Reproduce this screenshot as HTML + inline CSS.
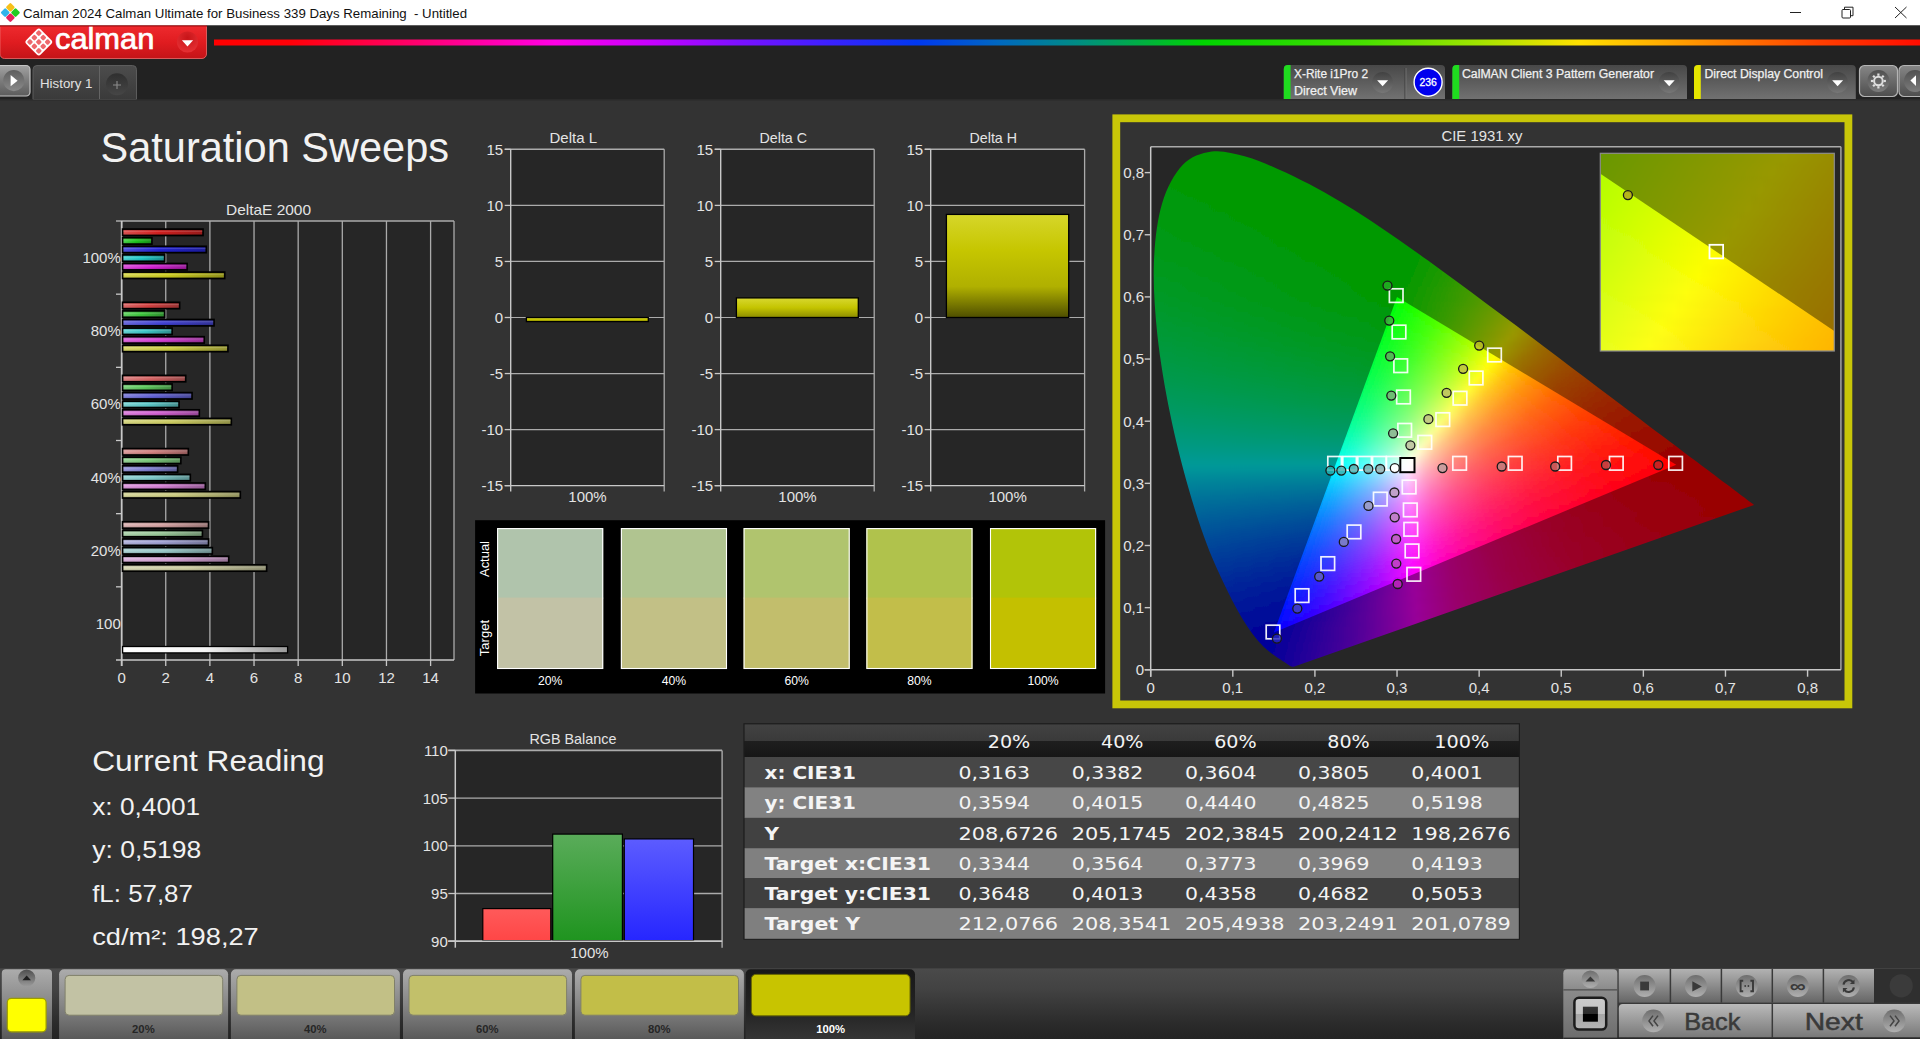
<!DOCTYPE html>
<html lang="en"><head><meta charset="utf-8"><title>Calman 2024 - Saturation Sweeps</title>
<style>
html,body{margin:0;padding:0;background:#333333;overflow:hidden;}
body{width:1920px;height:1039px;font-family:"Liberation Sans",sans-serif;}
svg{display:block;font-family:"Liberation Sans",sans-serif;}
</style></head><body>
<svg width="1920" height="1039" viewBox="0 0 1920 1039">
<defs>
<linearGradient id="rb" x1="0" y1="0" x2="1" y2="0"><stop offset="0" stop-color="#ff0000"/><stop offset="0.045" stop-color="#ff0008"/><stop offset="0.12" stop-color="#ff0070"/><stop offset="0.2" stop-color="#ff00e6"/><stop offset="0.255" stop-color="#c800ff"/><stop offset="0.307" stop-color="#7c10ff"/><stop offset="0.36" stop-color="#3c20ff"/><stop offset="0.412" stop-color="#0038f0"/><stop offset="0.46" stop-color="#0068c0"/><stop offset="0.506" stop-color="#008c84"/><stop offset="0.545" stop-color="#00b040"/><stop offset="0.58" stop-color="#00d400"/><stop offset="0.675" stop-color="#48e000"/><stop offset="0.74" stop-color="#a0e400"/><stop offset="0.8" stop-color="#ffe000"/><stop offset="0.845" stop-color="#ffb000"/><stop offset="0.885" stop-color="#ff8000"/><stop offset="0.94" stop-color="#ff4000"/><stop offset="1" stop-color="#ff0c00"/></linearGradient>
<linearGradient id="cr" x1="0" y1="0" x2="0" y2="1"><stop offset="0" stop-color="#ee2a2e"/><stop offset="0.5" stop-color="#e01c20"/><stop offset="1" stop-color="#c41418"/></linearGradient>
<radialGradient id="crd" cx="0.5" cy="0.3" r="0.8"><stop offset="0" stop-color="#c81418"/><stop offset="1" stop-color="#ea3438"/></radialGradient>
<linearGradient id="pb" x1="0" y1="0" x2="0" y2="1"><stop offset="0" stop-color="#a2a2a2"/><stop offset="0.5" stop-color="#7c7c7c"/><stop offset="1" stop-color="#5c5c5c"/></linearGradient>
<linearGradient id="pbc" x1="0" y1="0" x2="0" y2="1"><stop offset="0" stop-color="#5e5e5e"/><stop offset="1" stop-color="#8a8a8a"/></linearGradient>
<linearGradient id="ht" x1="0" y1="0" x2="0" y2="1"><stop offset="0" stop-color="#4c4c4c"/><stop offset="1" stop-color="#3a3a3a"/></linearGradient>
<linearGradient id="plc" x1="0" y1="0" x2="0" y2="1"><stop offset="0" stop-color="#2f2f2f"/><stop offset="1" stop-color="#464646"/></linearGradient>
<linearGradient id="tb" x1="0" y1="0" x2="0" y2="1"><stop offset="0" stop-color="#484848"/><stop offset="1" stop-color="#717171"/></linearGradient>
<linearGradient id="ddc" x1="0" y1="0" x2="0" y2="1"><stop offset="0" stop-color="#414141"/><stop offset="1" stop-color="#777777"/></linearGradient>
<linearGradient id="gb" x1="0" y1="0" x2="0" y2="1"><stop offset="0" stop-color="#868686"/><stop offset="1" stop-color="#4e4e4e"/></linearGradient>
<linearGradient id="gbc" x1="0" y1="0" x2="0" y2="1"><stop offset="0" stop-color="#505050"/><stop offset="1" stop-color="#7c7c7c"/></linearGradient>
<linearGradient id="gloss" x1="0" y1="0" x2="0" y2="1"><stop offset="0" stop-color="rgba(0,0,0,0.18)"/><stop offset="0.3" stop-color="rgba(255,255,255,0.22)"/><stop offset="0.55" stop-color="rgba(255,255,255,0.05)"/><stop offset="1" stop-color="rgba(0,0,0,0.22)"/></linearGradient>
<linearGradient id="b0" x1="0" y1="0" x2="1" y2="0"><stop offset="0" stop-color="#da4545"/><stop offset="0.45" stop-color="#d01010"/><stop offset="1" stop-color="#920b0b"/></linearGradient>
<linearGradient id="b1" x1="0" y1="0" x2="1" y2="0"><stop offset="0" stop-color="#45d145"/><stop offset="0.45" stop-color="#10c410"/><stop offset="1" stop-color="#0b890b"/></linearGradient>
<linearGradient id="b2" x1="0" y1="0" x2="1" y2="0"><stop offset="0" stop-color="#4545da"/><stop offset="0.45" stop-color="#1010d0"/><stop offset="1" stop-color="#0b0b92"/></linearGradient>
<linearGradient id="b3" x1="0" y1="0" x2="1" y2="0"><stop offset="0" stop-color="#45d1d1"/><stop offset="0.45" stop-color="#10c4c4"/><stop offset="1" stop-color="#0b8989"/></linearGradient>
<linearGradient id="b4" x1="0" y1="0" x2="1" y2="0"><stop offset="0" stop-color="#da45da"/><stop offset="0.45" stop-color="#d010d0"/><stop offset="1" stop-color="#920b92"/></linearGradient>
<linearGradient id="b5" x1="0" y1="0" x2="1" y2="0"><stop offset="0" stop-color="#d4d445"/><stop offset="0.45" stop-color="#c8c810"/><stop offset="1" stop-color="#8c8c0b"/></linearGradient>
<linearGradient id="b6" x1="0" y1="0" x2="1" y2="0"><stop offset="0" stop-color="#da5f5f"/><stop offset="0.45" stop-color="#d03232"/><stop offset="1" stop-color="#922323"/></linearGradient>
<linearGradient id="b7" x1="0" y1="0" x2="1" y2="0"><stop offset="0" stop-color="#5ed15e"/><stop offset="0.45" stop-color="#30c430"/><stop offset="1" stop-color="#228922"/></linearGradient>
<linearGradient id="b8" x1="0" y1="0" x2="1" y2="0"><stop offset="0" stop-color="#5f5fda"/><stop offset="0.45" stop-color="#3232d0"/><stop offset="1" stop-color="#232392"/></linearGradient>
<linearGradient id="b9" x1="0" y1="0" x2="1" y2="0"><stop offset="0" stop-color="#5ed1d1"/><stop offset="0.45" stop-color="#30c4c4"/><stop offset="1" stop-color="#228989"/></linearGradient>
<linearGradient id="b10" x1="0" y1="0" x2="1" y2="0"><stop offset="0" stop-color="#da5fda"/><stop offset="0.45" stop-color="#d032d0"/><stop offset="1" stop-color="#922392"/></linearGradient>
<linearGradient id="b11" x1="0" y1="0" x2="1" y2="0"><stop offset="0" stop-color="#d4d45f"/><stop offset="0.45" stop-color="#c8c832"/><stop offset="1" stop-color="#8c8c23"/></linearGradient>
<linearGradient id="b12" x1="0" y1="0" x2="1" y2="0"><stop offset="0" stop-color="#da7a7a"/><stop offset="0.45" stop-color="#d05555"/><stop offset="1" stop-color="#923c3c"/></linearGradient>
<linearGradient id="b13" x1="0" y1="0" x2="1" y2="0"><stop offset="0" stop-color="#76d176"/><stop offset="0.45" stop-color="#50c450"/><stop offset="1" stop-color="#388938"/></linearGradient>
<linearGradient id="b14" x1="0" y1="0" x2="1" y2="0"><stop offset="0" stop-color="#7a7ada"/><stop offset="0.45" stop-color="#5555d0"/><stop offset="1" stop-color="#3c3c92"/></linearGradient>
<linearGradient id="b15" x1="0" y1="0" x2="1" y2="0"><stop offset="0" stop-color="#76d1d1"/><stop offset="0.45" stop-color="#50c4c4"/><stop offset="1" stop-color="#388989"/></linearGradient>
<linearGradient id="b16" x1="0" y1="0" x2="1" y2="0"><stop offset="0" stop-color="#da7ada"/><stop offset="0.45" stop-color="#d055d0"/><stop offset="1" stop-color="#923c92"/></linearGradient>
<linearGradient id="b17" x1="0" y1="0" x2="1" y2="0"><stop offset="0" stop-color="#d4d47a"/><stop offset="0.45" stop-color="#c8c855"/><stop offset="1" stop-color="#8c8c3c"/></linearGradient>
<linearGradient id="b18" x1="0" y1="0" x2="1" y2="0"><stop offset="0" stop-color="#da9595"/><stop offset="0.45" stop-color="#d07777"/><stop offset="1" stop-color="#925353"/></linearGradient>
<linearGradient id="b19" x1="0" y1="0" x2="1" y2="0"><stop offset="0" stop-color="#90d190"/><stop offset="0.45" stop-color="#71c471"/><stop offset="1" stop-color="#4f894f"/></linearGradient>
<linearGradient id="b20" x1="0" y1="0" x2="1" y2="0"><stop offset="0" stop-color="#9595da"/><stop offset="0.45" stop-color="#7777d0"/><stop offset="1" stop-color="#535392"/></linearGradient>
<linearGradient id="b21" x1="0" y1="0" x2="1" y2="0"><stop offset="0" stop-color="#90d1d1"/><stop offset="0.45" stop-color="#71c4c4"/><stop offset="1" stop-color="#4f8989"/></linearGradient>
<linearGradient id="b22" x1="0" y1="0" x2="1" y2="0"><stop offset="0" stop-color="#da95da"/><stop offset="0.45" stop-color="#d077d0"/><stop offset="1" stop-color="#925392"/></linearGradient>
<linearGradient id="b23" x1="0" y1="0" x2="1" y2="0"><stop offset="0" stop-color="#d4d495"/><stop offset="0.45" stop-color="#c8c877"/><stop offset="1" stop-color="#8c8c53"/></linearGradient>
<linearGradient id="b24" x1="0" y1="0" x2="1" y2="0"><stop offset="0" stop-color="#dab0b0"/><stop offset="0.45" stop-color="#d09a9a"/><stop offset="1" stop-color="#926c6c"/></linearGradient>
<linearGradient id="b25" x1="0" y1="0" x2="1" y2="0"><stop offset="0" stop-color="#a9d1a9"/><stop offset="0.45" stop-color="#91c491"/><stop offset="1" stop-color="#668966"/></linearGradient>
<linearGradient id="b26" x1="0" y1="0" x2="1" y2="0"><stop offset="0" stop-color="#b0b0da"/><stop offset="0.45" stop-color="#9a9ad0"/><stop offset="1" stop-color="#6c6c92"/></linearGradient>
<linearGradient id="b27" x1="0" y1="0" x2="1" y2="0"><stop offset="0" stop-color="#a9d1d1"/><stop offset="0.45" stop-color="#91c4c4"/><stop offset="1" stop-color="#668989"/></linearGradient>
<linearGradient id="b28" x1="0" y1="0" x2="1" y2="0"><stop offset="0" stop-color="#dab0da"/><stop offset="0.45" stop-color="#d09ad0"/><stop offset="1" stop-color="#926c92"/></linearGradient>
<linearGradient id="b29" x1="0" y1="0" x2="1" y2="0"><stop offset="0" stop-color="#d4d4b0"/><stop offset="0.45" stop-color="#c8c89a"/><stop offset="1" stop-color="#8c8c6c"/></linearGradient>
<linearGradient id="bw" x1="0" y1="0" x2="1" y2="0"><stop offset="0" stop-color="#ffffff"/><stop offset="0.5" stop-color="#f4f4f4"/><stop offset="1" stop-color="#9a9a9a"/></linearGradient>
<linearGradient id="ybar" x1="0" y1="0" x2="0" y2="1"><stop offset="0" stop-color="#d6d62a"/><stop offset="0.35" stop-color="#c6c600"/><stop offset="0.7" stop-color="#b0b000"/><stop offset="1" stop-color="#4e4e00"/></linearGradient>
<linearGradient id="ybar2" x1="0" y1="0" x2="0" y2="1"><stop offset="0" stop-color="#d8d830"/><stop offset="0.5" stop-color="#c4c400"/><stop offset="1" stop-color="#8c8c00"/></linearGradient>
<linearGradient id="co0" gradientUnits="userSpaceOnUse" x1="1186.1" x2="1261.7" y1="0" y2="0"><stop offset="0.000" stop-color="#009900"/><stop offset="1.000" stop-color="#009900"/></linearGradient><linearGradient id="co1" gradientUnits="userSpaceOnUse" x1="1175.4" x2="1274.8" y1="0" y2="0"><stop offset="0.000" stop-color="#009900"/><stop offset="1.000" stop-color="#009900"/></linearGradient><linearGradient id="co2" gradientUnits="userSpaceOnUse" x1="1172.2" x2="1287.5" y1="0" y2="0"><stop offset="0.000" stop-color="#009900"/><stop offset="1.000" stop-color="#009900"/></linearGradient><linearGradient id="co3" gradientUnits="userSpaceOnUse" x1="1169.5" x2="1297.9" y1="0" y2="0"><stop offset="0.000" stop-color="#009901"/><stop offset="1.000" stop-color="#009900"/></linearGradient><linearGradient id="co4" gradientUnits="userSpaceOnUse" x1="1166.8" x2="1308.3" y1="0" y2="0"><stop offset="0.000" stop-color="#009902"/><stop offset="1.000" stop-color="#009900"/></linearGradient><linearGradient id="co5" gradientUnits="userSpaceOnUse" x1="1164.1" x2="1318.4" y1="0" y2="0"><stop offset="0.000" stop-color="#009904"/><stop offset="0.800" stop-color="#009900"/><stop offset="1.000" stop-color="#009900"/></linearGradient><linearGradient id="co6" gradientUnits="userSpaceOnUse" x1="1161.5" x2="1327.3" y1="0" y2="0"><stop offset="0.000" stop-color="#009905"/><stop offset="0.556" stop-color="#009900"/><stop offset="1.000" stop-color="#009900"/></linearGradient><linearGradient id="co7" gradientUnits="userSpaceOnUse" x1="1158.8" x2="1336.2" y1="0" y2="0"><stop offset="0.000" stop-color="#009906"/><stop offset="0.552" stop-color="#009900"/><stop offset="1.000" stop-color="#009900"/></linearGradient><linearGradient id="co8" gradientUnits="userSpaceOnUse" x1="1156.1" x2="1345.1" y1="0" y2="0"><stop offset="0.000" stop-color="#009908"/><stop offset="0.516" stop-color="#009900"/><stop offset="1.000" stop-color="#009900"/></linearGradient><linearGradient id="co9" gradientUnits="userSpaceOnUse" x1="1153.9" x2="1353.3" y1="0" y2="0"><stop offset="0.000" stop-color="#009909"/><stop offset="0.545" stop-color="#009900"/><stop offset="1.000" stop-color="#009900"/></linearGradient><linearGradient id="co10" gradientUnits="userSpaceOnUse" x1="1153.2" x2="1361.2" y1="0" y2="0"><stop offset="0.000" stop-color="#00990b"/><stop offset="0.500" stop-color="#009900"/><stop offset="1.000" stop-color="#009900"/></linearGradient><linearGradient id="co11" gradientUnits="userSpaceOnUse" x1="1152.6" x2="1369.2" y1="0" y2="0"><stop offset="0.000" stop-color="#00990c"/><stop offset="0.556" stop-color="#009900"/><stop offset="1.000" stop-color="#009900"/></linearGradient><linearGradient id="co12" gradientUnits="userSpaceOnUse" x1="1151.9" x2="1377.2" y1="0" y2="0"><stop offset="0.000" stop-color="#00990d"/><stop offset="0.541" stop-color="#009900"/><stop offset="1.000" stop-color="#009900"/></linearGradient><linearGradient id="co13" gradientUnits="userSpaceOnUse" x1="1151.2" x2="1384.6" y1="0" y2="0"><stop offset="0.000" stop-color="#00990f"/><stop offset="0.579" stop-color="#009900"/><stop offset="1.000" stop-color="#009900"/></linearGradient><linearGradient id="co14" gradientUnits="userSpaceOnUse" x1="1150.7" x2="1392.0" y1="0" y2="0"><stop offset="0.000" stop-color="#009910"/><stop offset="0.575" stop-color="#009900"/><stop offset="1.000" stop-color="#009900"/></linearGradient><linearGradient id="co15" gradientUnits="userSpaceOnUse" x1="1150.7" x2="1399.3" y1="0" y2="0"><stop offset="0.000" stop-color="#009911"/><stop offset="0.610" stop-color="#009900"/><stop offset="1.000" stop-color="#009900"/></linearGradient><linearGradient id="co16" gradientUnits="userSpaceOnUse" x1="1150.7" x2="1406.7" y1="0" y2="0"><stop offset="0.000" stop-color="#009913"/><stop offset="0.619" stop-color="#009900"/><stop offset="1.000" stop-color="#009900"/></linearGradient><linearGradient id="co17" gradientUnits="userSpaceOnUse" x1="1150.7" x2="1413.8" y1="0" y2="0"><stop offset="0.000" stop-color="#009914"/><stop offset="0.628" stop-color="#009900"/><stop offset="1.000" stop-color="#009900"/></linearGradient><linearGradient id="co18" gradientUnits="userSpaceOnUse" x1="1150.7" x2="1420.8" y1="0" y2="0"><stop offset="0.000" stop-color="#009915"/><stop offset="0.644" stop-color="#009900"/><stop offset="1.000" stop-color="#029900"/></linearGradient><linearGradient id="co19" gradientUnits="userSpaceOnUse" x1="1150.7" x2="1427.9" y1="0" y2="0"><stop offset="0.000" stop-color="#009917"/><stop offset="0.630" stop-color="#009900"/><stop offset="0.957" stop-color="#009900"/><stop offset="1.000" stop-color="#089900"/></linearGradient><linearGradient id="co20" gradientUnits="userSpaceOnUse" x1="1150.7" x2="1435.0" y1="0" y2="0"><stop offset="0.000" stop-color="#009918"/><stop offset="0.660" stop-color="#009900"/><stop offset="0.936" stop-color="#029900"/><stop offset="1.000" stop-color="#0f9900"/></linearGradient><linearGradient id="co21" gradientUnits="userSpaceOnUse" x1="1150.7" x2="1441.9" y1="0" y2="0"><stop offset="0.000" stop-color="#00991a"/><stop offset="0.667" stop-color="#009900"/><stop offset="0.896" stop-color="#009900"/><stop offset="1.000" stop-color="#169900"/></linearGradient><linearGradient id="co22" gradientUnits="userSpaceOnUse" x1="1150.7" x2="1448.7" y1="0" y2="0"><stop offset="0.000" stop-color="#00991b"/><stop offset="0.673" stop-color="#009900"/><stop offset="0.878" stop-color="#019900"/><stop offset="1.000" stop-color="#1e9900"/></linearGradient><linearGradient id="co23" gradientUnits="userSpaceOnUse" x1="1150.7" x2="1455.6" y1="0" y2="0"><stop offset="0.000" stop-color="#00991d"/><stop offset="0.700" stop-color="#009900"/><stop offset="0.860" stop-color="#039900"/><stop offset="1.000" stop-color="#269900"/></linearGradient><linearGradient id="co24" gradientUnits="userSpaceOnUse" x1="1150.7" x2="1462.5" y1="0" y2="0"><stop offset="0.000" stop-color="#00991f"/><stop offset="0.706" stop-color="#009900"/><stop offset="0.824" stop-color="#009900"/><stop offset="1.000" stop-color="#2e9900"/></linearGradient><linearGradient id="co25" gradientUnits="userSpaceOnUse" x1="1150.7" x2="1469.3" y1="0" y2="0"><stop offset="0.000" stop-color="#009920"/><stop offset="0.717" stop-color="#009900"/><stop offset="0.811" stop-color="#039900"/><stop offset="1.000" stop-color="#379900"/></linearGradient><linearGradient id="co26" gradientUnits="userSpaceOnUse" x1="1150.7" x2="1476.0" y1="0" y2="0"><stop offset="0.000" stop-color="#009922"/><stop offset="0.722" stop-color="#009900"/><stop offset="0.778" stop-color="#009900"/><stop offset="1.000" stop-color="#409900"/></linearGradient><linearGradient id="co27" gradientUnits="userSpaceOnUse" x1="1150.7" x2="1482.7" y1="0" y2="0"><stop offset="0.000" stop-color="#009924"/><stop offset="0.727" stop-color="#009900"/><stop offset="0.782" stop-color="#079900"/><stop offset="1.000" stop-color="#499900"/></linearGradient><linearGradient id="co28" gradientUnits="userSpaceOnUse" x1="1150.7" x2="1489.5" y1="0" y2="0"><stop offset="0.000" stop-color="#009925"/><stop offset="0.625" stop-color="#009905"/><stop offset="0.732" stop-color="#009900"/><stop offset="0.982" stop-color="#4d9900"/><stop offset="1.000" stop-color="#549900"/></linearGradient><linearGradient id="co29" gradientUnits="userSpaceOnUse" x1="1150.7" x2="1496.2" y1="0" y2="0"><stop offset="0.000" stop-color="#009927"/><stop offset="0.667" stop-color="#009903"/><stop offset="0.719" stop-color="#019900"/><stop offset="0.965" stop-color="#519900"/><stop offset="1.000" stop-color="#5e9900"/></linearGradient><linearGradient id="co30" gradientUnits="userSpaceOnUse" x1="1150.7" x2="1502.9" y1="0" y2="0"><stop offset="0.000" stop-color="#009929"/><stop offset="0.690" stop-color="#009902"/><stop offset="0.862" stop-color="#359900"/><stop offset="1.000" stop-color="#6a9900"/></linearGradient><linearGradient id="co31" gradientUnits="userSpaceOnUse" x1="1150.7" x2="1509.6" y1="0" y2="0"><stop offset="0.000" stop-color="#00992b"/><stop offset="0.661" stop-color="#009905"/><stop offset="0.695" stop-color="#059902"/><stop offset="0.898" stop-color="#4c9900"/><stop offset="1.000" stop-color="#769900"/></linearGradient><linearGradient id="co32" gradientUnits="userSpaceOnUse" x1="1150.7" x2="1516.3" y1="0" y2="0"><stop offset="0.000" stop-color="#00992d"/><stop offset="0.650" stop-color="#009907"/><stop offset="0.750" stop-color="#1d9900"/><stop offset="0.950" stop-color="#6c9900"/><stop offset="1.000" stop-color="#849900"/></linearGradient><linearGradient id="co33" gradientUnits="userSpaceOnUse" x1="1150.7" x2="1523.0" y1="0" y2="0"><stop offset="0.000" stop-color="#00992f"/><stop offset="0.581" stop-color="#00990d"/><stop offset="0.645" stop-color="#009908"/><stop offset="0.790" stop-color="#349900"/><stop offset="0.968" stop-color="#829900"/><stop offset="1.000" stop-color="#929900"/></linearGradient><linearGradient id="co34" gradientUnits="userSpaceOnUse" x1="1150.7" x2="1529.7" y1="0" y2="0"><stop offset="0.000" stop-color="#009931"/><stop offset="0.556" stop-color="#009911"/><stop offset="0.635" stop-color="#02990a"/><stop offset="0.778" stop-color="#379900"/><stop offset="0.952" stop-color="#879900"/><stop offset="0.984" stop-color="#989900"/><stop offset="1.000" stop-color="#999100"/></linearGradient><linearGradient id="co35" gradientUnits="userSpaceOnUse" x1="1150.7" x2="1536.3" y1="0" y2="0"><stop offset="0.000" stop-color="#009933"/><stop offset="0.563" stop-color="#009912"/><stop offset="0.609" stop-color="#00990e"/><stop offset="0.797" stop-color="#489900"/><stop offset="0.953" stop-color="#969900"/><stop offset="1.000" stop-color="#998400"/></linearGradient><linearGradient id="co36" gradientUnits="userSpaceOnUse" x1="1150.7" x2="1542.9" y1="0" y2="0"><stop offset="0.000" stop-color="#009936"/><stop offset="0.600" stop-color="#019910"/><stop offset="0.785" stop-color="#4d9900"/><stop offset="0.923" stop-color="#949900"/><stop offset="0.954" stop-color="#998d00"/><stop offset="1.000" stop-color="#997800"/></linearGradient><linearGradient id="co37" gradientUnits="userSpaceOnUse" x1="1150.7" x2="1549.6" y1="0" y2="0"><stop offset="0.000" stop-color="#009938"/><stop offset="0.545" stop-color="#009916"/><stop offset="0.591" stop-color="#039912"/><stop offset="0.773" stop-color="#519900"/><stop offset="0.909" stop-color="#999700"/><stop offset="1.000" stop-color="#996d00"/></linearGradient><linearGradient id="co38" gradientUnits="userSpaceOnUse" x1="1150.7" x2="1556.2" y1="0" y2="0"><stop offset="0.000" stop-color="#00993a"/><stop offset="0.537" stop-color="#009919"/><stop offset="0.567" stop-color="#009916"/><stop offset="0.731" stop-color="#469906"/><stop offset="0.851" stop-color="#869900"/><stop offset="0.881" stop-color="#989900"/><stop offset="0.970" stop-color="#996e00"/><stop offset="1.000" stop-color="#996400"/></linearGradient><linearGradient id="co39" gradientUnits="userSpaceOnUse" x1="1150.7" x2="1562.8" y1="0" y2="0"><stop offset="0.000" stop-color="#00993d"/><stop offset="0.559" stop-color="#019919"/><stop offset="0.735" stop-color="#529907"/><stop offset="0.824" stop-color="#849900"/><stop offset="0.853" stop-color="#969900"/><stop offset="0.956" stop-color="#996900"/><stop offset="1.000" stop-color="#995b00"/></linearGradient><linearGradient id="co40" gradientUnits="userSpaceOnUse" x1="1150.7" x2="1569.5" y1="0" y2="0"><stop offset="0.000" stop-color="#00993f"/><stop offset="0.536" stop-color="#00991d"/><stop offset="0.638" stop-color="#2a9913"/><stop offset="0.797" stop-color="#819900"/><stop offset="0.841" stop-color="#999500"/><stop offset="0.928" stop-color="#996a00"/><stop offset="1.000" stop-color="#995300"/></linearGradient><linearGradient id="co41" gradientUnits="userSpaceOnUse" x1="1150.8" x2="1576.1" y1="0" y2="0"><stop offset="0.000" stop-color="#009942"/><stop offset="0.514" stop-color="#009921"/><stop offset="0.543" stop-color="#06991e"/><stop offset="0.714" stop-color="#5b990c"/><stop offset="0.814" stop-color="#999800"/><stop offset="0.886" stop-color="#997100"/><stop offset="1.000" stop-color="#994b00"/></linearGradient><linearGradient id="co42" gradientUnits="userSpaceOnUse" x1="1151.6" x2="1582.7" y1="0" y2="0"><stop offset="0.000" stop-color="#009944"/><stop offset="0.493" stop-color="#009925"/><stop offset="0.521" stop-color="#029922"/><stop offset="0.690" stop-color="#589910"/><stop offset="0.789" stop-color="#989903"/><stop offset="0.859" stop-color="#997200"/><stop offset="0.972" stop-color="#994b00"/><stop offset="1.000" stop-color="#994500"/></linearGradient><linearGradient id="co43" gradientUnits="userSpaceOnUse" x1="1152.4" x2="1589.3" y1="0" y2="0"><stop offset="0.000" stop-color="#009947"/><stop offset="0.486" stop-color="#009928"/><stop offset="0.514" stop-color="#059925"/><stop offset="0.667" stop-color="#559915"/><stop offset="0.764" stop-color="#969908"/><stop offset="0.847" stop-color="#996d00"/><stop offset="0.944" stop-color="#994c00"/><stop offset="1.000" stop-color="#993e00"/></linearGradient><linearGradient id="co44" gradientUnits="userSpaceOnUse" x1="1153.2" x2="1596.0" y1="0" y2="0"><stop offset="0.000" stop-color="#009949"/><stop offset="0.466" stop-color="#00992c"/><stop offset="0.493" stop-color="#019929"/><stop offset="0.644" stop-color="#52991a"/><stop offset="0.740" stop-color="#93990d"/><stop offset="0.767" stop-color="#998b08"/><stop offset="0.849" stop-color="#996200"/><stop offset="0.973" stop-color="#993e00"/><stop offset="1.000" stop-color="#993900"/></linearGradient><linearGradient id="co45" gradientUnits="userSpaceOnUse" x1="1154.0" x2="1602.6" y1="0" y2="0"><stop offset="0.000" stop-color="#00994c"/><stop offset="0.473" stop-color="#00992e"/><stop offset="0.595" stop-color="#3e9922"/><stop offset="0.730" stop-color="#999710"/><stop offset="0.797" stop-color="#996e04"/><stop offset="0.905" stop-color="#994800"/><stop offset="1.000" stop-color="#993300"/></linearGradient><linearGradient id="co46" gradientUnits="userSpaceOnUse" x1="1154.8" x2="1609.2" y1="0" y2="0"><stop offset="0.000" stop-color="#00994f"/><stop offset="0.440" stop-color="#009934"/><stop offset="0.467" stop-color="#009931"/><stop offset="0.613" stop-color="#549922"/><stop offset="0.707" stop-color="#999916"/><stop offset="0.773" stop-color="#996f08"/><stop offset="0.880" stop-color="#994800"/><stop offset="1.000" stop-color="#992e00"/></linearGradient><linearGradient id="co47" gradientUnits="userSpaceOnUse" x1="1155.6" x2="1615.9" y1="0" y2="0"><stop offset="0.000" stop-color="#009952"/><stop offset="0.461" stop-color="#039935"/><stop offset="0.592" stop-color="#519927"/><stop offset="0.684" stop-color="#96991b"/><stop offset="0.763" stop-color="#996a0a"/><stop offset="0.868" stop-color="#994400"/><stop offset="1.000" stop-color="#992a00"/></linearGradient><linearGradient id="co48" gradientUnits="userSpaceOnUse" x1="1156.4" x2="1622.5" y1="0" y2="0"><stop offset="0.000" stop-color="#009955"/><stop offset="0.442" stop-color="#00993a"/><stop offset="0.558" stop-color="#45992e"/><stop offset="0.662" stop-color="#939921"/><stop offset="0.688" stop-color="#998a1a"/><stop offset="0.753" stop-color="#99640c"/><stop offset="0.870" stop-color="#993d00"/><stop offset="1.000" stop-color="#992500"/></linearGradient><linearGradient id="co49" gradientUnits="userSpaceOnUse" x1="1157.3" x2="1629.2" y1="0" y2="0"><stop offset="0.000" stop-color="#009959"/><stop offset="0.436" stop-color="#02993e"/><stop offset="0.564" stop-color="#539931"/><stop offset="0.654" stop-color="#999625"/><stop offset="0.718" stop-color="#996b13"/><stop offset="0.795" stop-color="#994c06"/><stop offset="0.923" stop-color="#992d00"/><stop offset="1.000" stop-color="#992100"/></linearGradient><linearGradient id="co50" gradientUnits="userSpaceOnUse" x1="1158.1" x2="1635.8" y1="0" y2="0"><stop offset="0.000" stop-color="#00995c"/><stop offset="0.418" stop-color="#009943"/><stop offset="0.506" stop-color="#35993b"/><stop offset="0.608" stop-color="#83992f"/><stop offset="0.633" stop-color="#99992b"/><stop offset="0.684" stop-color="#99731b"/><stop offset="0.759" stop-color="#99500c"/><stop offset="0.886" stop-color="#992f00"/><stop offset="1.000" stop-color="#991e00"/></linearGradient><linearGradient id="co51" gradientUnits="userSpaceOnUse" x1="1158.9" x2="1642.4" y1="0" y2="0"><stop offset="0.000" stop-color="#00995f"/><stop offset="0.413" stop-color="#019947"/><stop offset="0.525" stop-color="#4c993d"/><stop offset="0.613" stop-color="#979932"/><stop offset="0.675" stop-color="#996d1d"/><stop offset="0.762" stop-color="#99470c"/><stop offset="0.887" stop-color="#992a00"/><stop offset="1.000" stop-color="#991a00"/></linearGradient><linearGradient id="co52" gradientUnits="userSpaceOnUse" x1="1159.7" x2="1649.0" y1="0" y2="0"><stop offset="0.000" stop-color="#009963"/><stop offset="0.395" stop-color="#00994d"/><stop offset="0.444" stop-color="#1c9949"/><stop offset="0.543" stop-color="#67993f"/><stop offset="0.593" stop-color="#949939"/><stop offset="0.617" stop-color="#99882f"/><stop offset="0.667" stop-color="#99671f"/><stop offset="0.753" stop-color="#99430d"/><stop offset="0.889" stop-color="#992500"/><stop offset="1.000" stop-color="#991700"/></linearGradient><linearGradient id="co53" gradientUnits="userSpaceOnUse" x1="1160.5" x2="1655.6" y1="0" y2="0"><stop offset="0.000" stop-color="#009967"/><stop offset="0.390" stop-color="#009952"/><stop offset="0.488" stop-color="#459949"/><stop offset="0.573" stop-color="#919940"/><stop offset="0.585" stop-color="#99953c"/><stop offset="0.646" stop-color="#996724"/><stop offset="0.744" stop-color="#993f0f"/><stop offset="0.890" stop-color="#992100"/><stop offset="1.000" stop-color="#991300"/></linearGradient><linearGradient id="co54" gradientUnits="userSpaceOnUse" x1="1161.3" x2="1662.3" y1="0" y2="0"><stop offset="0.000" stop-color="#00996b"/><stop offset="0.386" stop-color="#039957"/><stop offset="0.494" stop-color="#55994d"/><stop offset="0.566" stop-color="#999845"/><stop offset="0.614" stop-color="#99702e"/><stop offset="0.675" stop-color="#99501c"/><stop offset="0.795" stop-color="#992d08"/><stop offset="0.928" stop-color="#991800"/><stop offset="1.000" stop-color="#991000"/></linearGradient><linearGradient id="co55" gradientUnits="userSpaceOnUse" x1="1162.1" x2="1668.9" y1="0" y2="0"><stop offset="0.000" stop-color="#00996f"/><stop offset="0.369" stop-color="#00995d"/><stop offset="0.464" stop-color="#479955"/><stop offset="0.548" stop-color="#98994d"/><stop offset="0.595" stop-color="#997134"/><stop offset="0.667" stop-color="#994b1e"/><stop offset="0.786" stop-color="#992a0a"/><stop offset="0.917" stop-color="#991600"/><stop offset="1.000" stop-color="#990e00"/></linearGradient><linearGradient id="co56" gradientUnits="userSpaceOnUse" x1="1163.3" x2="1675.5" y1="0" y2="0"><stop offset="0.000" stop-color="#009973"/><stop offset="0.365" stop-color="#029963"/><stop offset="0.459" stop-color="#4e995b"/><stop offset="0.529" stop-color="#959955"/><stop offset="0.576" stop-color="#99723b"/><stop offset="0.647" stop-color="#994b22"/><stop offset="0.765" stop-color="#99290c"/><stop offset="0.918" stop-color="#991300"/><stop offset="1.000" stop-color="#990b00"/></linearGradient><linearGradient id="co57" gradientUnits="userSpaceOnUse" x1="1164.6" x2="1682.2" y1="0" y2="0"><stop offset="0.000" stop-color="#009978"/><stop offset="0.349" stop-color="#009969"/><stop offset="0.419" stop-color="#359965"/><stop offset="0.500" stop-color="#85995e"/><stop offset="0.512" stop-color="#93995d"/><stop offset="0.535" stop-color="#998650"/><stop offset="0.581" stop-color="#996337"/><stop offset="0.651" stop-color="#994221"/><stop offset="0.779" stop-color="#99220b"/><stop offset="0.919" stop-color="#990f00"/><stop offset="1.000" stop-color="#990800"/></linearGradient><linearGradient id="co58" gradientUnits="userSpaceOnUse" x1="1165.8" x2="1688.8" y1="0" y2="0"><stop offset="0.000" stop-color="#00997c"/><stop offset="0.345" stop-color="#029970"/><stop offset="0.425" stop-color="#46996b"/><stop offset="0.494" stop-color="#909966"/><stop offset="0.506" stop-color="#999462"/><stop offset="0.552" stop-color="#996b43"/><stop offset="0.621" stop-color="#994628"/><stop offset="0.724" stop-color="#992812"/><stop offset="0.908" stop-color="#990d00"/><stop offset="1.000" stop-color="#990600"/></linearGradient><linearGradient id="co59" gradientUnits="userSpaceOnUse" x1="1167.0" x2="1695.5" y1="0" y2="0"><stop offset="0.000" stop-color="#009981"/><stop offset="0.330" stop-color="#009977"/><stop offset="0.386" stop-color="#2d9974"/><stop offset="0.466" stop-color="#80996f"/><stop offset="0.489" stop-color="#99976c"/><stop offset="0.534" stop-color="#996b4a"/><stop offset="0.602" stop-color="#99462d"/><stop offset="0.705" stop-color="#992715"/><stop offset="0.886" stop-color="#990d01"/><stop offset="1.000" stop-color="#990300"/></linearGradient><linearGradient id="co60" gradientUnits="userSpaceOnUse" x1="1168.3" x2="1702.2" y1="0" y2="0"><stop offset="0.000" stop-color="#009986"/><stop offset="0.318" stop-color="#00997e"/><stop offset="0.352" stop-color="#18997d"/><stop offset="0.432" stop-color="#689979"/><stop offset="0.466" stop-color="#919978"/><stop offset="0.477" stop-color="#999272"/><stop offset="0.523" stop-color="#99674e"/><stop offset="0.591" stop-color="#994330"/><stop offset="0.682" stop-color="#992719"/><stop offset="0.864" stop-color="#990c03"/><stop offset="1.000" stop-color="#990100"/></linearGradient><linearGradient id="co61" gradientUnits="userSpaceOnUse" x1="1169.5" x2="1708.8" y1="0" y2="0"><stop offset="0.000" stop-color="#00998c"/><stop offset="0.315" stop-color="#009986"/><stop offset="0.393" stop-color="#4b9984"/><stop offset="0.449" stop-color="#8e9981"/><stop offset="0.461" stop-color="#99957e"/><stop offset="0.506" stop-color="#996856"/><stop offset="0.573" stop-color="#994235"/><stop offset="0.674" stop-color="#99241b"/><stop offset="0.854" stop-color="#990a04"/><stop offset="1.000" stop-color="#990000"/></linearGradient><linearGradient id="co62" gradientUnits="userSpaceOnUse" x1="1170.7" x2="1715.4" y1="0" y2="0"><stop offset="0.000" stop-color="#009991"/><stop offset="0.300" stop-color="#00998e"/><stop offset="0.311" stop-color="#04998e"/><stop offset="0.400" stop-color="#60998c"/><stop offset="0.444" stop-color="#99988a"/><stop offset="0.478" stop-color="#997268"/><stop offset="0.533" stop-color="#994c44"/><stop offset="0.622" stop-color="#992b25"/><stop offset="0.756" stop-color="#99120e"/><stop offset="0.944" stop-color="#990000"/><stop offset="1.000" stop-color="#990000"/></linearGradient><linearGradient id="co63" gradientUnits="userSpaceOnUse" x1="1171.9" x2="1722.0" y1="0" y2="0"><stop offset="0.000" stop-color="#009997"/><stop offset="0.297" stop-color="#009997"/><stop offset="0.363" stop-color="#429997"/><stop offset="0.429" stop-color="#979997"/><stop offset="0.462" stop-color="#997371"/><stop offset="0.516" stop-color="#994c4b"/><stop offset="0.593" stop-color="#992d2d"/><stop offset="0.725" stop-color="#991312"/><stop offset="0.934" stop-color="#990000"/><stop offset="1.000" stop-color="#990000"/></linearGradient><linearGradient id="co64" gradientUnits="userSpaceOnUse" x1="1173.2" x2="1728.6" y1="0" y2="0"><stop offset="0.000" stop-color="#009599"/><stop offset="0.283" stop-color="#009299"/><stop offset="0.304" stop-color="#0e9299"/><stop offset="0.380" stop-color="#619199"/><stop offset="0.424" stop-color="#998e97"/><stop offset="0.457" stop-color="#996a71"/><stop offset="0.511" stop-color="#99464b"/><stop offset="0.598" stop-color="#99272b"/><stop offset="0.750" stop-color="#990c0f"/><stop offset="0.924" stop-color="#990000"/><stop offset="1.000" stop-color="#990000"/></linearGradient><linearGradient id="co65" gradientUnits="userSpaceOnUse" x1="1174.4" x2="1735.3" y1="0" y2="0"><stop offset="0.000" stop-color="#008f99"/><stop offset="0.280" stop-color="#008a99"/><stop offset="0.355" stop-color="#4a8899"/><stop offset="0.409" stop-color="#8e8699"/><stop offset="0.419" stop-color="#998295"/><stop offset="0.452" stop-color="#996171"/><stop offset="0.516" stop-color="#993b47"/><stop offset="0.602" stop-color="#992029"/><stop offset="0.753" stop-color="#99090f"/><stop offset="0.892" stop-color="#990002"/><stop offset="1.000" stop-color="#990000"/></linearGradient><linearGradient id="co66" gradientUnits="userSpaceOnUse" x1="1175.6" x2="1741.9" y1="0" y2="0"><stop offset="0.000" stop-color="#008999"/><stop offset="0.277" stop-color="#038299"/><stop offset="0.362" stop-color="#5a7e99"/><stop offset="0.404" stop-color="#907c99"/><stop offset="0.415" stop-color="#997794"/><stop offset="0.457" stop-color="#995268"/><stop offset="0.532" stop-color="#992e3e"/><stop offset="0.649" stop-color="#99131e"/><stop offset="0.840" stop-color="#990006"/><stop offset="1.000" stop-color="#990000"/></linearGradient><linearGradient id="co67" gradientUnits="userSpaceOnUse" x1="1176.9" x2="1748.5" y1="0" y2="0"><stop offset="0.000" stop-color="#008399"/><stop offset="0.263" stop-color="#007a99"/><stop offset="0.337" stop-color="#457699"/><stop offset="0.400" stop-color="#927299"/><stop offset="0.411" stop-color="#996c92"/><stop offset="0.453" stop-color="#994b68"/><stop offset="0.516" stop-color="#992d44"/><stop offset="0.611" stop-color="#991626"/><stop offset="0.779" stop-color="#99010c"/><stop offset="0.968" stop-color="#990000"/><stop offset="1.000" stop-color="#990000"/></linearGradient><linearGradient id="co68" gradientUnits="userSpaceOnUse" x1="1178.1" x2="1755.2" y1="0" y2="0"><stop offset="0.000" stop-color="#007e99"/><stop offset="0.260" stop-color="#037399"/><stop offset="0.344" stop-color="#546d99"/><stop offset="0.396" stop-color="#936999"/><stop offset="0.417" stop-color="#995985"/><stop offset="0.458" stop-color="#993e61"/><stop offset="0.521" stop-color="#992640"/><stop offset="0.635" stop-color="#990e20"/><stop offset="0.792" stop-color="#99000b"/><stop offset="0.969" stop-color="#990000"/><stop offset="1.000" stop-color="#990000"/></linearGradient><linearGradient id="co69" gradientUnits="userSpaceOnUse" x1="1179.3" x2="1761.8" y1="0" y2="0"><stop offset="0.000" stop-color="#007899"/><stop offset="0.247" stop-color="#006c99"/><stop offset="0.320" stop-color="#416799"/><stop offset="0.381" stop-color="#886199"/><stop offset="0.392" stop-color="#956099"/><stop offset="0.433" stop-color="#994371"/><stop offset="0.485" stop-color="#992b4f"/><stop offset="0.567" stop-color="#991530"/><stop offset="0.701" stop-color="#990315"/><stop offset="0.948" stop-color="#990000"/><stop offset="1.000" stop-color="#990000"/></linearGradient><linearGradient id="co70" gradientUnits="userSpaceOnUse" x1="1180.7" x2="1762.0" y1="0" y2="0"><stop offset="0.000" stop-color="#007399"/><stop offset="0.240" stop-color="#006699"/><stop offset="0.281" stop-color="#1f6399"/><stop offset="0.365" stop-color="#755b99"/><stop offset="0.396" stop-color="#995696"/><stop offset="0.438" stop-color="#993a6d"/><stop offset="0.500" stop-color="#992248"/><stop offset="0.594" stop-color="#990e2a"/><stop offset="0.729" stop-color="#990013"/><stop offset="0.969" stop-color="#990000"/><stop offset="1.000" stop-color="#990000"/></linearGradient><linearGradient id="co71" gradientUnits="userSpaceOnUse" x1="1182.4" x2="1762.0" y1="0" y2="0"><stop offset="0.000" stop-color="#006e99"/><stop offset="0.240" stop-color="#005f99"/><stop offset="0.333" stop-color="#555799"/><stop offset="0.385" stop-color="#905199"/><stop offset="0.396" stop-color="#994d95"/><stop offset="0.437" stop-color="#99346d"/><stop offset="0.500" stop-color="#991e49"/><stop offset="0.594" stop-color="#990b2b"/><stop offset="0.719" stop-color="#990015"/><stop offset="0.969" stop-color="#990000"/><stop offset="1.000" stop-color="#990000"/></linearGradient><linearGradient id="co72" gradientUnits="userSpaceOnUse" x1="1184.0" x2="1762.0" y1="0" y2="0"><stop offset="0.000" stop-color="#006999"/><stop offset="0.229" stop-color="#005a99"/><stop offset="0.281" stop-color="#275599"/><stop offset="0.365" stop-color="#794c99"/><stop offset="0.385" stop-color="#924999"/><stop offset="0.396" stop-color="#994594"/><stop offset="0.438" stop-color="#992f6d"/><stop offset="0.500" stop-color="#991a4a"/><stop offset="0.594" stop-color="#99082c"/><stop offset="0.708" stop-color="#990017"/><stop offset="0.979" stop-color="#990000"/><stop offset="1.000" stop-color="#990000"/></linearGradient><linearGradient id="co73" gradientUnits="userSpaceOnUse" x1="1185.6" x2="1762.0" y1="0" y2="0"><stop offset="0.000" stop-color="#006499"/><stop offset="0.229" stop-color="#015499"/><stop offset="0.323" stop-color="#504a99"/><stop offset="0.385" stop-color="#934299"/><stop offset="0.406" stop-color="#993787"/><stop offset="0.458" stop-color="#992260"/><stop offset="0.531" stop-color="#99103f"/><stop offset="0.646" stop-color="#990022"/><stop offset="0.865" stop-color="#990008"/><stop offset="1.000" stop-color="#990000"/></linearGradient><linearGradient id="co74" gradientUnits="userSpaceOnUse" x1="1187.3" x2="1750.9" y1="0" y2="0"><stop offset="0.000" stop-color="#005f99"/><stop offset="0.226" stop-color="#004f99"/><stop offset="0.312" stop-color="#434699"/><stop offset="0.398" stop-color="#993a98"/><stop offset="0.441" stop-color="#992671"/><stop offset="0.505" stop-color="#99134d"/><stop offset="0.613" stop-color="#99022c"/><stop offset="0.796" stop-color="#990011"/><stop offset="1.000" stop-color="#990002"/></linearGradient><linearGradient id="co75" gradientUnits="userSpaceOnUse" x1="1188.9" x2="1736.7" y1="0" y2="0"><stop offset="0.000" stop-color="#005b99"/><stop offset="0.231" stop-color="#024999"/><stop offset="0.341" stop-color="#583d99"/><stop offset="0.407" stop-color="#993398"/><stop offset="0.451" stop-color="#992172"/><stop offset="0.516" stop-color="#99104f"/><stop offset="0.615" stop-color="#990130"/><stop offset="0.791" stop-color="#990014"/><stop offset="1.000" stop-color="#990004"/></linearGradient><linearGradient id="co76" gradientUnits="userSpaceOnUse" x1="1190.5" x2="1722.5" y1="0" y2="0"><stop offset="0.000" stop-color="#005699"/><stop offset="0.227" stop-color="#004599"/><stop offset="0.330" stop-color="#4a3999"/><stop offset="0.409" stop-color="#932f99"/><stop offset="0.432" stop-color="#992789"/><stop offset="0.489" stop-color="#991562"/><stop offset="0.580" stop-color="#99053e"/><stop offset="0.693" stop-color="#990025"/><stop offset="0.909" stop-color="#99000c"/><stop offset="1.000" stop-color="#990006"/></linearGradient><linearGradient id="co77" gradientUnits="userSpaceOnUse" x1="1192.2" x2="1708.2" y1="0" y2="0"><stop offset="0.000" stop-color="#005299"/><stop offset="0.233" stop-color="#033f99"/><stop offset="0.337" stop-color="#4c3499"/><stop offset="0.419" stop-color="#922999"/><stop offset="0.430" stop-color="#992694"/><stop offset="0.500" stop-color="#991164"/><stop offset="0.593" stop-color="#990240"/><stop offset="0.744" stop-color="#990021"/><stop offset="1.000" stop-color="#990009"/></linearGradient><linearGradient id="co78" gradientUnits="userSpaceOnUse" x1="1193.8" x2="1694.0" y1="0" y2="0"><stop offset="0.000" stop-color="#004d99"/><stop offset="0.229" stop-color="#003b99"/><stop offset="0.361" stop-color="#592d99"/><stop offset="0.434" stop-color="#972299"/><stop offset="0.506" stop-color="#990f68"/><stop offset="0.602" stop-color="#990143"/><stop offset="0.747" stop-color="#990025"/><stop offset="1.000" stop-color="#99000b"/></linearGradient><linearGradient id="co79" gradientUnits="userSpaceOnUse" x1="1195.4" x2="1679.8" y1="0" y2="0"><stop offset="0.000" stop-color="#004999"/><stop offset="0.225" stop-color="#003799"/><stop offset="0.325" stop-color="#3a2d99"/><stop offset="0.450" stop-color="#991c97"/><stop offset="0.512" stop-color="#990d6d"/><stop offset="0.600" stop-color="#99004a"/><stop offset="0.725" stop-color="#99002d"/><stop offset="0.938" stop-color="#990013"/><stop offset="1.000" stop-color="#99000e"/></linearGradient><linearGradient id="co80" gradientUnits="userSpaceOnUse" x1="1197.1" x2="1665.6" y1="0" y2="0"><stop offset="0.000" stop-color="#004599"/><stop offset="0.231" stop-color="#013399"/><stop offset="0.359" stop-color="#4d2599"/><stop offset="0.462" stop-color="#991798"/><stop offset="0.526" stop-color="#99096e"/><stop offset="0.615" stop-color="#99004b"/><stop offset="0.769" stop-color="#99002a"/><stop offset="1.000" stop-color="#990011"/></linearGradient><linearGradient id="co81" gradientUnits="userSpaceOnUse" x1="1198.7" x2="1651.3" y1="0" y2="0"><stop offset="0.000" stop-color="#004199"/><stop offset="0.227" stop-color="#002f99"/><stop offset="0.333" stop-color="#382499"/><stop offset="0.453" stop-color="#891599"/><stop offset="0.480" stop-color="#991194"/><stop offset="0.547" stop-color="#99046c"/><stop offset="0.653" stop-color="#990047"/><stop offset="0.800" stop-color="#99002a"/><stop offset="1.000" stop-color="#990014"/></linearGradient><linearGradient id="co82" gradientUnits="userSpaceOnUse" x1="1200.7" x2="1637.1" y1="0" y2="0"><stop offset="0.000" stop-color="#003d99"/><stop offset="0.236" stop-color="#032a99"/><stop offset="0.389" stop-color="#561a99"/><stop offset="0.486" stop-color="#980d99"/><stop offset="0.569" stop-color="#99006a"/><stop offset="0.681" stop-color="#990046"/><stop offset="0.861" stop-color="#990026"/><stop offset="1.000" stop-color="#990018"/></linearGradient><linearGradient id="co83" gradientUnits="userSpaceOnUse" x1="1202.9" x2="1622.9" y1="0" y2="0"><stop offset="0.000" stop-color="#003999"/><stop offset="0.232" stop-color="#012799"/><stop offset="0.391" stop-color="#521799"/><stop offset="0.493" stop-color="#930a99"/><stop offset="0.522" stop-color="#99058c"/><stop offset="0.594" stop-color="#990068"/><stop offset="0.710" stop-color="#990045"/><stop offset="0.913" stop-color="#990024"/><stop offset="1.000" stop-color="#99001c"/></linearGradient><linearGradient id="co84" gradientUnits="userSpaceOnUse" x1="1205.1" x2="1608.6" y1="0" y2="0"><stop offset="0.000" stop-color="#003599"/><stop offset="0.224" stop-color="#002499"/><stop offset="0.358" stop-color="#3c1799"/><stop offset="0.493" stop-color="#890799"/><stop offset="0.522" stop-color="#990396"/><stop offset="0.612" stop-color="#990069"/><stop offset="0.746" stop-color="#990043"/><stop offset="0.955" stop-color="#990024"/><stop offset="1.000" stop-color="#990020"/></linearGradient><linearGradient id="co85" gradientUnits="userSpaceOnUse" x1="1207.3" x2="1594.4" y1="0" y2="0"><stop offset="0.000" stop-color="#003199"/><stop offset="0.234" stop-color="#032099"/><stop offset="0.422" stop-color="#580e99"/><stop offset="0.531" stop-color="#970099"/><stop offset="0.641" stop-color="#990067"/><stop offset="0.766" stop-color="#990046"/><stop offset="0.969" stop-color="#990027"/><stop offset="1.000" stop-color="#990024"/></linearGradient><linearGradient id="co86" gradientUnits="userSpaceOnUse" x1="1209.5" x2="1580.2" y1="0" y2="0"><stop offset="0.000" stop-color="#002d99"/><stop offset="0.230" stop-color="#011d99"/><stop offset="0.410" stop-color="#4d0c99"/><stop offset="0.557" stop-color="#990096"/><stop offset="0.656" stop-color="#99006b"/><stop offset="0.787" stop-color="#990048"/><stop offset="1.000" stop-color="#990029"/></linearGradient><linearGradient id="co87" gradientUnits="userSpaceOnUse" x1="1211.7" x2="1566.0" y1="0" y2="0"><stop offset="0.000" stop-color="#002999"/><stop offset="0.220" stop-color="#001a99"/><stop offset="0.390" stop-color="#3f0c99"/><stop offset="0.542" stop-color="#880099"/><stop offset="0.576" stop-color="#990097"/><stop offset="0.678" stop-color="#99006c"/><stop offset="0.847" stop-color="#990044"/><stop offset="1.000" stop-color="#99002e"/></linearGradient><linearGradient id="co88" gradientUnits="userSpaceOnUse" x1="1213.9" x2="1551.7" y1="0" y2="0"><stop offset="0.000" stop-color="#002699"/><stop offset="0.232" stop-color="#031699"/><stop offset="0.429" stop-color="#4b0699"/><stop offset="0.518" stop-color="#720099"/><stop offset="0.589" stop-color="#960099"/><stop offset="0.732" stop-color="#990065"/><stop offset="0.893" stop-color="#990043"/><stop offset="1.000" stop-color="#990034"/></linearGradient><linearGradient id="co89" gradientUnits="userSpaceOnUse" x1="1216.1" x2="1537.5" y1="0" y2="0"><stop offset="0.000" stop-color="#002299"/><stop offset="0.226" stop-color="#011499"/><stop offset="0.453" stop-color="#4f0199"/><stop offset="0.623" stop-color="#990098"/><stop offset="0.736" stop-color="#99006d"/><stop offset="0.906" stop-color="#990048"/><stop offset="1.000" stop-color="#99003a"/></linearGradient><linearGradient id="co90" gradientUnits="userSpaceOnUse" x1="1218.4" x2="1523.3" y1="0" y2="0"><stop offset="0.000" stop-color="#001f99"/><stop offset="0.220" stop-color="#001199"/><stop offset="0.440" stop-color="#450099"/><stop offset="0.640" stop-color="#960099"/><stop offset="0.780" stop-color="#99006b"/><stop offset="0.940" stop-color="#99004a"/><stop offset="1.000" stop-color="#990041"/></linearGradient><linearGradient id="co91" gradientUnits="userSpaceOnUse" x1="1221.1" x2="1509.1" y1="0" y2="0"><stop offset="0.000" stop-color="#001b99"/><stop offset="0.213" stop-color="#000f99"/><stop offset="0.404" stop-color="#350199"/><stop offset="0.638" stop-color="#890099"/><stop offset="0.681" stop-color="#990097"/><stop offset="0.809" stop-color="#99006e"/><stop offset="1.000" stop-color="#990049"/></linearGradient><linearGradient id="co92" gradientUnits="userSpaceOnUse" x1="1223.7" x2="1494.8" y1="0" y2="0"><stop offset="0.000" stop-color="#001899"/><stop offset="0.222" stop-color="#010b99"/><stop offset="0.467" stop-color="#440099"/><stop offset="0.711" stop-color="#990099"/><stop offset="0.844" stop-color="#990070"/><stop offset="1.000" stop-color="#990051"/></linearGradient><linearGradient id="co93" gradientUnits="userSpaceOnUse" x1="1226.3" x2="1480.6" y1="0" y2="0"><stop offset="0.000" stop-color="#001499"/><stop offset="0.214" stop-color="#000999"/><stop offset="0.429" stop-color="#350099"/><stop offset="0.690" stop-color="#850099"/><stop offset="0.738" stop-color="#950099"/><stop offset="0.833" stop-color="#99007f"/><stop offset="1.000" stop-color="#99005b"/></linearGradient><linearGradient id="co94" gradientUnits="userSpaceOnUse" x1="1229.0" x2="1466.4" y1="0" y2="0"><stop offset="0.000" stop-color="#001199"/><stop offset="0.205" stop-color="#000799"/><stop offset="0.410" stop-color="#2d0099"/><stop offset="0.692" stop-color="#790099"/><stop offset="0.795" stop-color="#990098"/><stop offset="0.949" stop-color="#990070"/><stop offset="1.000" stop-color="#990066"/></linearGradient><linearGradient id="co95" gradientUnits="userSpaceOnUse" x1="1231.6" x2="1452.2" y1="0" y2="0"><stop offset="0.000" stop-color="#000d99"/><stop offset="0.222" stop-color="#030399"/><stop offset="0.583" stop-color="#520099"/><stop offset="0.833" stop-color="#960099"/><stop offset="1.000" stop-color="#990072"/></linearGradient><linearGradient id="co96" gradientUnits="userSpaceOnUse" x1="1234.6" x2="1437.9" y1="0" y2="0"><stop offset="0.000" stop-color="#000a99"/><stop offset="0.212" stop-color="#020199"/><stop offset="0.636" stop-color="#570099"/><stop offset="0.909" stop-color="#990097"/><stop offset="1.000" stop-color="#990081"/></linearGradient><linearGradient id="co97" gradientUnits="userSpaceOnUse" x1="1237.9" x2="1423.7" y1="0" y2="0"><stop offset="0.000" stop-color="#000799"/><stop offset="0.200" stop-color="#020099"/><stop offset="0.633" stop-color="#4e0099"/><stop offset="0.967" stop-color="#980099"/><stop offset="1.000" stop-color="#990092"/></linearGradient><linearGradient id="co98" gradientUnits="userSpaceOnUse" x1="1241.2" x2="1409.5" y1="0" y2="0"><stop offset="0.000" stop-color="#000399"/><stop offset="0.179" stop-color="#000099"/><stop offset="0.643" stop-color="#480099"/><stop offset="1.000" stop-color="#8e0099"/></linearGradient><linearGradient id="co99" gradientUnits="userSpaceOnUse" x1="1244.5" x2="1395.2" y1="0" y2="0"><stop offset="0.000" stop-color="#000099"/><stop offset="0.160" stop-color="#000099"/><stop offset="0.720" stop-color="#4d0099"/><stop offset="1.000" stop-color="#7c0099"/></linearGradient><linearGradient id="co100" gradientUnits="userSpaceOnUse" x1="1248.7" x2="1381.0" y1="0" y2="0"><stop offset="0.000" stop-color="#000099"/><stop offset="0.182" stop-color="#040099"/><stop offset="0.818" stop-color="#510099"/><stop offset="1.000" stop-color="#6b0099"/></linearGradient><linearGradient id="co101" gradientUnits="userSpaceOnUse" x1="1252.9" x2="1366.8" y1="0" y2="0"><stop offset="0.000" stop-color="#000099"/><stop offset="0.111" stop-color="#000099"/><stop offset="0.889" stop-color="#4f0099"/><stop offset="1.000" stop-color="#5c0099"/></linearGradient><linearGradient id="co102" gradientUnits="userSpaceOnUse" x1="1258.1" x2="1352.6" y1="0" y2="0"><stop offset="0.000" stop-color="#000099"/><stop offset="0.133" stop-color="#050099"/><stop offset="1.000" stop-color="#4e0099"/></linearGradient><linearGradient id="co103" gradientUnits="userSpaceOnUse" x1="1264.3" x2="1338.3" y1="0" y2="0"><stop offset="0.000" stop-color="#020099"/><stop offset="1.000" stop-color="#410099"/></linearGradient><linearGradient id="co104" gradientUnits="userSpaceOnUse" x1="1271.3" x2="1324.1" y1="0" y2="0"><stop offset="0.000" stop-color="#080099"/><stop offset="1.000" stop-color="#340099"/></linearGradient>
<linearGradient id="ci0" gradientUnits="userSpaceOnUse" x1="1387.6" x2="1411.7" y1="0" y2="0"><stop offset="0.000" stop-color="#00ff00"/><stop offset="0.500" stop-color="#01ff00"/><stop offset="1.000" stop-color="#11ff00"/></linearGradient><linearGradient id="ci1" gradientUnits="userSpaceOnUse" x1="1386.1" x2="1418.3" y1="0" y2="0"><stop offset="0.000" stop-color="#00ff03"/><stop offset="0.333" stop-color="#00ff00"/><stop offset="1.000" stop-color="#1dff00"/></linearGradient><linearGradient id="ci2" gradientUnits="userSpaceOnUse" x1="1384.6" x2="1425.0" y1="0" y2="0"><stop offset="0.000" stop-color="#00ff06"/><stop offset="0.250" stop-color="#00ff02"/><stop offset="1.000" stop-color="#2aff00"/></linearGradient><linearGradient id="ci3" gradientUnits="userSpaceOnUse" x1="1383.2" x2="1431.6" y1="0" y2="0"><stop offset="0.000" stop-color="#00ff09"/><stop offset="0.222" stop-color="#00ff05"/><stop offset="1.000" stop-color="#37ff00"/></linearGradient><linearGradient id="ci4" gradientUnits="userSpaceOnUse" x1="1381.7" x2="1438.3" y1="0" y2="0"><stop offset="0.000" stop-color="#00ff0c"/><stop offset="0.182" stop-color="#00ff08"/><stop offset="0.727" stop-color="#2cff00"/><stop offset="1.000" stop-color="#45ff00"/></linearGradient><linearGradient id="ci5" gradientUnits="userSpaceOnUse" x1="1380.2" x2="1445.0" y1="0" y2="0"><stop offset="0.000" stop-color="#00ff0f"/><stop offset="0.167" stop-color="#00ff0b"/><stop offset="0.750" stop-color="#38ff00"/><stop offset="1.000" stop-color="#53ff00"/></linearGradient><linearGradient id="ci6" gradientUnits="userSpaceOnUse" x1="1378.8" x2="1451.6" y1="0" y2="0"><stop offset="0.000" stop-color="#00ff13"/><stop offset="0.143" stop-color="#00ff0f"/><stop offset="0.714" stop-color="#3fff00"/><stop offset="1.000" stop-color="#63ff00"/></linearGradient><linearGradient id="ci7" gradientUnits="userSpaceOnUse" x1="1377.3" x2="1458.3" y1="0" y2="0"><stop offset="0.000" stop-color="#00ff16"/><stop offset="0.125" stop-color="#00ff12"/><stop offset="0.750" stop-color="#4fff00"/><stop offset="1.000" stop-color="#73ff00"/></linearGradient><linearGradient id="ci8" gradientUnits="userSpaceOnUse" x1="1375.8" x2="1464.9" y1="0" y2="0"><stop offset="0.000" stop-color="#00ff19"/><stop offset="0.118" stop-color="#00ff16"/><stop offset="0.647" stop-color="#4aff03"/><stop offset="1.000" stop-color="#84ff00"/></linearGradient><linearGradient id="ci9" gradientUnits="userSpaceOnUse" x1="1374.4" x2="1471.6" y1="0" y2="0"><stop offset="0.000" stop-color="#00ff1d"/><stop offset="0.105" stop-color="#00ff19"/><stop offset="0.579" stop-color="#49ff07"/><stop offset="0.842" stop-color="#78ff00"/><stop offset="1.000" stop-color="#97ff00"/></linearGradient><linearGradient id="ci10" gradientUnits="userSpaceOnUse" x1="1372.9" x2="1478.2" y1="0" y2="0"><stop offset="0.000" stop-color="#00ff21"/><stop offset="0.095" stop-color="#00ff1d"/><stop offset="0.476" stop-color="#3fff0d"/><stop offset="0.810" stop-color="#81ff00"/><stop offset="1.000" stop-color="#aaff00"/></linearGradient><linearGradient id="ci11" gradientUnits="userSpaceOnUse" x1="1371.4" x2="1484.9" y1="0" y2="0"><stop offset="0.000" stop-color="#00ff24"/><stop offset="0.091" stop-color="#00ff21"/><stop offset="0.500" stop-color="#4cff0f"/><stop offset="0.864" stop-color="#9dff00"/><stop offset="1.000" stop-color="#bfff00"/></linearGradient><linearGradient id="ci12" gradientUnits="userSpaceOnUse" x1="1369.9" x2="1491.5" y1="0" y2="0"><stop offset="0.000" stop-color="#00ff28"/><stop offset="0.083" stop-color="#00ff25"/><stop offset="0.417" stop-color="#42ff15"/><stop offset="0.833" stop-color="#a7ff00"/><stop offset="1.000" stop-color="#d5ff00"/></linearGradient><linearGradient id="ci13" gradientUnits="userSpaceOnUse" x1="1368.5" x2="1498.2" y1="0" y2="0"><stop offset="0.000" stop-color="#00ff2c"/><stop offset="0.080" stop-color="#00ff29"/><stop offset="0.400" stop-color="#45ff19"/><stop offset="0.800" stop-color="#afff01"/><stop offset="1.000" stop-color="#edff00"/></linearGradient><linearGradient id="ci14" gradientUnits="userSpaceOnUse" x1="1367.0" x2="1504.9" y1="0" y2="0"><stop offset="0.000" stop-color="#00ff30"/><stop offset="0.074" stop-color="#00ff2d"/><stop offset="0.333" stop-color="#3bff1f"/><stop offset="0.704" stop-color="#a3ff08"/><stop offset="0.852" stop-color="#d2ff00"/><stop offset="0.963" stop-color="#f9ff00"/><stop offset="1.000" stop-color="#fff800"/></linearGradient><linearGradient id="ci15" gradientUnits="userSpaceOnUse" x1="1365.5" x2="1511.5" y1="0" y2="0"><stop offset="0.000" stop-color="#00ff35"/><stop offset="0.069" stop-color="#00ff31"/><stop offset="0.310" stop-color="#3bff24"/><stop offset="0.655" stop-color="#a2ff0d"/><stop offset="0.862" stop-color="#ebff00"/><stop offset="0.897" stop-color="#f8ff00"/><stop offset="0.931" stop-color="#fff800"/><stop offset="1.000" stop-color="#ffe100"/></linearGradient><linearGradient id="ci16" gradientUnits="userSpaceOnUse" x1="1364.1" x2="1518.2" y1="0" y2="0"><stop offset="0.000" stop-color="#00ff39"/><stop offset="0.067" stop-color="#00ff35"/><stop offset="0.367" stop-color="#51ff24"/><stop offset="0.700" stop-color="#c2ff0c"/><stop offset="0.833" stop-color="#f6ff01"/><stop offset="0.867" stop-color="#fffa00"/><stop offset="1.000" stop-color="#ffcc00"/></linearGradient><linearGradient id="ci17" gradientUnits="userSpaceOnUse" x1="1362.6" x2="1524.8" y1="0" y2="0"><stop offset="0.000" stop-color="#00ff3d"/><stop offset="0.062" stop-color="#00ff3a"/><stop offset="0.312" stop-color="#47ff2a"/><stop offset="0.625" stop-color="#b6ff14"/><stop offset="0.781" stop-color="#f6ff06"/><stop offset="0.813" stop-color="#fffa03"/><stop offset="0.969" stop-color="#ffc200"/><stop offset="1.000" stop-color="#ffba00"/></linearGradient><linearGradient id="ci18" gradientUnits="userSpaceOnUse" x1="1361.1" x2="1531.5" y1="0" y2="0"><stop offset="0.000" stop-color="#00ff42"/><stop offset="0.059" stop-color="#00ff3e"/><stop offset="0.294" stop-color="#47ff2f"/><stop offset="0.588" stop-color="#b6ff19"/><stop offset="0.735" stop-color="#f7ff0c"/><stop offset="0.765" stop-color="#fff909"/><stop offset="0.882" stop-color="#ffcb00"/><stop offset="1.000" stop-color="#ffa900"/></linearGradient><linearGradient id="ci19" gradientUnits="userSpaceOnUse" x1="1359.7" x2="1538.1" y1="0" y2="0"><stop offset="0.000" stop-color="#00ff47"/><stop offset="0.057" stop-color="#00ff43"/><stop offset="0.200" stop-color="#2cff3a"/><stop offset="0.486" stop-color="#98ff25"/><stop offset="0.714" stop-color="#fffc10"/><stop offset="0.857" stop-color="#ffc200"/><stop offset="1.000" stop-color="#ff9a00"/></linearGradient><linearGradient id="ci20" gradientUnits="userSpaceOnUse" x1="1358.2" x2="1544.8" y1="0" y2="0"><stop offset="0.000" stop-color="#00ff4b"/><stop offset="0.054" stop-color="#00ff48"/><stop offset="0.216" stop-color="#36ff3d"/><stop offset="0.459" stop-color="#99ff2a"/><stop offset="0.649" stop-color="#f4ff19"/><stop offset="0.676" stop-color="#fffb15"/><stop offset="0.811" stop-color="#ffc105"/><stop offset="0.919" stop-color="#ffa000"/><stop offset="1.000" stop-color="#ff8c00"/></linearGradient><linearGradient id="ci21" gradientUnits="userSpaceOnUse" x1="1356.7" x2="1551.4" y1="0" y2="0"><stop offset="0.000" stop-color="#00ff50"/><stop offset="0.053" stop-color="#00ff4d"/><stop offset="0.237" stop-color="#42ff40"/><stop offset="0.474" stop-color="#acff2c"/><stop offset="0.632" stop-color="#ffff1d"/><stop offset="0.763" stop-color="#ffc20b"/><stop offset="0.895" stop-color="#ff9900"/><stop offset="1.000" stop-color="#ff8000"/></linearGradient><linearGradient id="ci22" gradientUnits="userSpaceOnUse" x1="1355.3" x2="1558.1" y1="0" y2="0"><stop offset="0.000" stop-color="#00ff55"/><stop offset="0.050" stop-color="#00ff52"/><stop offset="0.200" stop-color="#38ff48"/><stop offset="0.450" stop-color="#acff32"/><stop offset="0.600" stop-color="#fffe23"/><stop offset="0.725" stop-color="#ffc110"/><stop offset="0.875" stop-color="#ff9100"/><stop offset="1.000" stop-color="#ff7500"/></linearGradient><linearGradient id="ci23" gradientUnits="userSpaceOnUse" x1="1353.8" x2="1564.7" y1="0" y2="0"><stop offset="0.000" stop-color="#00ff5b"/><stop offset="0.048" stop-color="#00ff58"/><stop offset="0.119" stop-color="#1aff53"/><stop offset="0.357" stop-color="#87ff3f"/><stop offset="0.571" stop-color="#fffc29"/><stop offset="0.690" stop-color="#ffc015"/><stop offset="0.833" stop-color="#ff9004"/><stop offset="1.000" stop-color="#ff6a00"/></linearGradient><linearGradient id="ci24" gradientUnits="userSpaceOnUse" x1="1352.3" x2="1571.4" y1="0" y2="0"><stop offset="0.000" stop-color="#00ff60"/><stop offset="0.047" stop-color="#00ff5d"/><stop offset="0.209" stop-color="#45ff51"/><stop offset="0.419" stop-color="#b4ff3e"/><stop offset="0.535" stop-color="#fdff32"/><stop offset="0.651" stop-color="#ffc21b"/><stop offset="0.791" stop-color="#ff9009"/><stop offset="0.907" stop-color="#ff7300"/><stop offset="1.000" stop-color="#ff6100"/></linearGradient><linearGradient id="ci25" gradientUnits="userSpaceOnUse" x1="1350.9" x2="1578.1" y1="0" y2="0"><stop offset="0.000" stop-color="#00ff66"/><stop offset="0.044" stop-color="#00ff63"/><stop offset="0.178" stop-color="#3bff59"/><stop offset="0.333" stop-color="#8eff4b"/><stop offset="0.511" stop-color="#ffff39"/><stop offset="0.600" stop-color="#ffca24"/><stop offset="0.733" stop-color="#ff9510"/><stop offset="0.911" stop-color="#ff6800"/><stop offset="1.000" stop-color="#ff5800"/></linearGradient><linearGradient id="ci26" gradientUnits="userSpaceOnUse" x1="1349.4" x2="1584.7" y1="0" y2="0"><stop offset="0.000" stop-color="#00ff6c"/><stop offset="0.043" stop-color="#00ff69"/><stop offset="0.191" stop-color="#46ff5d"/><stop offset="0.362" stop-color="#a9ff4e"/><stop offset="0.489" stop-color="#fffd3f"/><stop offset="0.574" stop-color="#ffc82a"/><stop offset="0.702" stop-color="#ff9414"/><stop offset="0.851" stop-color="#ff6b04"/><stop offset="1.000" stop-color="#ff5000"/></linearGradient><linearGradient id="ci27" gradientUnits="userSpaceOnUse" x1="1347.9" x2="1591.4" y1="0" y2="0"><stop offset="0.000" stop-color="#00ff72"/><stop offset="0.042" stop-color="#00ff6f"/><stop offset="0.146" stop-color="#32ff67"/><stop offset="0.313" stop-color="#94ff58"/><stop offset="0.458" stop-color="#fcff48"/><stop offset="0.562" stop-color="#ffc02d"/><stop offset="0.687" stop-color="#ff8d17"/><stop offset="0.854" stop-color="#ff6204"/><stop offset="1.000" stop-color="#ff4800"/></linearGradient><linearGradient id="ci28" gradientUnits="userSpaceOnUse" x1="1346.5" x2="1598.0" y1="0" y2="0"><stop offset="0.000" stop-color="#00ff78"/><stop offset="0.040" stop-color="#00ff75"/><stop offset="0.120" stop-color="#27ff6f"/><stop offset="0.280" stop-color="#88ff61"/><stop offset="0.440" stop-color="#feff50"/><stop offset="0.520" stop-color="#ffc937"/><stop offset="0.640" stop-color="#ff921e"/><stop offset="0.800" stop-color="#ff6509"/><stop offset="0.940" stop-color="#ff4a00"/><stop offset="1.000" stop-color="#ff4100"/></linearGradient><linearGradient id="ci29" gradientUnits="userSpaceOnUse" x1="1345.0" x2="1604.7" y1="0" y2="0"><stop offset="0.000" stop-color="#00ff7e"/><stop offset="0.039" stop-color="#00ff7c"/><stop offset="0.098" stop-color="#1dff77"/><stop offset="0.255" stop-color="#7fff6a"/><stop offset="0.392" stop-color="#e7ff5b"/><stop offset="0.412" stop-color="#f8ff59"/><stop offset="0.431" stop-color="#fff654"/><stop offset="0.510" stop-color="#ffc13a"/><stop offset="0.608" stop-color="#ff9324"/><stop offset="0.765" stop-color="#ff640d"/><stop offset="0.941" stop-color="#ff4300"/><stop offset="1.000" stop-color="#ff3a00"/></linearGradient><linearGradient id="ci30" gradientUnits="userSpaceOnUse" x1="1343.5" x2="1611.3" y1="0" y2="0"><stop offset="0.000" stop-color="#00ff85"/><stop offset="0.038" stop-color="#00ff82"/><stop offset="0.094" stop-color="#1dff7e"/><stop offset="0.245" stop-color="#81ff71"/><stop offset="0.358" stop-color="#daff66"/><stop offset="0.396" stop-color="#fbff61"/><stop offset="0.472" stop-color="#ffca46"/><stop offset="0.566" stop-color="#ff992d"/><stop offset="0.698" stop-color="#ff6c16"/><stop offset="0.906" stop-color="#ff4100"/><stop offset="1.000" stop-color="#ff3400"/></linearGradient><linearGradient id="ci31" gradientUnits="userSpaceOnUse" x1="1342.1" x2="1618.0" y1="0" y2="0"><stop offset="0.000" stop-color="#00ff8c"/><stop offset="0.036" stop-color="#00ff89"/><stop offset="0.091" stop-color="#1eff85"/><stop offset="0.236" stop-color="#82ff79"/><stop offset="0.364" stop-color="#edff6c"/><stop offset="0.382" stop-color="#feff6a"/><stop offset="0.455" stop-color="#ffc74c"/><stop offset="0.545" stop-color="#ff9732"/><stop offset="0.673" stop-color="#ff6a1a"/><stop offset="0.855" stop-color="#ff4305"/><stop offset="0.982" stop-color="#ff3100"/><stop offset="1.000" stop-color="#ff2e00"/></linearGradient><linearGradient id="ci32" gradientUnits="userSpaceOnUse" x1="1340.6" x2="1624.6" y1="0" y2="0"><stop offset="0.000" stop-color="#00ff93"/><stop offset="0.036" stop-color="#00ff91"/><stop offset="0.107" stop-color="#2bff8b"/><stop offset="0.250" stop-color="#95ff7f"/><stop offset="0.357" stop-color="#f6ff74"/><stop offset="0.375" stop-color="#fff66e"/><stop offset="0.446" stop-color="#ffbf4f"/><stop offset="0.536" stop-color="#ff9034"/><stop offset="0.661" stop-color="#ff651c"/><stop offset="0.839" stop-color="#ff3f06"/><stop offset="0.964" stop-color="#ff2d00"/><stop offset="1.000" stop-color="#ff2900"/></linearGradient><linearGradient id="ci33" gradientUnits="userSpaceOnUse" x1="1339.1" x2="1631.3" y1="0" y2="0"><stop offset="0.000" stop-color="#00ff9b"/><stop offset="0.034" stop-color="#00ff98"/><stop offset="0.103" stop-color="#2bff93"/><stop offset="0.241" stop-color="#97ff88"/><stop offset="0.345" stop-color="#faff7d"/><stop offset="0.379" stop-color="#ffe36c"/><stop offset="0.448" stop-color="#ffb14e"/><stop offset="0.552" stop-color="#ff7f31"/><stop offset="0.690" stop-color="#ff5618"/><stop offset="0.897" stop-color="#ff3002"/><stop offset="1.000" stop-color="#ff2400"/></linearGradient><linearGradient id="ci34" gradientUnits="userSpaceOnUse" x1="1337.7" x2="1637.9" y1="0" y2="0"><stop offset="0.000" stop-color="#00ffa2"/><stop offset="0.033" stop-color="#00ffa0"/><stop offset="0.100" stop-color="#2bff9b"/><stop offset="0.233" stop-color="#99ff91"/><stop offset="0.333" stop-color="#fdff87"/><stop offset="0.400" stop-color="#ffc462"/><stop offset="0.483" stop-color="#ff9343"/><stop offset="0.600" stop-color="#ff6627"/><stop offset="0.767" stop-color="#ff3f0e"/><stop offset="0.950" stop-color="#ff2400"/><stop offset="1.000" stop-color="#ff1f00"/></linearGradient><linearGradient id="ci35" gradientUnits="userSpaceOnUse" x1="1336.2" x2="1644.6" y1="0" y2="0"><stop offset="0.000" stop-color="#00ffaa"/><stop offset="0.033" stop-color="#00ffa8"/><stop offset="0.082" stop-color="#20ffa5"/><stop offset="0.213" stop-color="#8fff9b"/><stop offset="0.311" stop-color="#f5ff92"/><stop offset="0.328" stop-color="#fff78b"/><stop offset="0.393" stop-color="#ffbc65"/><stop offset="0.475" stop-color="#ff8c45"/><stop offset="0.590" stop-color="#ff6129"/><stop offset="0.754" stop-color="#ff3b10"/><stop offset="0.934" stop-color="#ff2100"/><stop offset="1.000" stop-color="#ff1a00"/></linearGradient><linearGradient id="ci36" gradientUnits="userSpaceOnUse" x1="1334.7" x2="1651.3" y1="0" y2="0"><stop offset="0.000" stop-color="#00ffb3"/><stop offset="0.032" stop-color="#00ffb1"/><stop offset="0.079" stop-color="#21ffae"/><stop offset="0.190" stop-color="#82ffa6"/><stop offset="0.302" stop-color="#f9ff9c"/><stop offset="0.333" stop-color="#ffe288"/><stop offset="0.381" stop-color="#ffb96b"/><stop offset="0.460" stop-color="#ff894a"/><stop offset="0.587" stop-color="#ff5a2a"/><stop offset="0.746" stop-color="#ff3611"/><stop offset="0.952" stop-color="#ff1b00"/><stop offset="1.000" stop-color="#ff1600"/></linearGradient><linearGradient id="ci37" gradientUnits="userSpaceOnUse" x1="1333.2" x2="1657.9" y1="0" y2="0"><stop offset="0.000" stop-color="#00ffbb"/><stop offset="0.031" stop-color="#00ffba"/><stop offset="0.094" stop-color="#2fffb6"/><stop offset="0.203" stop-color="#97ffae"/><stop offset="0.281" stop-color="#f0ffa8"/><stop offset="0.297" stop-color="#fffba4"/><stop offset="0.359" stop-color="#ffbd77"/><stop offset="0.438" stop-color="#ff8b53"/><stop offset="0.547" stop-color="#ff5e32"/><stop offset="0.719" stop-color="#ff3515"/><stop offset="0.938" stop-color="#ff1800"/><stop offset="1.000" stop-color="#ff1200"/></linearGradient><linearGradient id="ci38" gradientUnits="userSpaceOnUse" x1="1331.8" x2="1664.6" y1="0" y2="0"><stop offset="0.000" stop-color="#00ffc4"/><stop offset="0.030" stop-color="#00ffc3"/><stop offset="0.091" stop-color="#30ffc0"/><stop offset="0.197" stop-color="#99ffb9"/><stop offset="0.273" stop-color="#f4ffb3"/><stop offset="0.288" stop-color="#fff7ac"/><stop offset="0.333" stop-color="#ffc688"/><stop offset="0.409" stop-color="#ff905e"/><stop offset="0.515" stop-color="#ff613a"/><stop offset="0.682" stop-color="#ff361a"/><stop offset="0.924" stop-color="#ff1500"/><stop offset="1.000" stop-color="#ff0e00"/></linearGradient><linearGradient id="ci39" gradientUnits="userSpaceOnUse" x1="1330.3" x2="1671.2" y1="0" y2="0"><stop offset="0.000" stop-color="#00ffce"/><stop offset="0.029" stop-color="#00ffcc"/><stop offset="0.074" stop-color="#23ffca"/><stop offset="0.176" stop-color="#8bffc5"/><stop offset="0.265" stop-color="#f8ffbf"/><stop offset="0.279" stop-color="#fff2b5"/><stop offset="0.324" stop-color="#ffc38f"/><stop offset="0.382" stop-color="#ff966b"/><stop offset="0.471" stop-color="#ff6a48"/><stop offset="0.603" stop-color="#ff4127"/><stop offset="0.809" stop-color="#ff1d0a"/><stop offset="0.971" stop-color="#ff0c00"/><stop offset="1.000" stop-color="#ff0a00"/></linearGradient><linearGradient id="ci40" gradientUnits="userSpaceOnUse" x1="1328.8" x2="1677.9" y1="0" y2="0"><stop offset="0.000" stop-color="#00ffd7"/><stop offset="0.029" stop-color="#00ffd6"/><stop offset="0.072" stop-color="#24ffd5"/><stop offset="0.159" stop-color="#80ffd1"/><stop offset="0.232" stop-color="#daffcd"/><stop offset="0.261" stop-color="#fffbc9"/><stop offset="0.304" stop-color="#ffc89e"/><stop offset="0.362" stop-color="#ff9976"/><stop offset="0.449" stop-color="#ff6a4f"/><stop offset="0.580" stop-color="#ff402c"/><stop offset="0.783" stop-color="#ff1c0d"/><stop offset="0.957" stop-color="#ff0a00"/><stop offset="1.000" stop-color="#ff0600"/></linearGradient><linearGradient id="ci41" gradientUnits="userSpaceOnUse" x1="1327.4" x2="1684.2" y1="0" y2="0"><stop offset="0.000" stop-color="#00ffe2"/><stop offset="0.028" stop-color="#00ffe1"/><stop offset="0.056" stop-color="#17ffe0"/><stop offset="0.141" stop-color="#71ffdd"/><stop offset="0.225" stop-color="#deffda"/><stop offset="0.239" stop-color="#f3ffda"/><stop offset="0.254" stop-color="#fff7d2"/><stop offset="0.296" stop-color="#ffc4a5"/><stop offset="0.352" stop-color="#ff957c"/><stop offset="0.437" stop-color="#ff6854"/><stop offset="0.549" stop-color="#ff4233"/><stop offset="0.718" stop-color="#ff2115"/><stop offset="0.958" stop-color="#ff0600"/><stop offset="1.000" stop-color="#ff0300"/></linearGradient><linearGradient id="ci42" gradientUnits="userSpaceOnUse" x1="1325.9" x2="1684.2" y1="0" y2="0"><stop offset="0.000" stop-color="#00ffec"/><stop offset="0.028" stop-color="#00ffec"/><stop offset="0.056" stop-color="#17ffeb"/><stop offset="0.155" stop-color="#86ffe9"/><stop offset="0.225" stop-color="#e6ffe8"/><stop offset="0.239" stop-color="#fbffe7"/><stop offset="0.296" stop-color="#ffbdaa"/><stop offset="0.366" stop-color="#ff8678"/><stop offset="0.465" stop-color="#ff584d"/><stop offset="0.592" stop-color="#ff342c"/><stop offset="0.803" stop-color="#ff130d"/><stop offset="1.000" stop-color="#ff0100"/></linearGradient><linearGradient id="ci43" gradientUnits="userSpaceOnUse" x1="1324.4" x2="1684.2" y1="0" y2="0"><stop offset="0.000" stop-color="#00fff7"/><stop offset="0.028" stop-color="#00fff7"/><stop offset="0.070" stop-color="#27fff7"/><stop offset="0.155" stop-color="#8afff6"/><stop offset="0.225" stop-color="#eefff6"/><stop offset="0.239" stop-color="#fffaf1"/><stop offset="0.282" stop-color="#ffc4bc"/><stop offset="0.338" stop-color="#ff938d"/><stop offset="0.423" stop-color="#ff6460"/><stop offset="0.535" stop-color="#ff3e3b"/><stop offset="0.718" stop-color="#ff1b19"/><stop offset="0.972" stop-color="#ff0100"/><stop offset="1.000" stop-color="#ff0000"/></linearGradient><linearGradient id="ci44" gradientUnits="userSpaceOnUse" x1="1323.0" x2="1684.2" y1="0" y2="0"><stop offset="0.000" stop-color="#00fbff"/><stop offset="0.028" stop-color="#00fbff"/><stop offset="0.042" stop-color="#09fbff"/><stop offset="0.125" stop-color="#66faff"/><stop offset="0.208" stop-color="#d7f9ff"/><stop offset="0.236" stop-color="#fff6fc"/><stop offset="0.278" stop-color="#ffc1c6"/><stop offset="0.333" stop-color="#ff9095"/><stop offset="0.403" stop-color="#ff686c"/><stop offset="0.514" stop-color="#ff4043"/><stop offset="0.681" stop-color="#ff1e20"/><stop offset="0.958" stop-color="#ff0002"/><stop offset="1.000" stop-color="#ff0000"/></linearGradient><linearGradient id="ci45" gradientUnits="userSpaceOnUse" x1="1321.5" x2="1684.2" y1="0" y2="0"><stop offset="0.000" stop-color="#00f0ff"/><stop offset="0.028" stop-color="#00efff"/><stop offset="0.056" stop-color="#17efff"/><stop offset="0.153" stop-color="#87ecff"/><stop offset="0.222" stop-color="#e7ebff"/><stop offset="0.236" stop-color="#fceaff"/><stop offset="0.292" stop-color="#ffabbc"/><stop offset="0.347" stop-color="#ff818f"/><stop offset="0.417" stop-color="#ff5d69"/><stop offset="0.528" stop-color="#ff3942"/><stop offset="0.694" stop-color="#ff1920"/><stop offset="0.944" stop-color="#ff0005"/><stop offset="1.000" stop-color="#ff0000"/></linearGradient><linearGradient id="ci46" gradientUnits="userSpaceOnUse" x1="1320.0" x2="1683.7" y1="0" y2="0"><stop offset="0.000" stop-color="#00e5ff"/><stop offset="0.028" stop-color="#00e4ff"/><stop offset="0.056" stop-color="#17e3ff"/><stop offset="0.139" stop-color="#73e0ff"/><stop offset="0.222" stop-color="#e1ddff"/><stop offset="0.236" stop-color="#f6dcff"/><stop offset="0.250" stop-color="#ffd1f3"/><stop offset="0.292" stop-color="#ffa5c1"/><stop offset="0.361" stop-color="#ff738a"/><stop offset="0.444" stop-color="#ff4e60"/><stop offset="0.583" stop-color="#ff2937"/><stop offset="0.778" stop-color="#ff0c17"/><stop offset="0.958" stop-color="#ff0005"/><stop offset="1.000" stop-color="#ff0002"/></linearGradient><linearGradient id="ci47" gradientUnits="userSpaceOnUse" x1="1318.6" x2="1674.1" y1="0" y2="0"><stop offset="0.000" stop-color="#00daff"/><stop offset="0.028" stop-color="#00d9ff"/><stop offset="0.056" stop-color="#16d8ff"/><stop offset="0.141" stop-color="#6ed5ff"/><stop offset="0.225" stop-color="#d8d0ff"/><stop offset="0.254" stop-color="#ffcdfd"/><stop offset="0.296" stop-color="#ffa1ca"/><stop offset="0.352" stop-color="#ff789a"/><stop offset="0.423" stop-color="#ff5672"/><stop offset="0.535" stop-color="#ff3349"/><stop offset="0.718" stop-color="#ff1323"/><stop offset="0.930" stop-color="#ff000b"/><stop offset="1.000" stop-color="#ff0005"/></linearGradient><linearGradient id="ci48" gradientUnits="userSpaceOnUse" x1="1317.1" x2="1664.6" y1="0" y2="0"><stop offset="0.000" stop-color="#00d1ff"/><stop offset="0.029" stop-color="#00cfff"/><stop offset="0.072" stop-color="#23cdff"/><stop offset="0.174" stop-color="#8dc8ff"/><stop offset="0.261" stop-color="#fcc2ff"/><stop offset="0.319" stop-color="#ff8ec0"/><stop offset="0.391" stop-color="#ff648b"/><stop offset="0.493" stop-color="#ff3e5d"/><stop offset="0.638" stop-color="#ff1f37"/><stop offset="0.841" stop-color="#ff0618"/><stop offset="0.986" stop-color="#ff000a"/><stop offset="1.000" stop-color="#ff0009"/></linearGradient><linearGradient id="ci49" gradientUnits="userSpaceOnUse" x1="1315.6" x2="1655.0" y1="0" y2="0"><stop offset="0.000" stop-color="#00c7ff"/><stop offset="0.030" stop-color="#00c5ff"/><stop offset="0.075" stop-color="#23c3ff"/><stop offset="0.179" stop-color="#8bbdff"/><stop offset="0.254" stop-color="#e4b7ff"/><stop offset="0.269" stop-color="#f7b6ff"/><stop offset="0.284" stop-color="#ffacf3"/><stop offset="0.343" stop-color="#ff7eb7"/><stop offset="0.418" stop-color="#ff5886"/><stop offset="0.522" stop-color="#ff365b"/><stop offset="0.657" stop-color="#ff1c38"/><stop offset="0.896" stop-color="#ff0116"/><stop offset="1.000" stop-color="#ff000c"/></linearGradient><linearGradient id="ci50" gradientUnits="userSpaceOnUse" x1="1314.2" x2="1645.4" y1="0" y2="0"><stop offset="0.000" stop-color="#00beff"/><stop offset="0.030" stop-color="#00bcff"/><stop offset="0.061" stop-color="#15baff"/><stop offset="0.167" stop-color="#76b3ff"/><stop offset="0.258" stop-color="#dbacff"/><stop offset="0.288" stop-color="#ffa8fd"/><stop offset="0.348" stop-color="#ff7abf"/><stop offset="0.409" stop-color="#ff5b95"/><stop offset="0.500" stop-color="#ff3c6a"/><stop offset="0.636" stop-color="#ff1f43"/><stop offset="0.833" stop-color="#ff0621"/><stop offset="0.985" stop-color="#ff0011"/><stop offset="1.000" stop-color="#ff0010"/></linearGradient><linearGradient id="ci51" gradientUnits="userSpaceOnUse" x1="1312.7" x2="1635.8" y1="0" y2="0"><stop offset="0.000" stop-color="#00b5ff"/><stop offset="0.031" stop-color="#00b3ff"/><stop offset="0.078" stop-color="#21b0ff"/><stop offset="0.187" stop-color="#84a8ff"/><stop offset="0.281" stop-color="#eaa0ff"/><stop offset="0.297" stop-color="#fc9eff"/><stop offset="0.359" stop-color="#ff74c3"/><stop offset="0.422" stop-color="#ff5698"/><stop offset="0.516" stop-color="#ff376d"/><stop offset="0.672" stop-color="#ff1941"/><stop offset="0.906" stop-color="#ff001d"/><stop offset="1.000" stop-color="#ff0014"/></linearGradient><linearGradient id="ci52" gradientUnits="userSpaceOnUse" x1="1311.2" x2="1626.2" y1="0" y2="0"><stop offset="0.000" stop-color="#00adff"/><stop offset="0.032" stop-color="#00abff"/><stop offset="0.065" stop-color="#15a8ff"/><stop offset="0.177" stop-color="#73a0ff"/><stop offset="0.274" stop-color="#d497ff"/><stop offset="0.306" stop-color="#f894ff"/><stop offset="0.323" stop-color="#ff8bf3"/><stop offset="0.387" stop-color="#ff65ba"/><stop offset="0.468" stop-color="#ff458a"/><stop offset="0.581" stop-color="#ff285f"/><stop offset="0.758" stop-color="#ff0d37"/><stop offset="0.935" stop-color="#ff001f"/><stop offset="1.000" stop-color="#ff0018"/></linearGradient><linearGradient id="ci53" gradientUnits="userSpaceOnUse" x1="1309.8" x2="1616.6" y1="0" y2="0"><stop offset="0.000" stop-color="#00a5ff"/><stop offset="0.033" stop-color="#00a2ff"/><stop offset="0.082" stop-color="#209fff"/><stop offset="0.213" stop-color="#8c94ff"/><stop offset="0.328" stop-color="#ff87fd"/><stop offset="0.377" stop-color="#ff6ace"/><stop offset="0.459" stop-color="#ff4899"/><stop offset="0.574" stop-color="#ff2969"/><stop offset="0.721" stop-color="#ff1244"/><stop offset="0.918" stop-color="#ff0026"/><stop offset="1.000" stop-color="#ff001c"/></linearGradient><linearGradient id="ci54" gradientUnits="userSpaceOnUse" x1="1308.3" x2="1607.0" y1="0" y2="0"><stop offset="0.000" stop-color="#009dff"/><stop offset="0.034" stop-color="#009aff"/><stop offset="0.085" stop-color="#1f97ff"/><stop offset="0.220" stop-color="#8a8bff"/><stop offset="0.339" stop-color="#fd7eff"/><stop offset="0.407" stop-color="#ff5bc5"/><stop offset="0.475" stop-color="#ff429c"/><stop offset="0.576" stop-color="#ff2971"/><stop offset="0.729" stop-color="#ff1049"/><stop offset="0.915" stop-color="#ff002b"/><stop offset="1.000" stop-color="#ff0021"/></linearGradient><linearGradient id="ci55" gradientUnits="userSpaceOnUse" x1="1306.8" x2="1597.4" y1="0" y2="0"><stop offset="0.000" stop-color="#0095ff"/><stop offset="0.034" stop-color="#0093ff"/><stop offset="0.086" stop-color="#1e8fff"/><stop offset="0.224" stop-color="#8683ff"/><stop offset="0.328" stop-color="#e378ff"/><stop offset="0.345" stop-color="#f476ff"/><stop offset="0.362" stop-color="#ff71f9"/><stop offset="0.431" stop-color="#ff51c1"/><stop offset="0.517" stop-color="#ff3692"/><stop offset="0.638" stop-color="#ff1d67"/><stop offset="0.810" stop-color="#ff0740"/><stop offset="0.948" stop-color="#ff002c"/><stop offset="1.000" stop-color="#ff0026"/></linearGradient><linearGradient id="ci56" gradientUnits="userSpaceOnUse" x1="1305.4" x2="1587.8" y1="0" y2="0"><stop offset="0.000" stop-color="#008eff"/><stop offset="0.036" stop-color="#008bff"/><stop offset="0.089" stop-color="#1e87ff"/><stop offset="0.232" stop-color="#847aff"/><stop offset="0.375" stop-color="#ff6afc"/><stop offset="0.446" stop-color="#ff4bc4"/><stop offset="0.536" stop-color="#ff3194"/><stop offset="0.679" stop-color="#ff1764"/><stop offset="0.857" stop-color="#ff033f"/><stop offset="1.000" stop-color="#ff002b"/></linearGradient><linearGradient id="ci57" gradientUnits="userSpaceOnUse" x1="1303.9" x2="1578.2" y1="0" y2="0"><stop offset="0.000" stop-color="#0087ff"/><stop offset="0.037" stop-color="#0084ff"/><stop offset="0.148" stop-color="#417bff"/><stop offset="0.296" stop-color="#ae6dff"/><stop offset="0.389" stop-color="#fe62ff"/><stop offset="0.444" stop-color="#ff4bd3"/><stop offset="0.519" stop-color="#ff35a7"/><stop offset="0.648" stop-color="#ff1b75"/><stop offset="0.815" stop-color="#ff064d"/><stop offset="0.963" stop-color="#ff0036"/><stop offset="1.000" stop-color="#ff0031"/></linearGradient><linearGradient id="ci58" gradientUnits="userSpaceOnUse" x1="1302.4" x2="1568.6" y1="0" y2="0"><stop offset="0.000" stop-color="#0080ff"/><stop offset="0.038" stop-color="#007dff"/><stop offset="0.113" stop-color="#2877ff"/><stop offset="0.245" stop-color="#7e6bff"/><stop offset="0.377" stop-color="#e45dff"/><stop offset="0.396" stop-color="#f55bff"/><stop offset="0.415" stop-color="#ff56f9"/><stop offset="0.491" stop-color="#ff3cc3"/><stop offset="0.604" stop-color="#ff228e"/><stop offset="0.755" stop-color="#ff0c61"/><stop offset="0.906" stop-color="#ff0044"/><stop offset="1.000" stop-color="#ff0037"/></linearGradient><linearGradient id="ci59" gradientUnits="userSpaceOnUse" x1="1301.0" x2="1559.1" y1="0" y2="0"><stop offset="0.000" stop-color="#007aff"/><stop offset="0.039" stop-color="#0077ff"/><stop offset="0.098" stop-color="#1d72ff"/><stop offset="0.255" stop-color="#7d64ff"/><stop offset="0.392" stop-color="#e255ff"/><stop offset="0.431" stop-color="#ff4ffc"/><stop offset="0.510" stop-color="#ff36c6"/><stop offset="0.608" stop-color="#ff2197"/><stop offset="0.765" stop-color="#ff0b67"/><stop offset="0.902" stop-color="#ff004c"/><stop offset="1.000" stop-color="#ff003d"/></linearGradient><linearGradient id="ci60" gradientUnits="userSpaceOnUse" x1="1299.5" x2="1549.5" y1="0" y2="0"><stop offset="0.000" stop-color="#0073ff"/><stop offset="0.041" stop-color="#0070ff"/><stop offset="0.122" stop-color="#286aff"/><stop offset="0.286" stop-color="#895bff"/><stop offset="0.449" stop-color="#ff49fe"/><stop offset="0.551" stop-color="#ff2cbd"/><stop offset="0.673" stop-color="#ff168b"/><stop offset="0.837" stop-color="#ff0360"/><stop offset="1.000" stop-color="#ff0044"/></linearGradient><linearGradient id="ci61" gradientUnits="userSpaceOnUse" x1="1298.0" x2="1539.9" y1="0" y2="0"><stop offset="0.000" stop-color="#006dff"/><stop offset="0.042" stop-color="#006aff"/><stop offset="0.167" stop-color="#3c60ff"/><stop offset="0.333" stop-color="#9e50ff"/><stop offset="0.458" stop-color="#f642ff"/><stop offset="0.479" stop-color="#ff3ef8"/><stop offset="0.563" stop-color="#ff29c5"/><stop offset="0.667" stop-color="#ff1698"/><stop offset="0.833" stop-color="#ff036a"/><stop offset="1.000" stop-color="#ff004b"/></linearGradient><linearGradient id="ci62" gradientUnits="userSpaceOnUse" x1="1296.5" x2="1530.3" y1="0" y2="0"><stop offset="0.000" stop-color="#0067ff"/><stop offset="0.043" stop-color="#0064ff"/><stop offset="0.174" stop-color="#3c5aff"/><stop offset="0.348" stop-color="#9d4aff"/><stop offset="0.478" stop-color="#f43bff"/><stop offset="0.500" stop-color="#ff38fb"/><stop offset="0.587" stop-color="#ff23c7"/><stop offset="0.717" stop-color="#ff0f93"/><stop offset="0.891" stop-color="#ff0066"/><stop offset="1.000" stop-color="#ff0053"/></linearGradient><linearGradient id="ci63" gradientUnits="userSpaceOnUse" x1="1295.1" x2="1520.7" y1="0" y2="0"><stop offset="0.000" stop-color="#0061ff"/><stop offset="0.044" stop-color="#005eff"/><stop offset="0.133" stop-color="#2458ff"/><stop offset="0.356" stop-color="#9744ff"/><stop offset="0.511" stop-color="#f933ff"/><stop offset="0.556" stop-color="#ff29e8"/><stop offset="0.667" stop-color="#ff16b2"/><stop offset="0.844" stop-color="#ff017a"/><stop offset="1.000" stop-color="#ff005b"/></linearGradient><linearGradient id="ci64" gradientUnits="userSpaceOnUse" x1="1293.6" x2="1511.1" y1="0" y2="0"><stop offset="0.000" stop-color="#005cff"/><stop offset="0.047" stop-color="#0059ff"/><stop offset="0.186" stop-color="#394eff"/><stop offset="0.419" stop-color="#b039ff"/><stop offset="0.535" stop-color="#f72cff"/><stop offset="0.558" stop-color="#ff28f8"/><stop offset="0.651" stop-color="#ff17c7"/><stop offset="0.767" stop-color="#ff089b"/><stop offset="0.907" stop-color="#ff0077"/><stop offset="1.000" stop-color="#ff0064"/></linearGradient><linearGradient id="ci65" gradientUnits="userSpaceOnUse" x1="1292.1" x2="1501.5" y1="0" y2="0"><stop offset="0.000" stop-color="#0057ff"/><stop offset="0.049" stop-color="#0053ff"/><stop offset="0.195" stop-color="#3948ff"/><stop offset="0.415" stop-color="#a235ff"/><stop offset="0.561" stop-color="#f626ff"/><stop offset="0.585" stop-color="#ff22f9"/><stop offset="0.707" stop-color="#ff0fbe"/><stop offset="0.854" stop-color="#ff008f"/><stop offset="1.000" stop-color="#ff006e"/></linearGradient><linearGradient id="ci66" gradientUnits="userSpaceOnUse" x1="1290.7" x2="1491.9" y1="0" y2="0"><stop offset="0.000" stop-color="#0051ff"/><stop offset="0.050" stop-color="#004eff"/><stop offset="0.150" stop-color="#2347ff"/><stop offset="0.400" stop-color="#9032ff"/><stop offset="0.600" stop-color="#fa1eff"/><stop offset="0.650" stop-color="#ff16e8"/><stop offset="0.775" stop-color="#ff06b4"/><stop offset="0.925" stop-color="#ff0089"/><stop offset="1.000" stop-color="#ff0078"/></linearGradient><linearGradient id="ci67" gradientUnits="userSpaceOnUse" x1="1289.2" x2="1482.3" y1="0" y2="0"><stop offset="0.000" stop-color="#004cff"/><stop offset="0.053" stop-color="#0049ff"/><stop offset="0.184" stop-color="#2d40ff"/><stop offset="0.421" stop-color="#8f2cff"/><stop offset="0.632" stop-color="#f918ff"/><stop offset="0.658" stop-color="#ff14f7"/><stop offset="0.763" stop-color="#ff07c7"/><stop offset="0.895" stop-color="#ff009d"/><stop offset="1.000" stop-color="#ff0084"/></linearGradient><linearGradient id="ci68" gradientUnits="userSpaceOnUse" x1="1287.7" x2="1472.7" y1="0" y2="0"><stop offset="0.000" stop-color="#0047ff"/><stop offset="0.054" stop-color="#0044ff"/><stop offset="0.216" stop-color="#3539ff"/><stop offset="0.486" stop-color="#a123ff"/><stop offset="0.676" stop-color="#fd11ff"/><stop offset="0.838" stop-color="#ff00bd"/><stop offset="1.000" stop-color="#ff0091"/></linearGradient><linearGradient id="ci69" gradientUnits="userSpaceOnUse" x1="1286.3" x2="1463.2" y1="0" y2="0"><stop offset="0.000" stop-color="#0043ff"/><stop offset="0.057" stop-color="#003fff"/><stop offset="0.229" stop-color="#3534ff"/><stop offset="0.486" stop-color="#9520ff"/><stop offset="0.714" stop-color="#fc0bff"/><stop offset="0.857" stop-color="#ff00c7"/><stop offset="1.000" stop-color="#ff009e"/></linearGradient><linearGradient id="ci70" gradientUnits="userSpaceOnUse" x1="1284.8" x2="1453.6" y1="0" y2="0"><stop offset="0.000" stop-color="#003eff"/><stop offset="0.061" stop-color="#003aff"/><stop offset="0.273" stop-color="#3f2dff"/><stop offset="0.576" stop-color="#ad16ff"/><stop offset="0.758" stop-color="#fb05ff"/><stop offset="0.879" stop-color="#ff00d2"/><stop offset="1.000" stop-color="#ff00ae"/></linearGradient><linearGradient id="ci71" gradientUnits="userSpaceOnUse" x1="1283.3" x2="1444.0" y1="0" y2="0"><stop offset="0.000" stop-color="#0039ff"/><stop offset="0.062" stop-color="#0036ff"/><stop offset="0.219" stop-color="#292cff"/><stop offset="0.563" stop-color="#9a14ff"/><stop offset="0.813" stop-color="#fe00ff"/><stop offset="0.969" stop-color="#ff00c8"/><stop offset="1.000" stop-color="#ff00bf"/></linearGradient><linearGradient id="ci72" gradientUnits="userSpaceOnUse" x1="1281.9" x2="1434.4" y1="0" y2="0"><stop offset="0.000" stop-color="#0035ff"/><stop offset="0.067" stop-color="#0031ff"/><stop offset="0.300" stop-color="#3c24ff"/><stop offset="0.633" stop-color="#a60dff"/><stop offset="0.833" stop-color="#f000ff"/><stop offset="0.867" stop-color="#fe00ff"/><stop offset="1.000" stop-color="#ff00d1"/></linearGradient><linearGradient id="ci73" gradientUnits="userSpaceOnUse" x1="1280.4" x2="1424.8" y1="0" y2="0"><stop offset="0.000" stop-color="#0031ff"/><stop offset="0.071" stop-color="#002dff"/><stop offset="0.393" stop-color="#501bff"/><stop offset="0.714" stop-color="#b205ff"/><stop offset="0.893" stop-color="#f100ff"/><stop offset="0.929" stop-color="#fe00ff"/><stop offset="1.000" stop-color="#ff00e7"/></linearGradient><linearGradient id="ci74" gradientUnits="userSpaceOnUse" x1="1278.9" x2="1415.2" y1="0" y2="0"><stop offset="0.000" stop-color="#002dff"/><stop offset="0.074" stop-color="#0029ff"/><stop offset="0.333" stop-color="#3a1bff"/><stop offset="0.704" stop-color="#9f04ff"/><stop offset="0.963" stop-color="#f300ff"/><stop offset="1.000" stop-color="#ff00ff"/></linearGradient><linearGradient id="ci75" gradientUnits="userSpaceOnUse" x1="1277.5" x2="1405.6" y1="0" y2="0"><stop offset="0.000" stop-color="#0029ff"/><stop offset="0.080" stop-color="#0025ff"/><stop offset="0.360" stop-color="#3a17ff"/><stop offset="0.800" stop-color="#ab00ff"/><stop offset="1.000" stop-color="#e700ff"/></linearGradient><linearGradient id="ci76" gradientUnits="userSpaceOnUse" x1="1276.0" x2="1396.0" y1="0" y2="0"><stop offset="0.000" stop-color="#0025ff"/><stop offset="0.083" stop-color="#0021ff"/><stop offset="0.417" stop-color="#4011ff"/><stop offset="0.792" stop-color="#9800ff"/><stop offset="1.000" stop-color="#d000ff"/></linearGradient><linearGradient id="ci77" gradientUnits="userSpaceOnUse" x1="1274.5" x2="1386.4" y1="0" y2="0"><stop offset="0.000" stop-color="#0021ff"/><stop offset="0.091" stop-color="#001dff"/><stop offset="0.500" stop-color="#4a0bff"/><stop offset="0.773" stop-color="#8400ff"/><stop offset="1.000" stop-color="#ba00ff"/></linearGradient><linearGradient id="ci78" gradientUnits="userSpaceOnUse" x1="1273.1" x2="1376.8" y1="0" y2="0"><stop offset="0.000" stop-color="#001dff"/><stop offset="0.100" stop-color="#0019ff"/><stop offset="0.500" stop-color="#4209ff"/><stop offset="0.750" stop-color="#7100ff"/><stop offset="1.000" stop-color="#a600ff"/></linearGradient><linearGradient id="ci79" gradientUnits="userSpaceOnUse" x1="1271.6" x2="1367.2" y1="0" y2="0"><stop offset="0.000" stop-color="#001aff"/><stop offset="0.105" stop-color="#0016ff"/><stop offset="0.632" stop-color="#5001ff"/><stop offset="1.000" stop-color="#9300ff"/></linearGradient><linearGradient id="ci80" gradientUnits="userSpaceOnUse" x1="1270.1" x2="1357.7" y1="0" y2="0"><stop offset="0.000" stop-color="#0016ff"/><stop offset="0.118" stop-color="#0012ff"/><stop offset="0.588" stop-color="#3f02ff"/><stop offset="1.000" stop-color="#8100ff"/></linearGradient><linearGradient id="ci81" gradientUnits="userSpaceOnUse" x1="1268.7" x2="1348.1" y1="0" y2="0"><stop offset="0.000" stop-color="#0013ff"/><stop offset="0.133" stop-color="#000fff"/><stop offset="0.667" stop-color="#4100ff"/><stop offset="1.000" stop-color="#7000ff"/></linearGradient><linearGradient id="ci82" gradientUnits="userSpaceOnUse" x1="1267.2" x2="1338.5" y1="0" y2="0"><stop offset="0.000" stop-color="#000fff"/><stop offset="0.143" stop-color="#000bff"/><stop offset="0.714" stop-color="#3d00ff"/><stop offset="1.000" stop-color="#6000ff"/></linearGradient><linearGradient id="ci83" gradientUnits="userSpaceOnUse" x1="1265.9" x2="1328.9" y1="0" y2="0"><stop offset="0.000" stop-color="#000cff"/><stop offset="0.167" stop-color="#0008ff"/><stop offset="0.667" stop-color="#2e00ff"/><stop offset="1.000" stop-color="#5000ff"/></linearGradient><linearGradient id="ci84" gradientUnits="userSpaceOnUse" x1="1265.9" x2="1319.3" y1="0" y2="0"><stop offset="0.000" stop-color="#0008ff"/><stop offset="0.200" stop-color="#0104ff"/><stop offset="1.000" stop-color="#4200ff"/></linearGradient><linearGradient id="ci85" gradientUnits="userSpaceOnUse" x1="1265.9" x2="1309.7" y1="0" y2="0"><stop offset="0.000" stop-color="#0004ff"/><stop offset="0.250" stop-color="#0300ff"/><stop offset="1.000" stop-color="#3400ff"/></linearGradient><linearGradient id="ci86" gradientUnits="userSpaceOnUse" x1="1265.9" x2="1300.1" y1="0" y2="0"><stop offset="0.000" stop-color="#0001ff"/><stop offset="0.333" stop-color="#0600ff"/><stop offset="1.000" stop-color="#2700ff"/></linearGradient><linearGradient id="ci87" gradientUnits="userSpaceOnUse" x1="1265.9" x2="1290.5" y1="0" y2="0"><stop offset="0.000" stop-color="#0000ff"/><stop offset="0.250" stop-color="#0100ff"/><stop offset="1.000" stop-color="#1b00ff"/></linearGradient>
<clipPath id="clocus"><path d="M1293.7 666.7C1293.6 666.7 1293.5 666.7 1293.4 666.8C1293.3 666.8 1293.2 666.8 1293.0 666.8C1292.8 666.8 1292.7 666.8 1292.4 666.8C1292.2 666.8 1291.9 666.8 1291.4 666.6C1290.9 666.4 1290.3 666.1 1289.4 665.5C1288.4 664.9 1287.4 664.1 1285.7 663.0C1284.0 661.9 1282.1 660.7 1279.3 658.8C1276.5 656.9 1271.8 653.6 1268.9 651.3C1266.1 649.0 1264.7 647.9 1262.0 645.0C1259.2 642.1 1256.1 638.7 1252.6 633.9C1249.1 629.0 1245.2 623.6 1240.7 615.9C1236.2 608.1 1231.3 599.1 1225.7 587.3C1220.1 575.5 1213.4 561.9 1207.1 545.1C1200.8 528.3 1194.2 508.4 1188.0 486.5C1181.8 464.5 1175.1 438.5 1170.0 413.3C1164.9 388.1 1160.1 360.3 1157.4 335.2C1154.8 310.1 1153.1 284.8 1153.9 262.8C1154.7 240.9 1157.3 219.8 1162.1 203.6C1166.9 187.3 1174.4 173.8 1182.6 165.1C1190.9 156.5 1201.4 153.1 1211.7 151.6C1222.0 150.1 1233.5 153.4 1244.5 156.3C1255.5 159.2 1267.0 164.3 1277.7 168.9C1288.5 173.6 1298.8 178.7 1309.1 184.0C1319.3 189.4 1329.2 195.1 1339.2 201.0C1349.2 206.9 1359.1 213.2 1368.9 219.6C1378.8 226.1 1388.6 232.8 1398.3 239.5C1408.1 246.3 1417.9 253.3 1427.7 260.3C1437.4 267.3 1447.3 274.5 1457.1 281.7C1466.8 288.9 1476.6 296.1 1486.3 303.4C1496.0 310.6 1505.8 317.9 1515.4 325.1C1524.9 332.2 1534.5 339.4 1543.8 346.5C1553.2 353.5 1562.5 360.6 1571.5 367.4C1580.5 374.2 1589.5 380.9 1598.0 387.4C1606.6 393.9 1615.0 400.2 1623.0 406.2C1630.9 412.2 1638.7 418.0 1645.7 423.4C1652.8 428.7 1659.3 433.6 1665.5 438.3C1671.7 443.0 1677.6 447.4 1682.9 451.4C1688.2 455.4 1693.0 458.9 1697.4 462.2C1701.8 465.5 1705.6 468.4 1709.1 471.1C1712.6 473.8 1715.7 476.1 1718.5 478.2C1721.3 480.3 1723.7 482.1 1726.0 483.8C1728.2 485.5 1730.1 486.9 1732.0 488.3C1733.8 489.7 1735.4 491.0 1737.0 492.1C1738.5 493.3 1739.8 494.3 1741.1 495.2C1742.3 496.1 1743.4 496.9 1744.4 497.6C1745.3 498.4 1745.9 498.8 1746.8 499.5C1747.8 500.2 1748.9 501.1 1750.1 502.0C1751.3 502.9 1753.3 504.4 1754.0 504.9Z"/></clipPath>
<clipPath id="ctri"><path d="M1676.2 464.7 L1397.0 296.9 L1273.9 632.5 Z"/></clipPath>
<filter id="vblur" x="0" y="0" width="1" height="1" filterUnits="objectBoundingBox"><feGaussianBlur stdDeviation="0 2.2"/></filter>
<linearGradient id="ii0" gradientUnits="userSpaceOnUse" x1="1600.3" x2="1834.3" y1="0" y2="0"><stop offset="0.000" stop-color="#aeff00"/><stop offset="0.789" stop-color="#fdff00"/><stop offset="1.000" stop-color="#ffec00"/></linearGradient><linearGradient id="ii1" gradientUnits="userSpaceOnUse" x1="1600.3" x2="1834.3" y1="0" y2="0"><stop offset="0.000" stop-color="#b0ff00"/><stop offset="0.737" stop-color="#f9ff00"/><stop offset="0.789" stop-color="#ffff00"/><stop offset="1.000" stop-color="#ffea00"/></linearGradient><linearGradient id="ii2" gradientUnits="userSpaceOnUse" x1="1600.3" x2="1834.3" y1="0" y2="0"><stop offset="0.000" stop-color="#b1ff00"/><stop offset="0.789" stop-color="#fffe00"/><stop offset="1.000" stop-color="#ffe900"/></linearGradient><linearGradient id="ii3" gradientUnits="userSpaceOnUse" x1="1600.3" x2="1834.3" y1="0" y2="0"><stop offset="0.000" stop-color="#b3ff00"/><stop offset="0.737" stop-color="#fdff00"/><stop offset="1.000" stop-color="#ffe700"/></linearGradient><linearGradient id="ii4" gradientUnits="userSpaceOnUse" x1="1600.3" x2="1834.3" y1="0" y2="0"><stop offset="0.000" stop-color="#b4ff00"/><stop offset="0.737" stop-color="#ffff00"/><stop offset="1.000" stop-color="#ffe500"/></linearGradient><linearGradient id="ii5" gradientUnits="userSpaceOnUse" x1="1600.3" x2="1834.3" y1="0" y2="0"><stop offset="0.000" stop-color="#b6ff01"/><stop offset="0.737" stop-color="#fffd00"/><stop offset="1.000" stop-color="#ffe300"/></linearGradient><linearGradient id="ii6" gradientUnits="userSpaceOnUse" x1="1600.3" x2="1834.3" y1="0" y2="0"><stop offset="0.000" stop-color="#b7ff01"/><stop offset="0.684" stop-color="#fdff00"/><stop offset="1.000" stop-color="#ffe200"/></linearGradient><linearGradient id="ii7" gradientUnits="userSpaceOnUse" x1="1600.3" x2="1834.3" y1="0" y2="0"><stop offset="0.000" stop-color="#b9ff02"/><stop offset="0.684" stop-color="#ffff00"/><stop offset="1.000" stop-color="#ffe000"/></linearGradient><linearGradient id="ii8" gradientUnits="userSpaceOnUse" x1="1600.3" x2="1834.3" y1="0" y2="0"><stop offset="0.000" stop-color="#baff03"/><stop offset="0.474" stop-color="#eaff00"/><stop offset="0.684" stop-color="#fffd00"/><stop offset="1.000" stop-color="#ffde00"/></linearGradient><linearGradient id="ii9" gradientUnits="userSpaceOnUse" x1="1600.3" x2="1834.3" y1="0" y2="0"><stop offset="0.000" stop-color="#bcff04"/><stop offset="0.421" stop-color="#e7ff00"/><stop offset="0.632" stop-color="#fdff00"/><stop offset="1.000" stop-color="#ffdc00"/></linearGradient><linearGradient id="ii10" gradientUnits="userSpaceOnUse" x1="1600.3" x2="1834.3" y1="0" y2="0"><stop offset="0.000" stop-color="#bdff05"/><stop offset="0.316" stop-color="#ddff00"/><stop offset="0.632" stop-color="#ffff00"/><stop offset="1.000" stop-color="#ffdb00"/></linearGradient><linearGradient id="ii11" gradientUnits="userSpaceOnUse" x1="1600.3" x2="1834.3" y1="0" y2="0"><stop offset="0.000" stop-color="#bfff06"/><stop offset="0.368" stop-color="#e5ff00"/><stop offset="0.632" stop-color="#fffd00"/><stop offset="1.000" stop-color="#ffd900"/></linearGradient><linearGradient id="ii12" gradientUnits="userSpaceOnUse" x1="1600.3" x2="1834.3" y1="0" y2="0"><stop offset="0.000" stop-color="#c1ff07"/><stop offset="0.421" stop-color="#ecff00"/><stop offset="0.579" stop-color="#feff00"/><stop offset="1.000" stop-color="#ffd700"/></linearGradient><linearGradient id="ii13" gradientUnits="userSpaceOnUse" x1="1600.3" x2="1834.3" y1="0" y2="0"><stop offset="0.000" stop-color="#c2ff07"/><stop offset="0.421" stop-color="#eeff00"/><stop offset="0.579" stop-color="#fffe00"/><stop offset="1.000" stop-color="#ffd600"/></linearGradient><linearGradient id="ii14" gradientUnits="userSpaceOnUse" x1="1600.3" x2="1834.3" y1="0" y2="0"><stop offset="0.000" stop-color="#c4ff08"/><stop offset="0.474" stop-color="#f6ff00"/><stop offset="0.579" stop-color="#fffc00"/><stop offset="1.000" stop-color="#ffd400"/></linearGradient><linearGradient id="ii15" gradientUnits="userSpaceOnUse" x1="1600.3" x2="1834.3" y1="0" y2="0"><stop offset="0.000" stop-color="#c6ff09"/><stop offset="0.526" stop-color="#feff00"/><stop offset="1.000" stop-color="#ffd200"/></linearGradient><linearGradient id="ii16" gradientUnits="userSpaceOnUse" x1="1600.3" x2="1834.3" y1="0" y2="0"><stop offset="0.000" stop-color="#c7ff0a"/><stop offset="0.526" stop-color="#fffe00"/><stop offset="0.947" stop-color="#ffd500"/><stop offset="1.000" stop-color="#ffd100"/></linearGradient><linearGradient id="ii17" gradientUnits="userSpaceOnUse" x1="1600.3" x2="1834.3" y1="0" y2="0"><stop offset="0.000" stop-color="#c9ff0b"/><stop offset="0.474" stop-color="#fcff00"/><stop offset="0.632" stop-color="#fff100"/><stop offset="1.000" stop-color="#ffcf00"/></linearGradient><linearGradient id="ii18" gradientUnits="userSpaceOnUse" x1="1600.3" x2="1834.3" y1="0" y2="0"><stop offset="0.000" stop-color="#cbff0c"/><stop offset="0.474" stop-color="#feff01"/><stop offset="1.000" stop-color="#ffcd00"/></linearGradient><linearGradient id="ii19" gradientUnits="userSpaceOnUse" x1="1600.3" x2="1834.3" y1="0" y2="0"><stop offset="0.000" stop-color="#ccff0d"/><stop offset="0.474" stop-color="#fffe02"/><stop offset="0.947" stop-color="#ffd000"/><stop offset="1.000" stop-color="#ffcc00"/></linearGradient><linearGradient id="ii20" gradientUnits="userSpaceOnUse" x1="1600.3" x2="1834.3" y1="0" y2="0"><stop offset="0.000" stop-color="#ceff0e"/><stop offset="0.421" stop-color="#fcff04"/><stop offset="0.579" stop-color="#fff001"/><stop offset="1.000" stop-color="#ffca00"/></linearGradient><linearGradient id="ii21" gradientUnits="userSpaceOnUse" x1="1600.3" x2="1834.3" y1="0" y2="0"><stop offset="0.000" stop-color="#d0ff0f"/><stop offset="0.421" stop-color="#feff05"/><stop offset="0.737" stop-color="#ffdf00"/><stop offset="1.000" stop-color="#ffc800"/></linearGradient><linearGradient id="ii22" gradientUnits="userSpaceOnUse" x1="1600.3" x2="1834.3" y1="0" y2="0"><stop offset="0.000" stop-color="#d2ff10"/><stop offset="0.421" stop-color="#fffe06"/><stop offset="0.789" stop-color="#ffd800"/><stop offset="1.000" stop-color="#ffc700"/></linearGradient><linearGradient id="ii23" gradientUnits="userSpaceOnUse" x1="1600.3" x2="1834.3" y1="0" y2="0"><stop offset="0.000" stop-color="#d4ff11"/><stop offset="0.368" stop-color="#fcff08"/><stop offset="0.474" stop-color="#fff606"/><stop offset="0.842" stop-color="#ffd200"/><stop offset="1.000" stop-color="#ffc500"/></linearGradient><linearGradient id="ii24" gradientUnits="userSpaceOnUse" x1="1600.3" x2="1834.3" y1="0" y2="0"><stop offset="0.000" stop-color="#d5ff12"/><stop offset="0.368" stop-color="#ffff09"/><stop offset="0.842" stop-color="#ffd000"/><stop offset="1.000" stop-color="#ffc400"/></linearGradient><linearGradient id="ii25" gradientUnits="userSpaceOnUse" x1="1600.3" x2="1834.3" y1="0" y2="0"><stop offset="0.000" stop-color="#d7ff13"/><stop offset="0.368" stop-color="#fffd0a"/><stop offset="0.842" stop-color="#ffcf00"/><stop offset="1.000" stop-color="#ffc200"/></linearGradient><linearGradient id="ii26" gradientUnits="userSpaceOnUse" x1="1600.3" x2="1834.3" y1="0" y2="0"><stop offset="0.000" stop-color="#d9ff14"/><stop offset="0.316" stop-color="#fdff0d"/><stop offset="0.895" stop-color="#ffc900"/><stop offset="1.000" stop-color="#ffc100"/></linearGradient><linearGradient id="ii27" gradientUnits="userSpaceOnUse" x1="1600.3" x2="1834.3" y1="0" y2="0"><stop offset="0.000" stop-color="#dbff15"/><stop offset="0.316" stop-color="#ffff0e"/><stop offset="0.737" stop-color="#ffd403"/><stop offset="1.000" stop-color="#ffbf00"/></linearGradient><linearGradient id="ii28" gradientUnits="userSpaceOnUse" x1="1600.3" x2="1834.3" y1="0" y2="0"><stop offset="0.000" stop-color="#ddff16"/><stop offset="0.316" stop-color="#fffd0f"/><stop offset="0.737" stop-color="#ffd304"/><stop offset="1.000" stop-color="#ffbd00"/></linearGradient><linearGradient id="ii29" gradientUnits="userSpaceOnUse" x1="1600.3" x2="1834.3" y1="0" y2="0"><stop offset="0.000" stop-color="#dfff17"/><stop offset="0.263" stop-color="#fdff11"/><stop offset="0.842" stop-color="#ffc802"/><stop offset="1.000" stop-color="#ffbc00"/></linearGradient><linearGradient id="ii30" gradientUnits="userSpaceOnUse" x1="1600.3" x2="1834.3" y1="0" y2="0"><stop offset="0.000" stop-color="#e1ff18"/><stop offset="0.263" stop-color="#ffff12"/><stop offset="0.684" stop-color="#ffd406"/><stop offset="1.000" stop-color="#ffba00"/></linearGradient><linearGradient id="ii31" gradientUnits="userSpaceOnUse" x1="1600.3" x2="1834.3" y1="0" y2="0"><stop offset="0.000" stop-color="#e3ff19"/><stop offset="0.263" stop-color="#fffd13"/><stop offset="0.737" stop-color="#ffcd06"/><stop offset="1.000" stop-color="#ffb900"/></linearGradient><linearGradient id="ii32" gradientUnits="userSpaceOnUse" x1="1600.3" x2="1834.3" y1="0" y2="0"><stop offset="0.000" stop-color="#e5ff1a"/><stop offset="0.211" stop-color="#fdff15"/><stop offset="0.842" stop-color="#ffc304"/><stop offset="1.000" stop-color="#ffb701"/></linearGradient><linearGradient id="ii33" gradientUnits="userSpaceOnUse" x1="1600.3" x2="1834.3" y1="0" y2="0"><stop offset="0.000" stop-color="#e7ff1b"/><stop offset="0.211" stop-color="#ffff16"/><stop offset="0.632" stop-color="#ffd30a"/><stop offset="1.000" stop-color="#ffb602"/></linearGradient><linearGradient id="ii34" gradientUnits="userSpaceOnUse" x1="1600.3" x2="1834.3" y1="0" y2="0"><stop offset="0.000" stop-color="#e9ff1c"/><stop offset="0.158" stop-color="#fbff19"/><stop offset="0.263" stop-color="#fff615"/><stop offset="0.737" stop-color="#ffc808"/><stop offset="1.000" stop-color="#ffb403"/></linearGradient><linearGradient id="ii35" gradientUnits="userSpaceOnUse" x1="1600.3" x2="1834.3" y1="0" y2="0"><stop offset="0.000" stop-color="#eaff1d"/><stop offset="0.158" stop-color="#fdff1a"/><stop offset="0.737" stop-color="#ffc709"/><stop offset="1.000" stop-color="#ffb303"/></linearGradient>
<clipPath id="cins"><rect x="1600.3" y="153.3" width="234.0" height="197.7"/></clipPath>
<linearGradient id="rbr" x1="0" y1="0" x2="0" y2="1"><stop offset="0" stop-color="#ff5a5a"/><stop offset="1" stop-color="#ff4646"/></linearGradient>
<linearGradient id="rbg" x1="0" y1="0" x2="0" y2="1"><stop offset="0" stop-color="#5aac5a"/><stop offset="1" stop-color="#1f941f"/></linearGradient>
<linearGradient id="rbb" x1="0" y1="0" x2="0" y2="1"><stop offset="0" stop-color="#5c5cff"/><stop offset="1" stop-color="#2626ff"/></linearGradient>
<linearGradient id="thd" x1="0" y1="0" x2="0" y2="1"><stop offset="0" stop-color="#424242"/><stop offset="0.5" stop-color="#3a3a3a"/><stop offset="0.52" stop-color="#1e1e1e"/><stop offset="1" stop-color="#161616"/></linearGradient>
<linearGradient id="bbar" x1="0" y1="0" x2="0" y2="1"><stop offset="0" stop-color="#4a4a4a"/><stop offset="0.3" stop-color="#424242"/><stop offset="0.55" stop-color="#363636"/><stop offset="0.8" stop-color="#2a2a2a"/><stop offset="1" stop-color="#242424"/></linearGradient>
<linearGradient id="bi" x1="0" y1="0" x2="0" y2="1"><stop offset="0" stop-color="#acacac"/><stop offset="0.5" stop-color="#868686"/><stop offset="1" stop-color="#585858"/></linearGradient>
<linearGradient id="bsel" x1="0" y1="0" x2="0" y2="1"><stop offset="0" stop-color="#181818"/><stop offset="0.6" stop-color="#242424"/><stop offset="1" stop-color="#363636"/></linearGradient>
<linearGradient id="upc" x1="0" y1="0" x2="0" y2="1"><stop offset="0" stop-color="#4e4e4e"/><stop offset="1" stop-color="#9a9a9a"/></linearGradient>
<linearGradient id="cb1" x1="0" y1="0" x2="0" y2="1"><stop offset="0" stop-color="#b2b2b2"/><stop offset="1" stop-color="#666666"/></linearGradient>
<linearGradient id="cb2" x1="0" y1="0" x2="0" y2="1"><stop offset="0" stop-color="#bababa"/><stop offset="1" stop-color="#787878"/></linearGradient>
<linearGradient id="cbl" x1="0" y1="0" x2="0" y2="1"><stop offset="0" stop-color="#a8a8a8"/><stop offset="0.28" stop-color="#8c8c8c"/><stop offset="1" stop-color="#6c6c6c"/></linearGradient>
<linearGradient id="cbc" x1="0" y1="0" x2="0" y2="1"><stop offset="0" stop-color="#6e6e6e"/><stop offset="1" stop-color="#b0b0b0"/></linearGradient>
<linearGradient id="sti" x1="0" y1="0" x2="0" y2="1"><stop offset="0" stop-color="#cccccc"/><stop offset="0.5" stop-color="#c4c4c4"/><stop offset="0.5" stop-color="#a6a6a6"/><stop offset="1" stop-color="#b4b4b4"/></linearGradient>
<linearGradient id="sts" x1="0" y1="0" x2="0" y2="1"><stop offset="0" stop-color="#343434"/><stop offset="0.5" stop-color="#2a2a2a"/><stop offset="0.5" stop-color="#000000"/><stop offset="1" stop-color="#000000"/></linearGradient>
</defs>
<rect x="0.00" y="0.00" width="1920.00" height="1039.00" fill="#333333" />
<rect x="0.00" y="0.00" width="1920.00" height="25.50" fill="#ffffff" />
<rect x="7.0" y="3.9" width="6.7" height="6.7" rx="1.2" fill="#f6c01a" transform="rotate(45 10.3 7.3)"/>
<rect x="1.9" y="9.2" width="6.7" height="6.7" rx="1.2" fill="#30b4ea" transform="rotate(45 5.2 12.5)"/>
<rect x="12.2" y="9.2" width="6.7" height="6.7" rx="1.2" fill="#22cc22" transform="rotate(45 15.5 12.5)"/>
<rect x="7.0" y="14.3" width="6.7" height="6.7" rx="1.2" fill="#e6225c" transform="rotate(45 10.3 17.7)"/>
<text x="23.0" y="17.5" font-size="12.20" fill="#111111" textLength="444.0" lengthAdjust="spacingAndGlyphs" xml:space="preserve">Calman 2024 Calman Ultimate for Business 339 Days Remaining  - Untitled</text>
<g stroke="#222" stroke-width="1" fill="none"><line x1="1790" y1="12.5" x2="1801" y2="12.5"/><rect x="1842" y="9.5" width="8.5" height="8.5" rx="1"/><path d="M1844.5 9.5v-2.3h8.5v8.5h-2.3"/><path d="M1895 7l11.5 11M1906.5 7l-11.5 11"/></g>
<rect x="0.00" y="25.50" width="1920.00" height="74.00" fill="#222222" />
<rect x="214.00" y="39.50" width="1706.00" height="6.00" fill="url(#rb)" />
<path d="M0 26H206.5V54a4.5 4.5 0 0 1-4.5 4.5H4.5A4.5 4.5 0 0 1 0 54Z" fill="url(#cr)" stroke="#f06a6a" stroke-width="0.8"/>
<rect x="0.00" y="25.60" width="207.00" height="1.20" fill="#c01015" />
<g transform="translate(38.8 42) rotate(45)"><rect x="-10.2" y="-10.2" width="20.4" height="20.4" rx="2.8" fill="#ffffff"/><rect x="-8.55" y="-8.55" width="4.6" height="4.6" rx="1.2" fill="#ee686c"/><rect x="-8.55" y="-2.30" width="4.6" height="4.6" rx="1.2" fill="#ee686c"/><rect x="-8.55" y="3.95" width="4.6" height="4.6" rx="1.2" fill="#ee686c"/><rect x="-2.30" y="-8.55" width="4.6" height="4.6" rx="1.2" fill="#ee686c"/><rect x="-2.30" y="-2.30" width="4.6" height="4.6" rx="1.2" fill="#ee686c"/><rect x="-2.30" y="3.95" width="4.6" height="4.6" rx="1.2" fill="#ee686c"/><rect x="3.95" y="-8.55" width="4.6" height="4.6" rx="1.2" fill="#ee686c"/><rect x="3.95" y="-2.30" width="4.6" height="4.6" rx="1.2" fill="#ee686c"/><rect x="3.95" y="3.95" width="4.6" height="4.6" rx="1.2" fill="#ee686c"/></g>
<text x="55.0" y="49.3" font-size="29.00" fill="#ffffff" textLength="99.3" lengthAdjust="spacingAndGlyphs" stroke="#ffffff" stroke-width="0.7">calman</text>
<circle cx="187.5" cy="42" r="10.6" fill="url(#crd)"/>
<path d="M181.9 40.2h11.2l-5.6 6.2z" fill="#ffffff"/>
<path d="M-2 65.5H26a4 4 0 0 1 4 4V92a4 4 0 0 1-4 4H-2Z" fill="url(#pb)" stroke="#c4c4c4" stroke-width="1.2"/>
<circle cx="13.8" cy="80.6" r="10.6" fill="url(#pbc)"/>
<path d="M10.6 75v11.3l7-5.65z" fill="#ffffff"/>
<path d="M33 99.5V69.5a4 4 0 0 1 4-4H132.5a4 4 0 0 1 4 4V99.5Z" fill="url(#ht)" stroke="#5c5c5c" stroke-width="1"/>
<line x1="99.50" y1="66.00" x2="99.50" y2="99.00" stroke="#646464" stroke-width="1" />
<text x="40.0" y="88.2" font-size="13.20" fill="#e2e2e2" textLength="52.5" lengthAdjust="spacingAndGlyphs" >History 1</text>
<circle cx="117" cy="84.3" r="11" fill="url(#plc)"/>
<path d="M113 85h8M117 81v8" stroke="#8c8c8c" stroke-width="1.1"/>
<rect x="0.00" y="99.50" width="1920.00" height="1.00" fill="#2b2b2b" />
<path d="M1283.8 99V69a4 4 0 0 1 4-4H1441.0a4 4 0 0 1 4 4V99Z" fill="url(#tb)"/>
<path d="M1283.8 99V69a4 4 0 0 1 4-4h2.8V99Z" fill="#1fdc1f"/>
<circle cx="1382.6" cy="82.6" r="10.6" fill="url(#ddc)"/>
<path d="M1377.1 80.2h11l-5.5 6z" fill="#ffffff"/>
<text x="1294.0" y="78.2" font-size="12.00" fill="#f0f0f0" textLength="74.0" lengthAdjust="spacingAndGlyphs" stroke="#f0f0f0" stroke-width="0.25">X-Rite i1Pro 2</text>
<text x="1294.0" y="94.9" font-size="12.00" fill="#f0f0f0" textLength="63.0" lengthAdjust="spacingAndGlyphs" stroke="#f0f0f0" stroke-width="0.25">Direct View</text>
<line x1="1405.00" y1="68.00" x2="1405.00" y2="99.00" stroke="#3c3c3c" stroke-width="1" />
<line x1="1406.00" y1="68.00" x2="1406.00" y2="99.00" stroke="#7a7a7a" stroke-width="0.8" />
<circle cx="1428.1" cy="82.2" r="14" fill="#0000ee" stroke="#ffffff" stroke-width="1.4"/>
<text x="1428.1" y="85.9" font-size="10.40" fill="#ffffff" text-anchor="middle" textLength="17.4" lengthAdjust="spacingAndGlyphs" stroke="#ffffff" stroke-width="0.3">236</text>
<path d="M1452.4 99V69a4 4 0 0 1 4-4H1683.0a4 4 0 0 1 4 4V99Z" fill="url(#tb)"/>
<path d="M1452.4 99V69a4 4 0 0 1 4-4h2.8V99Z" fill="#1fdc1f"/>
<circle cx="1669.2" cy="82.6" r="10.6" fill="url(#ddc)"/>
<path d="M1663.7 80.2h11l-5.5 6z" fill="#ffffff"/>
<text x="1462.0" y="78.2" font-size="12.00" fill="#f0f0f0" textLength="192.0" lengthAdjust="spacingAndGlyphs" stroke="#f0f0f0" stroke-width="0.25">CalMAN Client 3 Pattern Generator</text>
<path d="M1694.0 99V69a4 4 0 0 1 4-4H1851.8a4 4 0 0 1 4 4V99Z" fill="url(#tb)"/>
<path d="M1694.0 99V69a4 4 0 0 1 4-4h2.8V99Z" fill="#e6e600"/>
<circle cx="1837.6" cy="82.6" r="10.6" fill="url(#ddc)"/>
<path d="M1832.1 80.2h11l-5.5 6z" fill="#ffffff"/>
<text x="1704.5" y="78.2" font-size="12.00" fill="#f0f0f0" textLength="118.5" lengthAdjust="spacingAndGlyphs" stroke="#f0f0f0" stroke-width="0.25">Direct Display Control</text>
<rect x="1859.5" y="65.5" width="38" height="31" rx="5" fill="url(#gb)" stroke="#b4b4b4" stroke-width="1.2"/>
<circle cx="1878.4" cy="81" r="11" fill="url(#gbc)"/>
<g transform="translate(1878.4 81)" fill="none" stroke="#dedede"><circle r="4.3" stroke-width="2.0"/><line x1="0" y1="-5.2" x2="0" y2="-7.5" stroke-width="2.2" transform="rotate(0)"/><line x1="0" y1="-5.2" x2="0" y2="-7.5" stroke-width="2.2" transform="rotate(45)"/><line x1="0" y1="-5.2" x2="0" y2="-7.5" stroke-width="2.2" transform="rotate(90)"/><line x1="0" y1="-5.2" x2="0" y2="-7.5" stroke-width="2.2" transform="rotate(135)"/><line x1="0" y1="-5.2" x2="0" y2="-7.5" stroke-width="2.2" transform="rotate(180)"/><line x1="0" y1="-5.2" x2="0" y2="-7.5" stroke-width="2.2" transform="rotate(225)"/><line x1="0" y1="-5.2" x2="0" y2="-7.5" stroke-width="2.2" transform="rotate(270)"/><line x1="0" y1="-5.2" x2="0" y2="-7.5" stroke-width="2.2" transform="rotate(315)"/></g>
<rect x="1899" y="65.5" width="30" height="31" rx="5" fill="url(#gb)" stroke="#b4b4b4" stroke-width="1.2"/>
<circle cx="1915" cy="81" r="11" fill="url(#gbc)"/>
<path d="M1916 75.3v10.6l-5.6-5.3z" fill="#ffffff"/>
<rect x="122.00" y="221.00" width="332.00" height="439.00" fill="#262626" />
<line x1="165.74" y1="221.00" x2="165.74" y2="660.00" stroke="#ababab" stroke-width="1.3" />
<line x1="209.89" y1="221.00" x2="209.89" y2="660.00" stroke="#ababab" stroke-width="1.3" />
<line x1="254.03" y1="221.00" x2="254.03" y2="660.00" stroke="#ababab" stroke-width="1.3" />
<line x1="298.17" y1="221.00" x2="298.17" y2="660.00" stroke="#ababab" stroke-width="1.3" />
<line x1="342.31" y1="221.00" x2="342.31" y2="660.00" stroke="#ababab" stroke-width="1.3" />
<line x1="386.46" y1="221.00" x2="386.46" y2="660.00" stroke="#ababab" stroke-width="1.3" />
<line x1="430.60" y1="221.00" x2="430.60" y2="660.00" stroke="#ababab" stroke-width="1.3" />
<line x1="116.00" y1="221.00" x2="454.00" y2="221.00" stroke="#ababab" stroke-width="1.3" />
<line x1="454.00" y1="221.00" x2="454.00" y2="660.00" stroke="#ababab" stroke-width="1.3" />
<line x1="116.00" y1="660.00" x2="454.00" y2="660.00" stroke="#c8c8c8" stroke-width="1.3" />
<line x1="121.70" y1="221.00" x2="121.70" y2="666.00" stroke="#c8c8c8" stroke-width="1.8" />
<line x1="121.60" y1="660.00" x2="121.60" y2="666.00" stroke="#c8c8c8" stroke-width="1.3" />
<text x="121.6" y="683.0" font-size="15.00" fill="#e4e4e4" text-anchor="middle" >0</text>
<line x1="165.74" y1="660.00" x2="165.74" y2="666.00" stroke="#c8c8c8" stroke-width="1.3" />
<text x="165.7" y="683.0" font-size="15.00" fill="#e4e4e4" text-anchor="middle" >2</text>
<line x1="209.89" y1="660.00" x2="209.89" y2="666.00" stroke="#c8c8c8" stroke-width="1.3" />
<text x="209.9" y="683.0" font-size="15.00" fill="#e4e4e4" text-anchor="middle" >4</text>
<line x1="254.03" y1="660.00" x2="254.03" y2="666.00" stroke="#c8c8c8" stroke-width="1.3" />
<text x="254.0" y="683.0" font-size="15.00" fill="#e4e4e4" text-anchor="middle" >6</text>
<line x1="298.17" y1="660.00" x2="298.17" y2="666.00" stroke="#c8c8c8" stroke-width="1.3" />
<text x="298.2" y="683.0" font-size="15.00" fill="#e4e4e4" text-anchor="middle" >8</text>
<line x1="342.31" y1="660.00" x2="342.31" y2="666.00" stroke="#c8c8c8" stroke-width="1.3" />
<text x="342.3" y="683.0" font-size="15.00" fill="#e4e4e4" text-anchor="middle" >10</text>
<line x1="386.46" y1="660.00" x2="386.46" y2="666.00" stroke="#c8c8c8" stroke-width="1.3" />
<text x="386.5" y="683.0" font-size="15.00" fill="#e4e4e4" text-anchor="middle" >12</text>
<line x1="430.60" y1="660.00" x2="430.60" y2="666.00" stroke="#c8c8c8" stroke-width="1.3" />
<text x="430.6" y="683.0" font-size="15.00" fill="#e4e4e4" text-anchor="middle" >14</text>
<line x1="116.00" y1="294.17" x2="122.00" y2="294.17" stroke="#c8c8c8" stroke-width="1.3" />
<line x1="116.00" y1="367.33" x2="122.00" y2="367.33" stroke="#c8c8c8" stroke-width="1.3" />
<line x1="116.00" y1="440.50" x2="122.00" y2="440.50" stroke="#c8c8c8" stroke-width="1.3" />
<line x1="116.00" y1="513.67" x2="122.00" y2="513.67" stroke="#c8c8c8" stroke-width="1.3" />
<line x1="116.00" y1="586.83" x2="122.00" y2="586.83" stroke="#c8c8c8" stroke-width="1.3" />
<text x="268.5" y="214.5" font-size="15.00" fill="#e4e4e4" text-anchor="middle" textLength="85.0" lengthAdjust="spacingAndGlyphs" >DeltaE 2000</text>
<text x="120.8" y="263.1" font-size="15.00" fill="#e4e4e4" text-anchor="end" >100%</text>
<text x="120.8" y="336.2" font-size="15.00" fill="#e4e4e4" text-anchor="end" >80%</text>
<text x="120.8" y="409.4" font-size="15.00" fill="#e4e4e4" text-anchor="end" >60%</text>
<text x="120.8" y="482.6" font-size="15.00" fill="#e4e4e4" text-anchor="end" >40%</text>
<text x="120.8" y="555.8" font-size="15.00" fill="#e4e4e4" text-anchor="end" >20%</text>
<text x="120.8" y="628.9" font-size="15.00" fill="#e4e4e4" text-anchor="end" >100</text>
<rect x="122.6" y="229.1" width="80.4" height="6.4" fill="url(#b0)" stroke="#000" stroke-width="1.7"/>
<rect x="123.2" y="229.7" width="79.2" height="5.2" fill="url(#gloss)"/>
<rect x="122.6" y="237.7" width="29.3" height="6.4" fill="url(#b1)" stroke="#000" stroke-width="1.7"/>
<rect x="123.2" y="238.3" width="28.1" height="5.2" fill="url(#gloss)"/>
<rect x="122.6" y="246.3" width="83.6" height="6.4" fill="url(#b2)" stroke="#000" stroke-width="1.7"/>
<rect x="123.2" y="246.9" width="82.4" height="5.2" fill="url(#gloss)"/>
<rect x="122.6" y="254.9" width="42.0" height="6.4" fill="url(#b3)" stroke="#000" stroke-width="1.7"/>
<rect x="123.2" y="255.5" width="40.8" height="5.2" fill="url(#gloss)"/>
<rect x="122.6" y="263.5" width="64.5" height="6.4" fill="url(#b4)" stroke="#000" stroke-width="1.7"/>
<rect x="123.2" y="264.1" width="63.3" height="5.2" fill="url(#gloss)"/>
<rect x="122.6" y="272.1" width="102.1" height="6.4" fill="url(#b5)" stroke="#000" stroke-width="1.7"/>
<rect x="123.2" y="272.7" width="100.9" height="5.2" fill="url(#gloss)"/>
<rect x="122.6" y="302.3" width="57.0" height="6.4" fill="url(#b6)" stroke="#000" stroke-width="1.7"/>
<rect x="123.2" y="302.9" width="55.8" height="5.2" fill="url(#gloss)"/>
<rect x="122.6" y="310.9" width="42.0" height="6.4" fill="url(#b7)" stroke="#000" stroke-width="1.7"/>
<rect x="123.2" y="311.5" width="40.8" height="5.2" fill="url(#gloss)"/>
<rect x="122.6" y="319.5" width="91.4" height="6.4" fill="url(#b8)" stroke="#000" stroke-width="1.7"/>
<rect x="123.2" y="320.1" width="90.2" height="5.2" fill="url(#gloss)"/>
<rect x="122.6" y="328.1" width="49.5" height="6.4" fill="url(#b9)" stroke="#000" stroke-width="1.7"/>
<rect x="123.2" y="328.7" width="48.3" height="5.2" fill="url(#gloss)"/>
<rect x="122.6" y="336.7" width="81.6" height="6.4" fill="url(#b10)" stroke="#000" stroke-width="1.7"/>
<rect x="123.2" y="337.3" width="80.4" height="5.2" fill="url(#gloss)"/>
<rect x="122.6" y="345.3" width="105.3" height="6.4" fill="url(#b11)" stroke="#000" stroke-width="1.7"/>
<rect x="123.2" y="345.9" width="104.1" height="5.2" fill="url(#gloss)"/>
<rect x="122.6" y="375.4" width="63.1" height="6.4" fill="url(#b12)" stroke="#000" stroke-width="1.7"/>
<rect x="123.2" y="376.0" width="61.9" height="5.2" fill="url(#gloss)"/>
<rect x="122.6" y="384.0" width="49.5" height="6.4" fill="url(#b13)" stroke="#000" stroke-width="1.7"/>
<rect x="123.2" y="384.6" width="48.3" height="5.2" fill="url(#gloss)"/>
<rect x="122.6" y="392.6" width="69.4" height="6.4" fill="url(#b14)" stroke="#000" stroke-width="1.7"/>
<rect x="123.2" y="393.2" width="68.2" height="5.2" fill="url(#gloss)"/>
<rect x="122.6" y="401.2" width="56.4" height="6.4" fill="url(#b15)" stroke="#000" stroke-width="1.7"/>
<rect x="123.2" y="401.8" width="55.2" height="5.2" fill="url(#gloss)"/>
<rect x="122.6" y="409.8" width="76.7" height="6.4" fill="url(#b16)" stroke="#000" stroke-width="1.7"/>
<rect x="123.2" y="410.4" width="75.5" height="5.2" fill="url(#gloss)"/>
<rect x="122.6" y="418.4" width="108.7" height="6.4" fill="url(#b17)" stroke="#000" stroke-width="1.7"/>
<rect x="123.2" y="419.0" width="107.5" height="5.2" fill="url(#gloss)"/>
<rect x="122.6" y="448.6" width="65.7" height="6.4" fill="url(#b18)" stroke="#000" stroke-width="1.7"/>
<rect x="123.2" y="449.2" width="64.5" height="5.2" fill="url(#gloss)"/>
<rect x="122.6" y="457.2" width="58.2" height="6.4" fill="url(#b19)" stroke="#000" stroke-width="1.7"/>
<rect x="123.2" y="457.8" width="57.0" height="5.2" fill="url(#gloss)"/>
<rect x="122.6" y="465.8" width="55.0" height="6.4" fill="url(#b20)" stroke="#000" stroke-width="1.7"/>
<rect x="123.2" y="466.4" width="53.8" height="5.2" fill="url(#gloss)"/>
<rect x="122.6" y="474.4" width="67.7" height="6.4" fill="url(#b21)" stroke="#000" stroke-width="1.7"/>
<rect x="123.2" y="475.0" width="66.5" height="5.2" fill="url(#gloss)"/>
<rect x="122.6" y="483.0" width="82.7" height="6.4" fill="url(#b22)" stroke="#000" stroke-width="1.7"/>
<rect x="123.2" y="483.6" width="81.5" height="5.2" fill="url(#gloss)"/>
<rect x="122.6" y="491.6" width="117.7" height="6.4" fill="url(#b23)" stroke="#000" stroke-width="1.7"/>
<rect x="123.2" y="492.2" width="116.5" height="5.2" fill="url(#gloss)"/>
<rect x="122.6" y="521.8" width="85.9" height="6.4" fill="url(#b24)" stroke="#000" stroke-width="1.7"/>
<rect x="123.2" y="522.4" width="84.7" height="5.2" fill="url(#gloss)"/>
<rect x="122.6" y="530.4" width="79.8" height="6.4" fill="url(#b25)" stroke="#000" stroke-width="1.7"/>
<rect x="123.2" y="531.0" width="78.6" height="5.2" fill="url(#gloss)"/>
<rect x="122.6" y="539.0" width="85.9" height="6.4" fill="url(#b26)" stroke="#000" stroke-width="1.7"/>
<rect x="123.2" y="539.6" width="84.7" height="5.2" fill="url(#gloss)"/>
<rect x="122.6" y="547.6" width="89.7" height="6.4" fill="url(#b27)" stroke="#000" stroke-width="1.7"/>
<rect x="123.2" y="548.2" width="88.5" height="5.2" fill="url(#gloss)"/>
<rect x="122.6" y="556.2" width="106.1" height="6.4" fill="url(#b28)" stroke="#000" stroke-width="1.7"/>
<rect x="123.2" y="556.8" width="104.9" height="5.2" fill="url(#gloss)"/>
<rect x="122.6" y="564.8" width="144.0" height="6.4" fill="url(#b29)" stroke="#000" stroke-width="1.7"/>
<rect x="123.2" y="565.4" width="142.8" height="5.2" fill="url(#gloss)"/>
<rect x="122.6" y="646.5" width="165.0" height="6.4" fill="url(#bw)" stroke="#000" stroke-width="1.3"/>
<rect x="510.70" y="149.30" width="153.50" height="336.30" fill="#262626" />
<line x1="510.70" y1="205.40" x2="664.20" y2="205.40" stroke="#ababab" stroke-width="1.2" />
<line x1="510.70" y1="261.45" x2="664.20" y2="261.45" stroke="#ababab" stroke-width="1.2" />
<line x1="510.70" y1="317.50" x2="664.20" y2="317.50" stroke="#ababab" stroke-width="1.2" />
<line x1="510.70" y1="373.55" x2="664.20" y2="373.55" stroke="#ababab" stroke-width="1.2" />
<line x1="510.70" y1="429.60" x2="664.20" y2="429.60" stroke="#ababab" stroke-width="1.2" />
<line x1="504.70" y1="149.30" x2="664.20" y2="149.30" stroke="#ababab" stroke-width="1.6" />
<line x1="664.20" y1="149.30" x2="664.20" y2="491.60" stroke="#ababab" stroke-width="1.3" />
<line x1="504.70" y1="485.60" x2="664.20" y2="485.60" stroke="#c8c8c8" stroke-width="1.4" />
<line x1="510.70" y1="149.30" x2="510.70" y2="491.60" stroke="#c8c8c8" stroke-width="1.4" />
<line x1="504.70" y1="149.35" x2="510.70" y2="149.35" stroke="#c8c8c8" stroke-width="1.3" />
<text x="503.2" y="154.8" font-size="15.00" fill="#e4e4e4" text-anchor="end" >15</text>
<line x1="504.70" y1="205.40" x2="510.70" y2="205.40" stroke="#c8c8c8" stroke-width="1.3" />
<text x="503.2" y="210.8" font-size="15.00" fill="#e4e4e4" text-anchor="end" >10</text>
<line x1="504.70" y1="261.45" x2="510.70" y2="261.45" stroke="#c8c8c8" stroke-width="1.3" />
<text x="503.2" y="266.8" font-size="15.00" fill="#e4e4e4" text-anchor="end" >5</text>
<line x1="504.70" y1="317.50" x2="510.70" y2="317.50" stroke="#c8c8c8" stroke-width="1.3" />
<text x="503.2" y="322.9" font-size="15.00" fill="#e4e4e4" text-anchor="end" >0</text>
<line x1="504.70" y1="373.55" x2="510.70" y2="373.55" stroke="#c8c8c8" stroke-width="1.3" />
<text x="503.2" y="378.9" font-size="15.00" fill="#e4e4e4" text-anchor="end" >-5</text>
<line x1="504.70" y1="429.60" x2="510.70" y2="429.60" stroke="#c8c8c8" stroke-width="1.3" />
<text x="503.2" y="435.0" font-size="15.00" fill="#e4e4e4" text-anchor="end" >-10</text>
<line x1="504.70" y1="485.65" x2="510.70" y2="485.65" stroke="#c8c8c8" stroke-width="1.3" />
<text x="503.2" y="491.0" font-size="15.00" fill="#e4e4e4" text-anchor="end" >-15</text>
<text x="573.3" y="142.9" font-size="15.00" fill="#e4e4e4" text-anchor="middle" textLength="47.5" lengthAdjust="spacingAndGlyphs" >Delta L</text>
<text x="587.5" y="502.2" font-size="15.00" fill="#e4e4e4" text-anchor="middle" >100%</text>
<rect x="526.4" y="317.5" width="121.9" height="4.1" fill="url(#ybar2)" stroke="#000" stroke-width="1.3"/>
<rect x="720.70" y="149.30" width="153.50" height="336.30" fill="#262626" />
<line x1="720.70" y1="205.40" x2="874.20" y2="205.40" stroke="#ababab" stroke-width="1.2" />
<line x1="720.70" y1="261.45" x2="874.20" y2="261.45" stroke="#ababab" stroke-width="1.2" />
<line x1="720.70" y1="317.50" x2="874.20" y2="317.50" stroke="#ababab" stroke-width="1.2" />
<line x1="720.70" y1="373.55" x2="874.20" y2="373.55" stroke="#ababab" stroke-width="1.2" />
<line x1="720.70" y1="429.60" x2="874.20" y2="429.60" stroke="#ababab" stroke-width="1.2" />
<line x1="714.70" y1="149.30" x2="874.20" y2="149.30" stroke="#ababab" stroke-width="1.6" />
<line x1="874.20" y1="149.30" x2="874.20" y2="491.60" stroke="#ababab" stroke-width="1.3" />
<line x1="714.70" y1="485.60" x2="874.20" y2="485.60" stroke="#c8c8c8" stroke-width="1.4" />
<line x1="720.70" y1="149.30" x2="720.70" y2="491.60" stroke="#c8c8c8" stroke-width="1.4" />
<line x1="714.70" y1="149.35" x2="720.70" y2="149.35" stroke="#c8c8c8" stroke-width="1.3" />
<text x="713.2" y="154.8" font-size="15.00" fill="#e4e4e4" text-anchor="end" >15</text>
<line x1="714.70" y1="205.40" x2="720.70" y2="205.40" stroke="#c8c8c8" stroke-width="1.3" />
<text x="713.2" y="210.8" font-size="15.00" fill="#e4e4e4" text-anchor="end" >10</text>
<line x1="714.70" y1="261.45" x2="720.70" y2="261.45" stroke="#c8c8c8" stroke-width="1.3" />
<text x="713.2" y="266.8" font-size="15.00" fill="#e4e4e4" text-anchor="end" >5</text>
<line x1="714.70" y1="317.50" x2="720.70" y2="317.50" stroke="#c8c8c8" stroke-width="1.3" />
<text x="713.2" y="322.9" font-size="15.00" fill="#e4e4e4" text-anchor="end" >0</text>
<line x1="714.70" y1="373.55" x2="720.70" y2="373.55" stroke="#c8c8c8" stroke-width="1.3" />
<text x="713.2" y="378.9" font-size="15.00" fill="#e4e4e4" text-anchor="end" >-5</text>
<line x1="714.70" y1="429.60" x2="720.70" y2="429.60" stroke="#c8c8c8" stroke-width="1.3" />
<text x="713.2" y="435.0" font-size="15.00" fill="#e4e4e4" text-anchor="end" >-10</text>
<line x1="714.70" y1="485.65" x2="720.70" y2="485.65" stroke="#c8c8c8" stroke-width="1.3" />
<text x="713.2" y="491.0" font-size="15.00" fill="#e4e4e4" text-anchor="end" >-15</text>
<text x="783.3" y="142.9" font-size="15.00" fill="#e4e4e4" text-anchor="middle" textLength="47.5" lengthAdjust="spacingAndGlyphs" >Delta C</text>
<text x="797.5" y="502.2" font-size="15.00" fill="#e4e4e4" text-anchor="middle" >100%</text>
<rect x="736.4" y="297.9" width="121.9" height="19.6" fill="url(#ybar2)" stroke="#000" stroke-width="1.3"/>
<rect x="930.70" y="149.30" width="153.90" height="336.30" fill="#262626" />
<line x1="930.70" y1="205.40" x2="1084.60" y2="205.40" stroke="#ababab" stroke-width="1.2" />
<line x1="930.70" y1="261.45" x2="1084.60" y2="261.45" stroke="#ababab" stroke-width="1.2" />
<line x1="930.70" y1="317.50" x2="1084.60" y2="317.50" stroke="#ababab" stroke-width="1.2" />
<line x1="930.70" y1="373.55" x2="1084.60" y2="373.55" stroke="#ababab" stroke-width="1.2" />
<line x1="930.70" y1="429.60" x2="1084.60" y2="429.60" stroke="#ababab" stroke-width="1.2" />
<line x1="924.70" y1="149.30" x2="1084.60" y2="149.30" stroke="#ababab" stroke-width="1.6" />
<line x1="1084.60" y1="149.30" x2="1084.60" y2="491.60" stroke="#ababab" stroke-width="1.3" />
<line x1="924.70" y1="485.60" x2="1084.60" y2="485.60" stroke="#c8c8c8" stroke-width="1.4" />
<line x1="930.70" y1="149.30" x2="930.70" y2="491.60" stroke="#c8c8c8" stroke-width="1.4" />
<line x1="924.70" y1="149.35" x2="930.70" y2="149.35" stroke="#c8c8c8" stroke-width="1.3" />
<text x="923.2" y="154.8" font-size="15.00" fill="#e4e4e4" text-anchor="end" >15</text>
<line x1="924.70" y1="205.40" x2="930.70" y2="205.40" stroke="#c8c8c8" stroke-width="1.3" />
<text x="923.2" y="210.8" font-size="15.00" fill="#e4e4e4" text-anchor="end" >10</text>
<line x1="924.70" y1="261.45" x2="930.70" y2="261.45" stroke="#c8c8c8" stroke-width="1.3" />
<text x="923.2" y="266.8" font-size="15.00" fill="#e4e4e4" text-anchor="end" >5</text>
<line x1="924.70" y1="317.50" x2="930.70" y2="317.50" stroke="#c8c8c8" stroke-width="1.3" />
<text x="923.2" y="322.9" font-size="15.00" fill="#e4e4e4" text-anchor="end" >0</text>
<line x1="924.70" y1="373.55" x2="930.70" y2="373.55" stroke="#c8c8c8" stroke-width="1.3" />
<text x="923.2" y="378.9" font-size="15.00" fill="#e4e4e4" text-anchor="end" >-5</text>
<line x1="924.70" y1="429.60" x2="930.70" y2="429.60" stroke="#c8c8c8" stroke-width="1.3" />
<text x="923.2" y="435.0" font-size="15.00" fill="#e4e4e4" text-anchor="end" >-10</text>
<line x1="924.70" y1="485.65" x2="930.70" y2="485.65" stroke="#c8c8c8" stroke-width="1.3" />
<text x="923.2" y="491.0" font-size="15.00" fill="#e4e4e4" text-anchor="end" >-15</text>
<text x="993.3" y="142.9" font-size="15.00" fill="#e4e4e4" text-anchor="middle" textLength="47.5" lengthAdjust="spacingAndGlyphs" >Delta H</text>
<text x="1007.6" y="502.2" font-size="15.00" fill="#e4e4e4" text-anchor="middle" >100%</text>
<rect x="946.4" y="214.4" width="122.3" height="103.1" fill="url(#ybar)" stroke="#000" stroke-width="1.3"/>
<rect x="475.10" y="520.20" width="630.00" height="173.30" fill="#000000" />
<rect x="497.10" y="528.10" width="106.10" height="70.50" fill="#b0c4ac" />
<rect x="497.10" y="597.60" width="106.10" height="71.40" fill="#c2c2a6" />
<rect x="497.6" y="528.6" width="105.1" height="139.9" fill="none" stroke="#ffffff" stroke-width="1.1"/>
<text x="550.1" y="684.9" font-size="12.20" fill="#ffffff" text-anchor="middle" >20%</text>
<rect x="620.90" y="528.10" width="106.10" height="70.50" fill="#b0c490" />
<rect x="620.90" y="597.60" width="106.10" height="71.40" fill="#c2c086" />
<rect x="621.4" y="528.6" width="105.1" height="139.9" fill="none" stroke="#ffffff" stroke-width="1.1"/>
<text x="673.9" y="684.9" font-size="12.20" fill="#ffffff" text-anchor="middle" >40%</text>
<rect x="743.60" y="528.10" width="106.10" height="70.50" fill="#b0c46e" />
<rect x="743.60" y="597.60" width="106.10" height="71.40" fill="#c2be6c" />
<rect x="744.1" y="528.6" width="105.1" height="139.9" fill="none" stroke="#ffffff" stroke-width="1.1"/>
<text x="796.6" y="684.9" font-size="12.20" fill="#ffffff" text-anchor="middle" >60%</text>
<rect x="866.40" y="528.10" width="106.10" height="70.50" fill="#b0c24c" />
<rect x="866.40" y="597.60" width="106.10" height="71.40" fill="#c2be4a" />
<rect x="866.9" y="528.6" width="105.1" height="139.9" fill="none" stroke="#ffffff" stroke-width="1.1"/>
<text x="919.4" y="684.9" font-size="12.20" fill="#ffffff" text-anchor="middle" >80%</text>
<rect x="990.00" y="528.10" width="106.10" height="70.50" fill="#b2c408" />
<rect x="990.00" y="597.60" width="106.10" height="71.40" fill="#c4c000" />
<rect x="990.5" y="528.6" width="105.1" height="139.9" fill="none" stroke="#ffffff" stroke-width="1.1"/>
<text x="1043.0" y="684.9" font-size="12.20" fill="#ffffff" text-anchor="middle" >100%</text>
<text transform="translate(488.8 577) rotate(-90)" font-size="12.2" fill="#ffffff" textLength="36" lengthAdjust="spacingAndGlyphs">Actual</text>
<text transform="translate(488.8 656.2) rotate(-90)" font-size="12.2" fill="#ffffff" textLength="36.2" lengthAdjust="spacingAndGlyphs">Target</text>
<rect x="1116.3" y="118.3" width="732.1" height="586.1" fill="#333333" stroke="#c8c608" stroke-width="7.8"/>
<rect x="1150.70" y="146.80" width="690.20" height="522.90" fill="#262626" />
<text x="1482.0" y="141.0" font-size="15.00" fill="#e4e4e4" text-anchor="middle" textLength="81.0" lengthAdjust="spacingAndGlyphs" >CIE 1931 xy</text>
<g clip-path="url(#clocus)"><g filter="url(#vblur)"><rect x="1150.7" y="146.8" width="690.2" height="5.6" fill="url(#co0)"/><rect x="1150.7" y="151.8" width="690.2" height="5.6" fill="url(#co1)"/><rect x="1150.7" y="156.8" width="690.2" height="5.6" fill="url(#co2)"/><rect x="1150.7" y="161.8" width="690.2" height="5.6" fill="url(#co3)"/><rect x="1150.7" y="166.8" width="690.2" height="5.6" fill="url(#co4)"/><rect x="1150.7" y="171.8" width="690.2" height="5.6" fill="url(#co5)"/><rect x="1150.7" y="176.8" width="690.2" height="5.6" fill="url(#co6)"/><rect x="1150.7" y="181.8" width="690.2" height="5.6" fill="url(#co7)"/><rect x="1150.7" y="186.8" width="690.2" height="5.6" fill="url(#co8)"/><rect x="1150.7" y="191.8" width="690.2" height="5.6" fill="url(#co9)"/><rect x="1150.7" y="196.8" width="690.2" height="5.6" fill="url(#co10)"/><rect x="1150.7" y="201.8" width="690.2" height="5.6" fill="url(#co11)"/><rect x="1150.7" y="206.8" width="690.2" height="5.6" fill="url(#co12)"/><rect x="1150.7" y="211.8" width="690.2" height="5.6" fill="url(#co13)"/><rect x="1150.7" y="216.8" width="690.2" height="5.6" fill="url(#co14)"/><rect x="1150.7" y="221.8" width="690.2" height="5.6" fill="url(#co15)"/><rect x="1150.7" y="226.8" width="690.2" height="5.6" fill="url(#co16)"/><rect x="1150.7" y="231.8" width="690.2" height="5.6" fill="url(#co17)"/><rect x="1150.7" y="236.8" width="690.2" height="5.6" fill="url(#co18)"/><rect x="1150.7" y="241.8" width="690.2" height="5.6" fill="url(#co19)"/><rect x="1150.7" y="246.8" width="690.2" height="5.6" fill="url(#co20)"/><rect x="1150.7" y="251.8" width="690.2" height="5.6" fill="url(#co21)"/><rect x="1150.7" y="256.8" width="690.2" height="5.6" fill="url(#co22)"/><rect x="1150.7" y="261.8" width="690.2" height="5.6" fill="url(#co23)"/><rect x="1150.7" y="266.8" width="690.2" height="5.6" fill="url(#co24)"/><rect x="1150.7" y="271.8" width="690.2" height="5.6" fill="url(#co25)"/><rect x="1150.7" y="276.8" width="690.2" height="5.6" fill="url(#co26)"/><rect x="1150.7" y="281.8" width="690.2" height="5.6" fill="url(#co27)"/><rect x="1150.7" y="286.8" width="690.2" height="5.6" fill="url(#co28)"/><rect x="1150.7" y="291.8" width="690.2" height="5.6" fill="url(#co29)"/><rect x="1150.7" y="296.8" width="690.2" height="5.6" fill="url(#co30)"/><rect x="1150.7" y="301.8" width="690.2" height="5.6" fill="url(#co31)"/><rect x="1150.7" y="306.8" width="690.2" height="5.6" fill="url(#co32)"/><rect x="1150.7" y="311.8" width="690.2" height="5.6" fill="url(#co33)"/><rect x="1150.7" y="316.8" width="690.2" height="5.6" fill="url(#co34)"/><rect x="1150.7" y="321.8" width="690.2" height="5.6" fill="url(#co35)"/><rect x="1150.7" y="326.8" width="690.2" height="5.6" fill="url(#co36)"/><rect x="1150.7" y="331.8" width="690.2" height="5.6" fill="url(#co37)"/><rect x="1150.7" y="336.8" width="690.2" height="5.6" fill="url(#co38)"/><rect x="1150.7" y="341.8" width="690.2" height="5.6" fill="url(#co39)"/><rect x="1150.7" y="346.8" width="690.2" height="5.6" fill="url(#co40)"/><rect x="1150.7" y="351.8" width="690.2" height="5.6" fill="url(#co41)"/><rect x="1150.7" y="356.8" width="690.2" height="5.6" fill="url(#co42)"/><rect x="1150.7" y="361.8" width="690.2" height="5.6" fill="url(#co43)"/><rect x="1150.7" y="366.8" width="690.2" height="5.6" fill="url(#co44)"/><rect x="1150.7" y="371.8" width="690.2" height="5.6" fill="url(#co45)"/><rect x="1150.7" y="376.8" width="690.2" height="5.6" fill="url(#co46)"/><rect x="1150.7" y="381.8" width="690.2" height="5.6" fill="url(#co47)"/><rect x="1150.7" y="386.8" width="690.2" height="5.6" fill="url(#co48)"/><rect x="1150.7" y="391.8" width="690.2" height="5.6" fill="url(#co49)"/><rect x="1150.7" y="396.8" width="690.2" height="5.6" fill="url(#co50)"/><rect x="1150.7" y="401.8" width="690.2" height="5.6" fill="url(#co51)"/><rect x="1150.7" y="406.8" width="690.2" height="5.6" fill="url(#co52)"/><rect x="1150.7" y="411.8" width="690.2" height="5.6" fill="url(#co53)"/><rect x="1150.7" y="416.8" width="690.2" height="5.6" fill="url(#co54)"/><rect x="1150.7" y="421.8" width="690.2" height="5.6" fill="url(#co55)"/><rect x="1150.7" y="426.8" width="690.2" height="5.6" fill="url(#co56)"/><rect x="1150.7" y="431.8" width="690.2" height="5.6" fill="url(#co57)"/><rect x="1150.7" y="436.8" width="690.2" height="5.6" fill="url(#co58)"/><rect x="1150.7" y="441.8" width="690.2" height="5.6" fill="url(#co59)"/><rect x="1150.7" y="446.8" width="690.2" height="5.6" fill="url(#co60)"/><rect x="1150.7" y="451.8" width="690.2" height="5.6" fill="url(#co61)"/><rect x="1150.7" y="456.8" width="690.2" height="5.6" fill="url(#co62)"/><rect x="1150.7" y="461.8" width="690.2" height="5.6" fill="url(#co63)"/><rect x="1150.7" y="466.8" width="690.2" height="5.6" fill="url(#co64)"/><rect x="1150.7" y="471.8" width="690.2" height="5.6" fill="url(#co65)"/><rect x="1150.7" y="476.8" width="690.2" height="5.6" fill="url(#co66)"/><rect x="1150.7" y="481.8" width="690.2" height="5.6" fill="url(#co67)"/><rect x="1150.7" y="486.8" width="690.2" height="5.6" fill="url(#co68)"/><rect x="1150.7" y="491.8" width="690.2" height="5.6" fill="url(#co69)"/><rect x="1150.7" y="496.8" width="690.2" height="5.6" fill="url(#co70)"/><rect x="1150.7" y="501.8" width="690.2" height="5.6" fill="url(#co71)"/><rect x="1150.7" y="506.8" width="690.2" height="5.6" fill="url(#co72)"/><rect x="1150.7" y="511.8" width="690.2" height="5.6" fill="url(#co73)"/><rect x="1150.7" y="516.8" width="690.2" height="5.6" fill="url(#co74)"/><rect x="1150.7" y="521.8" width="690.2" height="5.6" fill="url(#co75)"/><rect x="1150.7" y="526.8" width="690.2" height="5.6" fill="url(#co76)"/><rect x="1150.7" y="531.8" width="690.2" height="5.6" fill="url(#co77)"/><rect x="1150.7" y="536.8" width="690.2" height="5.6" fill="url(#co78)"/><rect x="1150.7" y="541.8" width="690.2" height="5.6" fill="url(#co79)"/><rect x="1150.7" y="546.8" width="690.2" height="5.6" fill="url(#co80)"/><rect x="1150.7" y="551.8" width="690.2" height="5.6" fill="url(#co81)"/><rect x="1150.7" y="556.8" width="690.2" height="5.6" fill="url(#co82)"/><rect x="1150.7" y="561.8" width="690.2" height="5.6" fill="url(#co83)"/><rect x="1150.7" y="566.8" width="690.2" height="5.6" fill="url(#co84)"/><rect x="1150.7" y="571.8" width="690.2" height="5.6" fill="url(#co85)"/><rect x="1150.7" y="576.8" width="690.2" height="5.6" fill="url(#co86)"/><rect x="1150.7" y="581.8" width="690.2" height="5.6" fill="url(#co87)"/><rect x="1150.7" y="586.8" width="690.2" height="5.6" fill="url(#co88)"/><rect x="1150.7" y="591.8" width="690.2" height="5.6" fill="url(#co89)"/><rect x="1150.7" y="596.8" width="690.2" height="5.6" fill="url(#co90)"/><rect x="1150.7" y="601.8" width="690.2" height="5.6" fill="url(#co91)"/><rect x="1150.7" y="606.8" width="690.2" height="5.6" fill="url(#co92)"/><rect x="1150.7" y="611.8" width="690.2" height="5.6" fill="url(#co93)"/><rect x="1150.7" y="616.8" width="690.2" height="5.6" fill="url(#co94)"/><rect x="1150.7" y="621.8" width="690.2" height="5.6" fill="url(#co95)"/><rect x="1150.7" y="626.8" width="690.2" height="5.6" fill="url(#co96)"/><rect x="1150.7" y="631.8" width="690.2" height="5.6" fill="url(#co97)"/><rect x="1150.7" y="636.8" width="690.2" height="5.6" fill="url(#co98)"/><rect x="1150.7" y="641.8" width="690.2" height="5.6" fill="url(#co99)"/><rect x="1150.7" y="646.8" width="690.2" height="5.6" fill="url(#co100)"/><rect x="1150.7" y="651.8" width="690.2" height="5.6" fill="url(#co101)"/><rect x="1150.7" y="656.8" width="690.2" height="5.6" fill="url(#co102)"/><rect x="1150.7" y="661.8" width="690.2" height="5.6" fill="url(#co103)"/><rect x="1150.7" y="666.8" width="690.2" height="3.5" fill="url(#co104)"/></g><g clip-path="url(#ctri)"><g filter="url(#vblur)"><rect x="1150.7" y="288.9" width="690.2" height="4.6" fill="url(#ci0)"/><rect x="1150.7" y="292.9" width="690.2" height="4.6" fill="url(#ci1)"/><rect x="1150.7" y="296.9" width="690.2" height="4.6" fill="url(#ci2)"/><rect x="1150.7" y="300.9" width="690.2" height="4.6" fill="url(#ci3)"/><rect x="1150.7" y="304.9" width="690.2" height="4.6" fill="url(#ci4)"/><rect x="1150.7" y="308.9" width="690.2" height="4.6" fill="url(#ci5)"/><rect x="1150.7" y="312.9" width="690.2" height="4.6" fill="url(#ci6)"/><rect x="1150.7" y="316.9" width="690.2" height="4.6" fill="url(#ci7)"/><rect x="1150.7" y="320.9" width="690.2" height="4.6" fill="url(#ci8)"/><rect x="1150.7" y="324.9" width="690.2" height="4.6" fill="url(#ci9)"/><rect x="1150.7" y="328.9" width="690.2" height="4.6" fill="url(#ci10)"/><rect x="1150.7" y="332.9" width="690.2" height="4.6" fill="url(#ci11)"/><rect x="1150.7" y="336.9" width="690.2" height="4.6" fill="url(#ci12)"/><rect x="1150.7" y="340.9" width="690.2" height="4.6" fill="url(#ci13)"/><rect x="1150.7" y="344.9" width="690.2" height="4.6" fill="url(#ci14)"/><rect x="1150.7" y="348.9" width="690.2" height="4.6" fill="url(#ci15)"/><rect x="1150.7" y="352.9" width="690.2" height="4.6" fill="url(#ci16)"/><rect x="1150.7" y="356.9" width="690.2" height="4.6" fill="url(#ci17)"/><rect x="1150.7" y="360.9" width="690.2" height="4.6" fill="url(#ci18)"/><rect x="1150.7" y="364.9" width="690.2" height="4.6" fill="url(#ci19)"/><rect x="1150.7" y="368.9" width="690.2" height="4.6" fill="url(#ci20)"/><rect x="1150.7" y="372.9" width="690.2" height="4.6" fill="url(#ci21)"/><rect x="1150.7" y="376.9" width="690.2" height="4.6" fill="url(#ci22)"/><rect x="1150.7" y="380.9" width="690.2" height="4.6" fill="url(#ci23)"/><rect x="1150.7" y="384.9" width="690.2" height="4.6" fill="url(#ci24)"/><rect x="1150.7" y="388.9" width="690.2" height="4.6" fill="url(#ci25)"/><rect x="1150.7" y="392.9" width="690.2" height="4.6" fill="url(#ci26)"/><rect x="1150.7" y="396.9" width="690.2" height="4.6" fill="url(#ci27)"/><rect x="1150.7" y="400.9" width="690.2" height="4.6" fill="url(#ci28)"/><rect x="1150.7" y="404.9" width="690.2" height="4.6" fill="url(#ci29)"/><rect x="1150.7" y="408.9" width="690.2" height="4.6" fill="url(#ci30)"/><rect x="1150.7" y="412.9" width="690.2" height="4.6" fill="url(#ci31)"/><rect x="1150.7" y="416.9" width="690.2" height="4.6" fill="url(#ci32)"/><rect x="1150.7" y="420.9" width="690.2" height="4.6" fill="url(#ci33)"/><rect x="1150.7" y="424.9" width="690.2" height="4.6" fill="url(#ci34)"/><rect x="1150.7" y="428.9" width="690.2" height="4.6" fill="url(#ci35)"/><rect x="1150.7" y="432.9" width="690.2" height="4.6" fill="url(#ci36)"/><rect x="1150.7" y="436.9" width="690.2" height="4.6" fill="url(#ci37)"/><rect x="1150.7" y="440.9" width="690.2" height="4.6" fill="url(#ci38)"/><rect x="1150.7" y="444.9" width="690.2" height="4.6" fill="url(#ci39)"/><rect x="1150.7" y="448.9" width="690.2" height="4.6" fill="url(#ci40)"/><rect x="1150.7" y="452.9" width="690.2" height="4.6" fill="url(#ci41)"/><rect x="1150.7" y="456.9" width="690.2" height="4.6" fill="url(#ci42)"/><rect x="1150.7" y="460.9" width="690.2" height="4.6" fill="url(#ci43)"/><rect x="1150.7" y="464.9" width="690.2" height="4.6" fill="url(#ci44)"/><rect x="1150.7" y="468.9" width="690.2" height="4.6" fill="url(#ci45)"/><rect x="1150.7" y="472.9" width="690.2" height="4.6" fill="url(#ci46)"/><rect x="1150.7" y="476.9" width="690.2" height="4.6" fill="url(#ci47)"/><rect x="1150.7" y="480.9" width="690.2" height="4.6" fill="url(#ci48)"/><rect x="1150.7" y="484.9" width="690.2" height="4.6" fill="url(#ci49)"/><rect x="1150.7" y="488.9" width="690.2" height="4.6" fill="url(#ci50)"/><rect x="1150.7" y="492.9" width="690.2" height="4.6" fill="url(#ci51)"/><rect x="1150.7" y="496.9" width="690.2" height="4.6" fill="url(#ci52)"/><rect x="1150.7" y="500.9" width="690.2" height="4.6" fill="url(#ci53)"/><rect x="1150.7" y="504.9" width="690.2" height="4.6" fill="url(#ci54)"/><rect x="1150.7" y="508.9" width="690.2" height="4.6" fill="url(#ci55)"/><rect x="1150.7" y="512.9" width="690.2" height="4.6" fill="url(#ci56)"/><rect x="1150.7" y="516.9" width="690.2" height="4.6" fill="url(#ci57)"/><rect x="1150.7" y="520.9" width="690.2" height="4.6" fill="url(#ci58)"/><rect x="1150.7" y="524.9" width="690.2" height="4.6" fill="url(#ci59)"/><rect x="1150.7" y="528.9" width="690.2" height="4.6" fill="url(#ci60)"/><rect x="1150.7" y="532.9" width="690.2" height="4.6" fill="url(#ci61)"/><rect x="1150.7" y="536.9" width="690.2" height="4.6" fill="url(#ci62)"/><rect x="1150.7" y="540.9" width="690.2" height="4.6" fill="url(#ci63)"/><rect x="1150.7" y="544.9" width="690.2" height="4.6" fill="url(#ci64)"/><rect x="1150.7" y="548.9" width="690.2" height="4.6" fill="url(#ci65)"/><rect x="1150.7" y="552.9" width="690.2" height="4.6" fill="url(#ci66)"/><rect x="1150.7" y="556.9" width="690.2" height="4.6" fill="url(#ci67)"/><rect x="1150.7" y="560.9" width="690.2" height="4.6" fill="url(#ci68)"/><rect x="1150.7" y="564.9" width="690.2" height="4.6" fill="url(#ci69)"/><rect x="1150.7" y="568.9" width="690.2" height="4.6" fill="url(#ci70)"/><rect x="1150.7" y="572.9" width="690.2" height="4.6" fill="url(#ci71)"/><rect x="1150.7" y="576.9" width="690.2" height="4.6" fill="url(#ci72)"/><rect x="1150.7" y="580.9" width="690.2" height="4.6" fill="url(#ci73)"/><rect x="1150.7" y="584.9" width="690.2" height="4.6" fill="url(#ci74)"/><rect x="1150.7" y="588.9" width="690.2" height="4.6" fill="url(#ci75)"/><rect x="1150.7" y="592.9" width="690.2" height="4.6" fill="url(#ci76)"/><rect x="1150.7" y="596.9" width="690.2" height="4.6" fill="url(#ci77)"/><rect x="1150.7" y="600.9" width="690.2" height="4.6" fill="url(#ci78)"/><rect x="1150.7" y="604.9" width="690.2" height="4.6" fill="url(#ci79)"/><rect x="1150.7" y="608.9" width="690.2" height="4.6" fill="url(#ci80)"/><rect x="1150.7" y="612.9" width="690.2" height="4.6" fill="url(#ci81)"/><rect x="1150.7" y="616.9" width="690.2" height="4.6" fill="url(#ci82)"/><rect x="1150.7" y="620.9" width="690.2" height="4.6" fill="url(#ci83)"/><rect x="1150.7" y="624.9" width="690.2" height="4.6" fill="url(#ci84)"/><rect x="1150.7" y="628.9" width="690.2" height="4.6" fill="url(#ci85)"/><rect x="1150.7" y="632.9" width="690.2" height="4.6" fill="url(#ci86)"/><rect x="1150.7" y="636.9" width="690.2" height="4.2" fill="url(#ci87)"/></g></g></g>
<line x1="1150.70" y1="146.80" x2="1840.90" y2="146.80" stroke="#ababab" stroke-width="1.5" />
<line x1="1840.90" y1="146.80" x2="1840.90" y2="669.70" stroke="#ababab" stroke-width="1.4" />
<line x1="1150.70" y1="146.80" x2="1150.70" y2="676.70" stroke="#c8c8c8" stroke-width="1.5" />
<line x1="1144.70" y1="669.70" x2="1840.90" y2="669.70" stroke="#c8c8c8" stroke-width="1.5" />
<line x1="1150.70" y1="669.70" x2="1150.70" y2="676.70" stroke="#c8c8c8" stroke-width="1.4" />
<text x="1150.7" y="692.5" font-size="15.00" fill="#e4e4e4" text-anchor="middle" >0</text>
<line x1="1144.70" y1="669.80" x2="1150.70" y2="669.80" stroke="#c8c8c8" stroke-width="1.4" />
<text x="1144.1" y="675.2" font-size="15.00" fill="#e4e4e4" text-anchor="end" >0</text>
<line x1="1232.81" y1="669.70" x2="1232.81" y2="676.70" stroke="#c8c8c8" stroke-width="1.4" />
<text x="1232.8" y="692.5" font-size="15.00" fill="#e4e4e4" text-anchor="middle" >0,1</text>
<line x1="1144.70" y1="607.65" x2="1150.70" y2="607.65" stroke="#c8c8c8" stroke-width="1.4" />
<text x="1144.1" y="613.0" font-size="15.00" fill="#e4e4e4" text-anchor="end" >0,1</text>
<line x1="1314.92" y1="669.70" x2="1314.92" y2="676.70" stroke="#c8c8c8" stroke-width="1.4" />
<text x="1314.9" y="692.5" font-size="15.00" fill="#e4e4e4" text-anchor="middle" >0,2</text>
<line x1="1144.70" y1="545.50" x2="1150.70" y2="545.50" stroke="#c8c8c8" stroke-width="1.4" />
<text x="1144.1" y="550.9" font-size="15.00" fill="#e4e4e4" text-anchor="end" >0,2</text>
<line x1="1397.03" y1="669.70" x2="1397.03" y2="676.70" stroke="#c8c8c8" stroke-width="1.4" />
<text x="1397.0" y="692.5" font-size="15.00" fill="#e4e4e4" text-anchor="middle" >0,3</text>
<line x1="1144.70" y1="483.35" x2="1150.70" y2="483.35" stroke="#c8c8c8" stroke-width="1.4" />
<text x="1144.1" y="488.7" font-size="15.00" fill="#e4e4e4" text-anchor="end" >0,3</text>
<line x1="1479.14" y1="669.70" x2="1479.14" y2="676.70" stroke="#c8c8c8" stroke-width="1.4" />
<text x="1479.1" y="692.5" font-size="15.00" fill="#e4e4e4" text-anchor="middle" >0,4</text>
<line x1="1144.70" y1="421.20" x2="1150.70" y2="421.20" stroke="#c8c8c8" stroke-width="1.4" />
<text x="1144.1" y="426.6" font-size="15.00" fill="#e4e4e4" text-anchor="end" >0,4</text>
<line x1="1561.25" y1="669.70" x2="1561.25" y2="676.70" stroke="#c8c8c8" stroke-width="1.4" />
<text x="1561.2" y="692.5" font-size="15.00" fill="#e4e4e4" text-anchor="middle" >0,5</text>
<line x1="1144.70" y1="359.05" x2="1150.70" y2="359.05" stroke="#c8c8c8" stroke-width="1.4" />
<text x="1144.1" y="364.4" font-size="15.00" fill="#e4e4e4" text-anchor="end" >0,5</text>
<line x1="1643.36" y1="669.70" x2="1643.36" y2="676.70" stroke="#c8c8c8" stroke-width="1.4" />
<text x="1643.4" y="692.5" font-size="15.00" fill="#e4e4e4" text-anchor="middle" >0,6</text>
<line x1="1144.70" y1="296.90" x2="1150.70" y2="296.90" stroke="#c8c8c8" stroke-width="1.4" />
<text x="1144.1" y="302.3" font-size="15.00" fill="#e4e4e4" text-anchor="end" >0,6</text>
<line x1="1725.47" y1="669.70" x2="1725.47" y2="676.70" stroke="#c8c8c8" stroke-width="1.4" />
<text x="1725.5" y="692.5" font-size="15.00" fill="#e4e4e4" text-anchor="middle" >0,7</text>
<line x1="1144.70" y1="234.75" x2="1150.70" y2="234.75" stroke="#c8c8c8" stroke-width="1.4" />
<text x="1144.1" y="240.2" font-size="15.00" fill="#e4e4e4" text-anchor="end" >0,7</text>
<line x1="1807.58" y1="669.70" x2="1807.58" y2="676.70" stroke="#c8c8c8" stroke-width="1.4" />
<text x="1807.6" y="692.5" font-size="15.00" fill="#e4e4e4" text-anchor="middle" >0,8</text>
<line x1="1144.70" y1="172.60" x2="1150.70" y2="172.60" stroke="#c8c8c8" stroke-width="1.4" />
<text x="1144.1" y="178.0" font-size="15.00" fill="#e4e4e4" text-anchor="end" >0,8</text>
<g fill="none" stroke="#ffffff" stroke-opacity="0.92" stroke-width="1.7"><rect x="1386.5" y="456.5" width="13.6" height="13.6"/><rect x="1372.6" y="456.5" width="13.6" height="13.6"/><rect x="1357.8" y="456.5" width="13.6" height="13.6"/><rect x="1342.8" y="456.5" width="13.6" height="13.6"/><rect x="1327.8" y="456.5" width="13.6" height="13.6"/><rect x="1452.8" y="456.5" width="13.6" height="13.6"/><rect x="1508.4" y="456.5" width="13.6" height="13.6"/><rect x="1557.8" y="456.5" width="13.6" height="13.6"/><rect x="1609.5" y="456.5" width="13.6" height="13.6"/><rect x="1668.8" y="456.5" width="13.6" height="13.6"/><rect x="1397.9" y="423.5" width="13.6" height="13.6"/><rect x="1396.7" y="390.2" width="13.6" height="13.6"/><rect x="1393.9" y="358.9" width="13.6" height="13.6"/><rect x="1392.2" y="325.2" width="13.6" height="13.6"/><rect x="1389.4" y="288.8" width="13.6" height="13.6"/><rect x="1373.5" y="492.3" width="13.6" height="13.6"/><rect x="1347.2" y="525.1" width="13.6" height="13.6"/><rect x="1321.0" y="556.8" width="13.6" height="13.6"/><rect x="1295.2" y="588.8" width="13.6" height="13.6"/><rect x="1266.2" y="625.2" width="13.6" height="13.6"/><rect x="1402.3" y="480.2" width="13.6" height="13.6"/><rect x="1403.5" y="503.1" width="13.6" height="13.6"/><rect x="1404.0" y="522.5" width="13.6" height="13.6"/><rect x="1405.2" y="544.1" width="13.6" height="13.6"/><rect x="1407.0" y="567.5" width="13.6" height="13.6"/><rect x="1418.0" y="435.5" width="13.6" height="13.6"/><rect x="1436.0" y="412.8" width="13.6" height="13.6"/><rect x="1453.2" y="391.4" width="13.6" height="13.6"/><rect x="1469.3" y="371.2" width="13.6" height="13.6"/><rect x="1487.7" y="348.2" width="13.6" height="13.6"/></g>
<rect x="1400.3" y="458" width="14.2" height="14.2" fill="rgba(255,255,255,0.75)" stroke="#000" stroke-width="2"/>
<g stroke="#1a1a1a" stroke-width="1.3" fill-opacity="0.82"><circle cx="1380.2" cy="469.0" r="4.5" fill="#93aeae"/><circle cx="1368.3" cy="469.0" r="4.5" fill="#77aeae"/><circle cx="1353.8" cy="469.0" r="4.5" fill="#5baeae"/><circle cx="1341.3" cy="470.6" r="4.5" fill="#40aeae"/><circle cx="1330.4" cy="470.6" r="4.5" fill="#24aeae"/><circle cx="1442.5" cy="468.1" r="4.5" fill="#bea0a0"/><circle cx="1501.7" cy="466.5" r="4.5" fill="#be8282"/><circle cx="1555.2" cy="466.5" r="4.5" fill="#be6363"/><circle cx="1606.0" cy="465.0" r="4.5" fill="#be4646"/><circle cx="1658.3" cy="465.0" r="4.5" fill="#be2828"/><circle cx="1393.1" cy="433.3" r="4.5" fill="#93ae93"/><circle cx="1391.3" cy="395.6" r="4.5" fill="#77ae77"/><circle cx="1390.1" cy="356.3" r="4.5" fill="#5bae5b"/><circle cx="1389.3" cy="320.6" r="4.5" fill="#40ae40"/><circle cx="1387.5" cy="285.6" r="4.5" fill="#24ae24"/><circle cx="1368.5" cy="505.9" r="4.5" fill="#a0a0be"/><circle cx="1343.8" cy="541.9" r="4.5" fill="#8282be"/><circle cx="1319.2" cy="576.6" r="4.5" fill="#6363be"/><circle cx="1297.3" cy="608.6" r="4.5" fill="#4646be"/><circle cx="1276.9" cy="638.6" r="4.5" fill="#2828be"/><circle cx="1394.4" cy="492.5" r="4.5" fill="#bea0be"/><circle cx="1394.7" cy="517.3" r="4.5" fill="#be82be"/><circle cx="1396.1" cy="539.0" r="4.5" fill="#be63be"/><circle cx="1396.3" cy="563.6" r="4.5" fill="#be46be"/><circle cx="1397.7" cy="584.0" r="4.5" fill="#be28be"/><circle cx="1410.4" cy="445.3" r="4.5" fill="#bebea0"/><circle cx="1428.4" cy="419.2" r="4.5" fill="#bebe82"/><circle cx="1446.6" cy="392.8" r="4.5" fill="#bebe63"/><circle cx="1463.1" cy="368.8" r="4.5" fill="#bebe46"/><circle cx="1479.2" cy="345.6" r="4.5" fill="#bebe28"/><circle cx="1394.8" cy="468.1" r="4.5" fill="#ffffff" fill-opacity="1"/></g>
<g clip-path="url(#cins)"><g filter="url(#vblur)"><rect x="1600.3" y="145.3" width="234.0" height="6.6" fill="url(#ii0)"/><rect x="1600.3" y="151.3" width="234.0" height="6.6" fill="url(#ii1)"/><rect x="1600.3" y="157.3" width="234.0" height="6.6" fill="url(#ii2)"/><rect x="1600.3" y="163.3" width="234.0" height="6.6" fill="url(#ii3)"/><rect x="1600.3" y="169.3" width="234.0" height="6.6" fill="url(#ii4)"/><rect x="1600.3" y="175.3" width="234.0" height="6.6" fill="url(#ii5)"/><rect x="1600.3" y="181.3" width="234.0" height="6.6" fill="url(#ii6)"/><rect x="1600.3" y="187.3" width="234.0" height="6.6" fill="url(#ii7)"/><rect x="1600.3" y="193.3" width="234.0" height="6.6" fill="url(#ii8)"/><rect x="1600.3" y="199.3" width="234.0" height="6.6" fill="url(#ii9)"/><rect x="1600.3" y="205.3" width="234.0" height="6.6" fill="url(#ii10)"/><rect x="1600.3" y="211.3" width="234.0" height="6.6" fill="url(#ii11)"/><rect x="1600.3" y="217.3" width="234.0" height="6.6" fill="url(#ii12)"/><rect x="1600.3" y="223.3" width="234.0" height="6.6" fill="url(#ii13)"/><rect x="1600.3" y="229.3" width="234.0" height="6.6" fill="url(#ii14)"/><rect x="1600.3" y="235.3" width="234.0" height="6.6" fill="url(#ii15)"/><rect x="1600.3" y="241.3" width="234.0" height="6.6" fill="url(#ii16)"/><rect x="1600.3" y="247.3" width="234.0" height="6.6" fill="url(#ii17)"/><rect x="1600.3" y="253.3" width="234.0" height="6.6" fill="url(#ii18)"/><rect x="1600.3" y="259.3" width="234.0" height="6.6" fill="url(#ii19)"/><rect x="1600.3" y="265.3" width="234.0" height="6.6" fill="url(#ii20)"/><rect x="1600.3" y="271.3" width="234.0" height="6.6" fill="url(#ii21)"/><rect x="1600.3" y="277.3" width="234.0" height="6.6" fill="url(#ii22)"/><rect x="1600.3" y="283.3" width="234.0" height="6.6" fill="url(#ii23)"/><rect x="1600.3" y="289.3" width="234.0" height="6.6" fill="url(#ii24)"/><rect x="1600.3" y="295.3" width="234.0" height="6.6" fill="url(#ii25)"/><rect x="1600.3" y="301.3" width="234.0" height="6.6" fill="url(#ii26)"/><rect x="1600.3" y="307.3" width="234.0" height="6.6" fill="url(#ii27)"/><rect x="1600.3" y="313.3" width="234.0" height="6.6" fill="url(#ii28)"/><rect x="1600.3" y="319.3" width="234.0" height="6.6" fill="url(#ii29)"/><rect x="1600.3" y="325.3" width="234.0" height="6.6" fill="url(#ii30)"/><rect x="1600.3" y="331.3" width="234.0" height="6.6" fill="url(#ii31)"/><rect x="1600.3" y="337.3" width="234.0" height="6.6" fill="url(#ii32)"/><rect x="1600.3" y="343.3" width="234.0" height="6.6" fill="url(#ii33)"/><rect x="1600.3" y="349.3" width="234.0" height="6.6" fill="url(#ii34)"/><rect x="1600.3" y="355.3" width="234.0" height="4.3" fill="url(#ii35)"/></g><path d="M1595.3 170.3 L1839.3 334.3 L1839.3 148.3 L1595.3 148.3 Z" fill="#000000" fill-opacity="0.40"/></g>
<rect x="1600.3" y="153.3" width="234.0" height="197.7" fill="none" stroke="#8c8c8c" stroke-width="1.2"/>
<rect x="1709.5" y="244.8" width="13.6" height="13.6" fill="none" stroke="#ffffff" stroke-width="1.8"/>
<circle cx="1627.9" cy="195.1" r="4.5" fill="#b4ac1c" fill-opacity="0.9" stroke="#1a1a1a" stroke-width="1.3"/>
<text x="100.5" y="162.1" font-size="43.30" fill="#f2f2f2" textLength="348.5" lengthAdjust="spacingAndGlyphs" >Saturation Sweeps</text>
<text x="92.2" y="770.5" font-size="29.30" fill="#f2f2f2" textLength="232.4" lengthAdjust="spacingAndGlyphs" >Current Reading</text>
<text x="92.2" y="815.2" font-size="23.20" fill="#f2f2f2" textLength="108.0" lengthAdjust="spacingAndGlyphs" >x: 0,4001</text>
<text x="92.2" y="858.4" font-size="23.20" fill="#f2f2f2" textLength="109.1" lengthAdjust="spacingAndGlyphs" >y: 0,5198</text>
<text x="92.2" y="901.5" font-size="23.20" fill="#f2f2f2" textLength="100.7" lengthAdjust="spacingAndGlyphs" >fL: 57,87</text>
<text x="92.2" y="944.7" font-size="23.20" fill="#f2f2f2" textLength="166.6" lengthAdjust="spacingAndGlyphs" >cd/m²: 198,27</text>
<rect x="455.30" y="750.40" width="266.80" height="190.80" fill="#262626" />
<line x1="455.30" y1="893.50" x2="722.10" y2="893.50" stroke="#ababab" stroke-width="1.3" />
<line x1="455.30" y1="845.80" x2="722.10" y2="845.80" stroke="#ababab" stroke-width="1.3" />
<line x1="455.30" y1="798.10" x2="722.10" y2="798.10" stroke="#ababab" stroke-width="1.3" />
<line x1="448.30" y1="750.40" x2="722.10" y2="750.40" stroke="#ababab" stroke-width="1.6" />
<line x1="722.10" y1="750.40" x2="722.10" y2="947.70" stroke="#ababab" stroke-width="1.4" />
<line x1="455.30" y1="750.40" x2="455.30" y2="947.70" stroke="#c8c8c8" stroke-width="1.5" />
<line x1="448.30" y1="941.20" x2="722.10" y2="941.20" stroke="#c8c8c8" stroke-width="1.5" />
<line x1="448.30" y1="941.20" x2="455.30" y2="941.20" stroke="#c8c8c8" stroke-width="1.3" />
<text x="447.8" y="946.6" font-size="15.00" fill="#e4e4e4" text-anchor="end" >90</text>
<line x1="448.30" y1="893.50" x2="455.30" y2="893.50" stroke="#c8c8c8" stroke-width="1.3" />
<text x="447.8" y="898.9" font-size="15.00" fill="#e4e4e4" text-anchor="end" >95</text>
<line x1="448.30" y1="845.80" x2="455.30" y2="845.80" stroke="#c8c8c8" stroke-width="1.3" />
<text x="447.8" y="851.2" font-size="15.00" fill="#e4e4e4" text-anchor="end" >100</text>
<line x1="448.30" y1="798.10" x2="455.30" y2="798.10" stroke="#c8c8c8" stroke-width="1.3" />
<text x="447.8" y="803.5" font-size="15.00" fill="#e4e4e4" text-anchor="end" >105</text>
<line x1="448.30" y1="750.40" x2="455.30" y2="750.40" stroke="#c8c8c8" stroke-width="1.3" />
<text x="447.8" y="755.8" font-size="15.00" fill="#e4e4e4" text-anchor="end" >110</text>
<text x="572.9" y="744.0" font-size="15.00" fill="#e4e4e4" text-anchor="middle" textLength="87.0" lengthAdjust="spacingAndGlyphs" >RGB Balance</text>
<text x="589.4" y="958.2" font-size="15.00" fill="#e4e4e4" text-anchor="middle" >100%</text>
<rect x="482.8" y="908.6" width="68.0" height="32.0" fill="url(#rbr)" stroke="#000" stroke-width="1.2"/>
<rect x="552.7" y="834.1" width="69.7" height="106.5" fill="url(#rbg)" stroke="#000" stroke-width="1.2"/>
<rect x="624.3" y="838.9" width="69.2" height="101.7" fill="url(#rbb)" stroke="#000" stroke-width="1.2"/>
<line x1="448.30" y1="941.20" x2="722.10" y2="941.20" stroke="#c8c8c8" stroke-width="1.5" />
<rect x="743.40" y="723.20" width="776.60" height="216.50" fill="#1c1c1c" />
<rect x="744.60" y="724.40" width="774.20" height="32.60" fill="url(#thd)" />
<rect x="744.60" y="757.00" width="774.20" height="30.60" fill="#474747" />
<rect x="744.60" y="787.30" width="774.20" height="30.80" fill="#828282" />
<rect x="744.60" y="817.80" width="774.20" height="30.70" fill="#414141" />
<rect x="744.60" y="848.20" width="774.20" height="30.10" fill="#808080" />
<rect x="744.60" y="878.00" width="774.20" height="30.40" fill="#3f3f3f" />
<rect x="744.60" y="908.10" width="774.20" height="30.70" fill="#7f7f7f" />
<text x="987.8" y="747.7" font-size="17.00" fill="#f4f4f4" textLength="42.5" lengthAdjust="spacingAndGlyphs" font-family="DejaVu Sans, Liberation Sans, sans-serif">20%</text>
<text x="1101.0" y="747.7" font-size="17.00" fill="#f4f4f4" textLength="42.5" lengthAdjust="spacingAndGlyphs" font-family="DejaVu Sans, Liberation Sans, sans-serif">40%</text>
<text x="1214.2" y="747.7" font-size="17.00" fill="#f4f4f4" textLength="42.5" lengthAdjust="spacingAndGlyphs" font-family="DejaVu Sans, Liberation Sans, sans-serif">60%</text>
<text x="1327.3" y="747.7" font-size="17.00" fill="#f4f4f4" textLength="42.5" lengthAdjust="spacingAndGlyphs" font-family="DejaVu Sans, Liberation Sans, sans-serif">80%</text>
<text x="1434.3" y="747.7" font-size="17.00" fill="#f4f4f4" textLength="55.0" lengthAdjust="spacingAndGlyphs" font-family="DejaVu Sans, Liberation Sans, sans-serif">100%</text>
<text x="764.6" y="779.0" font-size="17.00" fill="#f4f4f4" font-weight="bold" textLength="91.4" lengthAdjust="spacingAndGlyphs" font-family="DejaVu Sans, Liberation Sans, sans-serif">x: CIE31</text>
<text x="958.5" y="779.0" font-size="17.00" fill="#f4f4f4" textLength="71.5" lengthAdjust="spacingAndGlyphs" font-family="DejaVu Sans, Liberation Sans, sans-serif">0,3163</text>
<text x="1071.7" y="779.0" font-size="17.00" fill="#f4f4f4" textLength="71.5" lengthAdjust="spacingAndGlyphs" font-family="DejaVu Sans, Liberation Sans, sans-serif">0,3382</text>
<text x="1184.9" y="779.0" font-size="17.00" fill="#f4f4f4" textLength="71.5" lengthAdjust="spacingAndGlyphs" font-family="DejaVu Sans, Liberation Sans, sans-serif">0,3604</text>
<text x="1298.1" y="779.0" font-size="17.00" fill="#f4f4f4" textLength="71.5" lengthAdjust="spacingAndGlyphs" font-family="DejaVu Sans, Liberation Sans, sans-serif">0,3805</text>
<text x="1411.3" y="779.0" font-size="17.00" fill="#f4f4f4" textLength="71.5" lengthAdjust="spacingAndGlyphs" font-family="DejaVu Sans, Liberation Sans, sans-serif">0,4001</text>
<text x="764.6" y="809.3" font-size="17.00" fill="#f4f4f4" font-weight="bold" textLength="91.4" lengthAdjust="spacingAndGlyphs" font-family="DejaVu Sans, Liberation Sans, sans-serif">y: CIE31</text>
<text x="958.5" y="809.3" font-size="17.00" fill="#f4f4f4" textLength="71.5" lengthAdjust="spacingAndGlyphs" font-family="DejaVu Sans, Liberation Sans, sans-serif">0,3594</text>
<text x="1071.7" y="809.3" font-size="17.00" fill="#f4f4f4" textLength="71.5" lengthAdjust="spacingAndGlyphs" font-family="DejaVu Sans, Liberation Sans, sans-serif">0,4015</text>
<text x="1184.9" y="809.3" font-size="17.00" fill="#f4f4f4" textLength="71.5" lengthAdjust="spacingAndGlyphs" font-family="DejaVu Sans, Liberation Sans, sans-serif">0,4440</text>
<text x="1298.1" y="809.3" font-size="17.00" fill="#f4f4f4" textLength="71.5" lengthAdjust="spacingAndGlyphs" font-family="DejaVu Sans, Liberation Sans, sans-serif">0,4825</text>
<text x="1411.3" y="809.3" font-size="17.00" fill="#f4f4f4" textLength="71.5" lengthAdjust="spacingAndGlyphs" font-family="DejaVu Sans, Liberation Sans, sans-serif">0,5198</text>
<text x="764.6" y="839.8" font-size="17.00" fill="#f4f4f4" font-weight="bold" textLength="14.5" lengthAdjust="spacingAndGlyphs" font-family="DejaVu Sans, Liberation Sans, sans-serif">Y</text>
<text x="958.5" y="839.8" font-size="17.00" fill="#f4f4f4" textLength="99.6" lengthAdjust="spacingAndGlyphs" font-family="DejaVu Sans, Liberation Sans, sans-serif">208,6726</text>
<text x="1071.7" y="839.8" font-size="17.00" fill="#f4f4f4" textLength="99.6" lengthAdjust="spacingAndGlyphs" font-family="DejaVu Sans, Liberation Sans, sans-serif">205,1745</text>
<text x="1184.9" y="839.8" font-size="17.00" fill="#f4f4f4" textLength="99.6" lengthAdjust="spacingAndGlyphs" font-family="DejaVu Sans, Liberation Sans, sans-serif">202,3845</text>
<text x="1298.1" y="839.8" font-size="17.00" fill="#f4f4f4" textLength="99.6" lengthAdjust="spacingAndGlyphs" font-family="DejaVu Sans, Liberation Sans, sans-serif">200,2412</text>
<text x="1411.3" y="839.8" font-size="17.00" fill="#f4f4f4" textLength="99.6" lengthAdjust="spacingAndGlyphs" font-family="DejaVu Sans, Liberation Sans, sans-serif">198,2676</text>
<text x="764.6" y="870.2" font-size="17.00" fill="#f4f4f4" font-weight="bold" textLength="166.4" lengthAdjust="spacingAndGlyphs" font-family="DejaVu Sans, Liberation Sans, sans-serif">Target x:CIE31</text>
<text x="958.5" y="870.2" font-size="17.00" fill="#f4f4f4" textLength="71.5" lengthAdjust="spacingAndGlyphs" font-family="DejaVu Sans, Liberation Sans, sans-serif">0,3344</text>
<text x="1071.7" y="870.2" font-size="17.00" fill="#f4f4f4" textLength="71.5" lengthAdjust="spacingAndGlyphs" font-family="DejaVu Sans, Liberation Sans, sans-serif">0,3564</text>
<text x="1184.9" y="870.2" font-size="17.00" fill="#f4f4f4" textLength="71.5" lengthAdjust="spacingAndGlyphs" font-family="DejaVu Sans, Liberation Sans, sans-serif">0,3773</text>
<text x="1298.1" y="870.2" font-size="17.00" fill="#f4f4f4" textLength="71.5" lengthAdjust="spacingAndGlyphs" font-family="DejaVu Sans, Liberation Sans, sans-serif">0,3969</text>
<text x="1411.3" y="870.2" font-size="17.00" fill="#f4f4f4" textLength="71.5" lengthAdjust="spacingAndGlyphs" font-family="DejaVu Sans, Liberation Sans, sans-serif">0,4193</text>
<text x="764.6" y="900.0" font-size="17.00" fill="#f4f4f4" font-weight="bold" textLength="166.4" lengthAdjust="spacingAndGlyphs" font-family="DejaVu Sans, Liberation Sans, sans-serif">Target y:CIE31</text>
<text x="958.5" y="900.0" font-size="17.00" fill="#f4f4f4" textLength="71.5" lengthAdjust="spacingAndGlyphs" font-family="DejaVu Sans, Liberation Sans, sans-serif">0,3648</text>
<text x="1071.7" y="900.0" font-size="17.00" fill="#f4f4f4" textLength="71.5" lengthAdjust="spacingAndGlyphs" font-family="DejaVu Sans, Liberation Sans, sans-serif">0,4013</text>
<text x="1184.9" y="900.0" font-size="17.00" fill="#f4f4f4" textLength="71.5" lengthAdjust="spacingAndGlyphs" font-family="DejaVu Sans, Liberation Sans, sans-serif">0,4358</text>
<text x="1298.1" y="900.0" font-size="17.00" fill="#f4f4f4" textLength="71.5" lengthAdjust="spacingAndGlyphs" font-family="DejaVu Sans, Liberation Sans, sans-serif">0,4682</text>
<text x="1411.3" y="900.0" font-size="17.00" fill="#f4f4f4" textLength="71.5" lengthAdjust="spacingAndGlyphs" font-family="DejaVu Sans, Liberation Sans, sans-serif">0,5053</text>
<text x="764.6" y="930.1" font-size="17.00" fill="#f4f4f4" font-weight="bold" textLength="95.5" lengthAdjust="spacingAndGlyphs" font-family="DejaVu Sans, Liberation Sans, sans-serif">Target Y</text>
<text x="958.5" y="930.1" font-size="17.00" fill="#f4f4f4" textLength="99.6" lengthAdjust="spacingAndGlyphs" font-family="DejaVu Sans, Liberation Sans, sans-serif">212,0766</text>
<text x="1071.7" y="930.1" font-size="17.00" fill="#f4f4f4" textLength="99.6" lengthAdjust="spacingAndGlyphs" font-family="DejaVu Sans, Liberation Sans, sans-serif">208,3541</text>
<text x="1184.9" y="930.1" font-size="17.00" fill="#f4f4f4" textLength="99.6" lengthAdjust="spacingAndGlyphs" font-family="DejaVu Sans, Liberation Sans, sans-serif">205,4938</text>
<text x="1298.1" y="930.1" font-size="17.00" fill="#f4f4f4" textLength="99.6" lengthAdjust="spacingAndGlyphs" font-family="DejaVu Sans, Liberation Sans, sans-serif">203,2491</text>
<text x="1411.3" y="930.1" font-size="17.00" fill="#f4f4f4" textLength="99.6" lengthAdjust="spacingAndGlyphs" font-family="DejaVu Sans, Liberation Sans, sans-serif">201,0789</text>
<rect x="0.00" y="968.40" width="1920.00" height="70.60" fill="url(#bbar)" />
<path d="M1.8 1040V973.2a4 4 0 0 1 4-4H48a4 4 0 0 1 4 4V1040Z" fill="url(#bi)"/>
<circle cx="26.7" cy="978" r="8.6" fill="url(#upc)"/>
<path d="M22.4 980.2h8.6l-4.3-4.8z" fill="#1e1e1e"/>
<rect x="7.3" y="998.4" width="38.8" height="33.4" rx="4" fill="#ffff00" stroke="#9c9c00" stroke-width="1.2"/>
<path d="M59.1 1040V974.2a5 5 0 0 1 5-5H223.1a5 5 0 0 1 5 5V1040Z" fill="url(#bi)"/>
<rect x="65.1" y="975.4" width="157.6" height="39.8" rx="4" fill="#c2c2a4" stroke="#80806a" stroke-width="1"/>
<text x="143.4" y="1032.7" font-size="11.30" fill="#262626" text-anchor="middle" font-weight="bold" >20%</text>
<path d="M230.9 1040V974.2a5 5 0 0 1 5-5H394.9a5 5 0 0 1 5 5V1040Z" fill="url(#bi)"/>
<rect x="236.9" y="975.4" width="157.6" height="39.8" rx="4" fill="#c2c086" stroke="#80806a" stroke-width="1"/>
<text x="315.2" y="1032.7" font-size="11.30" fill="#262626" text-anchor="middle" font-weight="bold" >40%</text>
<path d="M403.0 1040V974.2a5 5 0 0 1 5-5H567.0a5 5 0 0 1 5 5V1040Z" fill="url(#bi)"/>
<rect x="409.0" y="975.4" width="157.6" height="39.8" rx="4" fill="#c2c06a" stroke="#80806a" stroke-width="1"/>
<text x="487.3" y="1032.7" font-size="11.30" fill="#262626" text-anchor="middle" font-weight="bold" >60%</text>
<path d="M574.9 1040V974.2a5 5 0 0 1 5-5H738.9a5 5 0 0 1 5 5V1040Z" fill="url(#bi)"/>
<rect x="580.9" y="975.4" width="157.6" height="39.8" rx="4" fill="#c2be48" stroke="#80806a" stroke-width="1"/>
<text x="659.2" y="1032.7" font-size="11.30" fill="#262626" text-anchor="middle" font-weight="bold" >80%</text>
<path d="M745.6 1040V974.2a5 5 0 0 1 5-5H910.0a5 5 0 0 1 5 5V1040Z" fill="url(#bsel)"/>
<rect x="751.4" y="974.4" width="158.6" height="41.4" rx="4.5" fill="#c8c400" stroke="#6c6a00" stroke-width="1"/>
<text x="830.6" y="1032.7" font-size="11.30" fill="#ffffff" text-anchor="middle" font-weight="bold" >100%</text>
<path d="M1563.3 1040V973.2a4 4 0 0 1 4-4H1613.3a4 4 0 0 1 4 4V1040Z" fill="url(#cbl)"/>
<line x1="1563.30" y1="989.80" x2="1617.30" y2="989.80" stroke="#4e4e4e" stroke-width="1.3" />
<circle cx="1590.4" cy="979.3" r="8.8" fill="url(#cbc)"/>
<path d="M1585.6 981.5h9.6l-4.8-5z" fill="#383838"/>
<rect x="1574.4" y="997.7" width="31.8" height="31.9" rx="4.5" fill="url(#sti)" stroke="#1c1c1c" stroke-width="2.5"/>
<rect x="1582.90" y="1006.70" width="15.00" height="15.00" fill="url(#sts)" />
<rect x="1618.80" y="969.00" width="255.20" height="33.60" fill="url(#cb1)" />
<line x1="1670.40" y1="969.00" x2="1670.40" y2="1002.60" stroke="#3a3a3a" stroke-width="1.5" />
<line x1="1721.40" y1="969.00" x2="1721.40" y2="1002.60" stroke="#3a3a3a" stroke-width="1.5" />
<line x1="1772.30" y1="969.00" x2="1772.30" y2="1002.60" stroke="#3a3a3a" stroke-width="1.5" />
<line x1="1823.40" y1="969.00" x2="1823.40" y2="1002.60" stroke="#3a3a3a" stroke-width="1.5" />
<circle cx="1644.6" cy="986" r="11" fill="url(#cbc)"/>
<circle cx="1695.9" cy="986" r="11" fill="url(#cbc)"/>
<circle cx="1746.8" cy="986" r="11" fill="url(#cbc)"/>
<circle cx="1797.8" cy="986" r="11" fill="url(#cbc)"/>
<circle cx="1848.7" cy="986" r="11" fill="url(#cbc)"/>
<rect x="1640.20" y="981.60" width="8.80" height="8.80" fill="#3a3a3a" />
<path d="M1692.3 981.2v10.4l9.6-5.2z" fill="#3a3a3a"/>
<g fill="none" stroke="#3a3a3a" stroke-width="1.9"><path d="M1743.2 980.8h-2.6v10.4h2.6M1750.4 980.8h2.6v10.4h-2.6"/></g>
<circle cx="1745.2" cy="986" r="0.9" fill="#3a3a3a"/><circle cx="1748.4" cy="986" r="0.9" fill="#3a3a3a"/>
<text x="1797.8" y="991.6" font-size="17.00" fill="#3a3a3a" text-anchor="middle" font-weight="bold" textLength="16.0" lengthAdjust="spacingAndGlyphs" >∞</text>
<g fill="none" stroke="#3a3a3a" stroke-width="2.1"><path d="M1843.5 984.6a5.4 5.4 0 0 1 9.6-2.4"/><path d="M1853.9 987.4a5.4 5.4 0 0 1-9.6 2.4"/></g>
<path d="M1854.5 979.4v4.6h-4.6z" fill="#3a3a3a"/><path d="M1842.9 992.6v-4.6h4.6z" fill="#3a3a3a"/>
<rect x="1874.00" y="969.00" width="46.00" height="33.60" fill="#2f2f2f" />
<circle cx="1901.2" cy="985.8" r="11.6" fill="#3b3b3b"/>
<path d="M1618.8 1037.6V1008a4 4 0 0 1 4-4H1920V1037.6Z" fill="url(#cb2)"/>
<line x1="1772.30" y1="1004.00" x2="1772.30" y2="1037.60" stroke="#3a3a3a" stroke-width="1.5" />
<rect x="1563.30" y="1037.60" width="357.00" height="1.60" fill="#2a2a2a" />
<circle cx="1653.4" cy="1020.9" r="11.3" fill="url(#cbc)"/><circle cx="1894.2" cy="1020.9" r="11.3" fill="url(#cbc)"/>
<g fill="none" stroke="#444" stroke-width="1.5"><path d="M1653 1015.6l-4 5.3l4 5.3M1658 1015.6l-4 5.3l4 5.3"/><path d="M1890 1015.6l4 5.3l-4 5.3M1895 1015.6l4 5.3l-4 5.3"/></g>
<text x="1684.2" y="1029.7" font-size="23.70" fill="#3a3a3a" textLength="56.2" lengthAdjust="spacingAndGlyphs" stroke="#3a3a3a" stroke-width="0.5">Back</text>
<text x="1804.7" y="1029.7" font-size="23.70" fill="#3a3a3a" textLength="58.1" lengthAdjust="spacingAndGlyphs" stroke="#3a3a3a" stroke-width="0.5">Next</text>
</svg>
</body></html>
